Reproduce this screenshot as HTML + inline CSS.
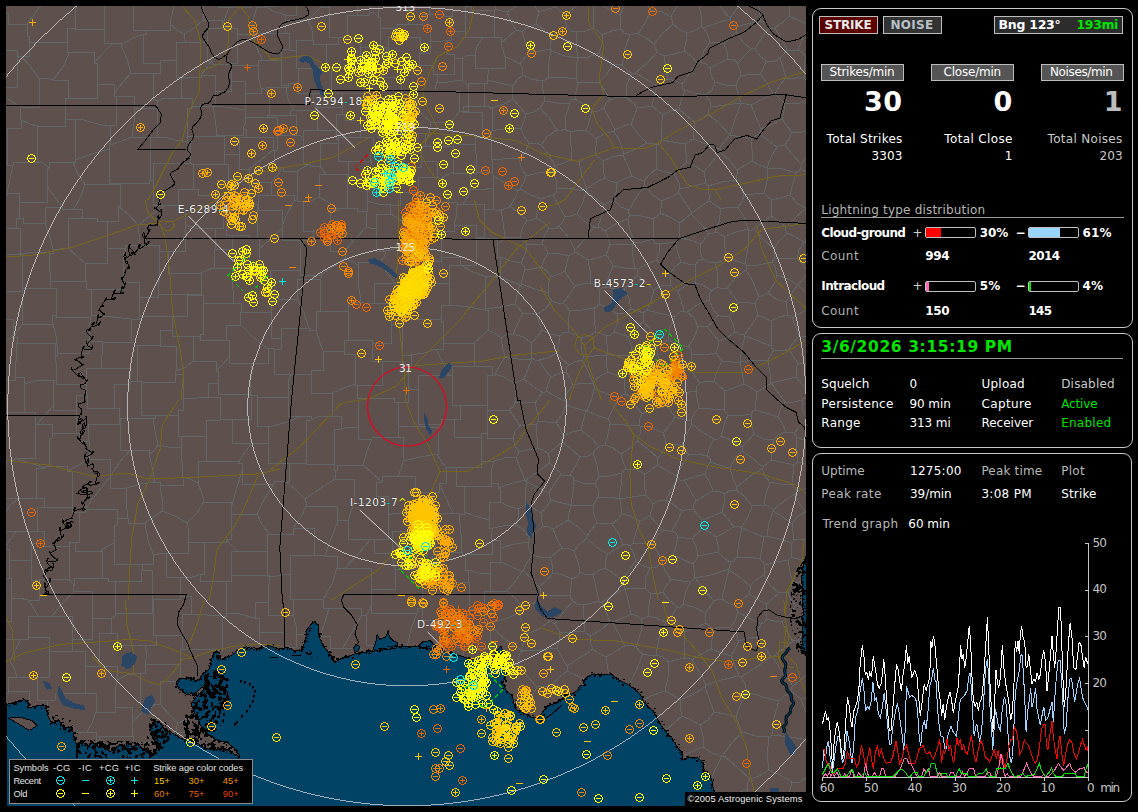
<!DOCTYPE html><html><head><meta charset="utf-8"><title>Lightning detector</title><style>
html,body{margin:0;padding:0;background:#000;}
body{width:1138px;height:812px;position:relative;overflow:hidden;}
.t{position:absolute;white-space:pre;display:block}
.box{position:absolute;border:1px solid #c8c8c8;border-radius:9px;box-sizing:content-box}
.btn{position:absolute;border:1px solid #bdbdbd;box-sizing:content-box}
.hl{position:absolute;height:1px;background:#9a9a9a}
.bar{position:absolute;width:49px;height:9px;border:1px solid #c0c0c0;border-radius:2px;background:#000;box-sizing:content-box}
.bar i{display:block;height:9px}
svg{position:absolute;display:block}
</style></head><body>
<svg width="800" height="800" viewBox="6 6 800 800" style="left:6px;top:6px">
<rect x="6" y="6" width="800" height="800" fill="#5e504c"/>
<path d="M819 2L815 -4L811 -10M819 2L814 13L812 27M821 30L817 29L812 27M182 639V614H191M182 639V649H189M191 614L207 615L222 616M222 616V650H217M189 649L204 649L217 650M259 632V618H255M259 632V656H241M255 618L240 614L226 613M241 656L233 657L223 657M226 613V616H222M217 650V657H223M182 639V635H156M180 596H191V614M180 596V599H153M156 635H153V599M62 -1L66 2L69 3M69 3H106V-5M860 696L830 698L801 699M894 706L853 722L812 736M801 699L808 718L812 736M813 767L810 752L809 740M812 736L810 739L809 740M583 821L586 807L590 795M621 818L612 807L603 796M590 795L597 795L603 796M333 816H352V804M373 817V804H352M243 805H236V877M243 805V804H245M245 804V815H279M206 928L204 867L202 807M202 807V803H206M206 803L225 805L243 805M210 782H206V803M210 782V771H228M228 771V780H249M249 780H245V804M282 775H290V812M282 775L270 775L260 773M290 812V815H279M249 780H260V773M492 375H487V397M492 375V366H474M474 366H452V376M452 376V405H460M487 397V405H460M285 772H321V768M285 772V736H287M287 736V730H295M295 730L306 735L315 740M315 740V768H321M297 815V810H313M297 815V812H290M313 810L321 790L326 772M282 775V772H285M326 772H321V768M313 810H333V816M789 6L798 -2L806 -10M789 6L779 -0L771 -7M817 148L808 155L801 164M801 164L801 166L800 169M800 169L811 174L819 181M724 237L725 248L727 257M724 237L736 232L748 229M745 264L748 247L748 230M745 264L737 261L727 257M748 229L749 228L748 230M823 80L816 83L810 83M810 83L807 92L806 102M844 101L828 104L810 107M810 107L809 105L806 102M820 57L812 57L806 57M806 57L804 66L804 77M804 77L806 81L810 83M775 94L780 85L786 78M775 94L779 98L784 103M804 77L796 78L786 78M784 103L794 104L806 102M812 130L812 119L810 107M674 174L681 167L687 162M674 174L665 172L656 169M656 169L657 157L656 145M687 162L686 153L685 144M685 144L673 142L662 140M656 145L660 144L662 140M645 185L652 194L661 201M645 185L644 182L644 181M680 189L679 183L674 174M680 189L678 191L679 193M679 193L671 197L661 201M644 181L649 175L656 169M644 181L638 179L632 176M647 143L636 149L624 154M647 143L652 143L656 145M624 154L623 154L623 155M632 176L628 166L623 155M-4 578H9V560M-32 534L-13 542L5 549M9 560V549H5M31 564V543H44M31 564V560H9M16 531L25 531L37 531M16 531L9 541L5 549M44 543V531H37M67 471H72V507M67 471V466H49M49 466H45V468M45 468H36V498M72 507L59 507L44 507M44 507V498H36M75 542H79V512M75 542H69V546M69 546H44V543M79 512H72V507M37 531V507H44M85 509L98 492L110 477M85 509H117V525M117 525V518H128M128 518L126 502L126 488M110 477V488H126M79 512H85V509M110 477V459H89M110 477L111 478L110 477M89 459L79 465L67 471M75 542V551H100M100 551L106 547L114 543M114 543V525H117M114 543V564H142M145 523H128V518M145 523L148 540L153 554M153 554V564H142M287 736H259V732M260 773H251V737M259 732H251V737M225 750L237 743L250 737M225 750V771H228M251 737L250 735L250 737M225 750H211V743M211 743H212V724M212 724V715H230M250 737V715H230M141 570V581H108M141 570H152V598M152 598V613H115M108 581H115V613M100 551H102V578M102 578H108V581M142 564V570H141M9 128H-27V124M9 128H7V159M-39 161H7V159M17 57V87H-3M17 57V50H-8M9 128H21V120M-3 87L8 99L20 107M21 120L20 114L20 107M17 57V56H21M20 107H39V78M21 56L30 66L39 78M44 2L35 13L27 24M44 2H17V-37M27 24H8V13M8 13H1V-12M62 -1L54 1L44 2M-19 25V13H8M21 56H29V36M29 36H27V24M97 84V63H94M97 84V98H68M68 98V80H53M53 80L63 67L70 52M94 63V52H70M69 3H75V28M29 36V42H67M75 28H67V42M53 80L47 78L39 78M70 52H67V42M75 28V29H104M111 -2H104V29M94 63L103 53L113 43M104 29V43H113M21 120L30 124L37 126M68 98H65V117M37 126H65V117M494 10H471V6M494 10V37H484M484 37L485 37L483 37M483 37H465V27M465 27V6H471M439 -13V0H452M452 0L458 -1L465 -0M801 699L796 695L792 692M772 735L774 718L779 701M772 735L790 737L809 740M779 701L784 696L792 692M816 664L805 676L793 686M793 686L791 688L792 692M813 767L810 774L805 778M826 810L814 793L805 778M560 827L554 814L548 799M590 795L589 794L590 795M548 799L549 795L551 789M590 795L570 791L551 789M642 819L644 807L644 795M603 796L611 787L622 780M622 780L633 789L644 795M683 788L685 789L684 789M683 788L670 787L657 784M684 789L682 802L682 818M657 784L651 789L644 795M548 799L536 805L523 810M517 834L521 823L523 810M779 701L763 697L747 692M793 686L782 672L773 657M771 657L773 656L773 657M771 657L758 666L741 677M741 677L745 684L747 692M769 737L756 736L742 732M769 737L771 737L772 735M742 732L739 725L736 717M747 692L741 703L736 717M683 788L685 772L685 755M653 762L654 772L657 784M653 762L662 755L673 750M673 750L678 752L685 755M373 817V805H392M414 814V807H411M411 807L403 808L392 805M259 632H284V647M255 618V602H268M293 615H268V602M293 615L296 625L296 634M296 634V647H285M284 647L285 648L285 647M430 687L414 692L400 695M430 687L433 697L440 705M440 705V723H428M400 695L401 697L400 699M400 699L405 712L413 725M428 723H413V725M372 717V699H400M372 717L366 711L358 704M357 686L357 695L358 704M357 686V679H362M393 683V679H362M393 683V695H400M372 717V738H375M375 738V736H405M405 736V725H413M371 743L363 744L352 745M371 743H378V768M352 745H332V772M378 768V773H376M376 773H351V785M351 785H332V772M375 738L374 740L371 743M336 717V704H358M336 717L335 722L335 729M335 729H352V745M315 740V729H335M326 772L329 772L332 772M352 804L351 794L351 785M392 805V773H376M707 456L698 454L689 454M707 456L710 458L710 462M689 454L682 465L676 476M676 476L677 476L678 478M678 478L680 480L684 480M684 480L695 477L705 474M710 462L708 466L705 474M798 50L793 50L787 50M798 50L803 37L811 27M787 50L782 40L775 28M811 27L800 21L789 16M789 16L784 21L775 28M806 57L802 52L798 50M786 78L783 68L780 58M780 58L783 55L787 50M812 27L812 27L811 27M789 6L789 11L789 16M761 21L747 24L736 27M761 21L766 23L769 28M769 28L762 37L755 49M736 27L736 28L736 32M736 32L743 42L751 49M755 49L753 48L751 49M758 -5L759 8L761 21M775 28L771 28L769 28M766 61L775 61L780 58M766 61L760 56L755 49M695 122L687 116L679 109M695 122L694 129L693 139M693 139L690 141L685 144M662 140L661 128L663 115M679 109L671 111L663 115M647 143L638 134L631 124M637 108L635 115L631 124M637 108L645 107L652 106M652 106L658 111L663 115M737 63L734 59L728 59M737 63L744 56L751 49M736 32L730 38L724 44M728 59L727 52L724 44M657 86L654 96L652 106M657 86L663 82L668 79M668 79L676 81L682 84M679 109L681 101L685 90M682 84L683 89L685 90M684 51L674 54L664 56M684 51L691 56L697 63M664 56L666 67L668 79M682 84L689 74L697 63M728 59L720 63L710 68M710 42L716 42L724 44M710 42L704 51L700 62M710 68L706 64L700 62M766 61L763 69L760 74M737 63L740 70L741 76M741 76L752 74L760 74M775 94L775 95L773 94M773 94L767 83L760 74M710 68L711 75L715 82M741 76L738 80L736 86M736 86L726 85L715 82M685 90L695 93L706 95M697 63L697 61L700 62M706 95L712 90L715 82M660 213L670 217L680 223M660 213L656 217L653 219M679 238L679 231L680 223M679 238L677 242L675 242M653 239L653 230L653 219M653 239L655 243L659 244M675 242L668 243L659 244M715 263L709 262L703 259M715 263L722 261L727 257M703 259L700 252L701 244M724 237L719 233L715 232M701 244L704 240L709 233M715 232L711 234L709 233M701 244L690 240L679 238M680 223L686 218L691 214M709 233L701 224L691 214M679 193L686 204L692 213M660 213L661 208L661 201M692 213L692 213L691 214M773 94L761 100L751 105M736 86L738 94L741 103M751 105L746 104L741 103M719 149L721 150L720 152M719 149L706 144L693 139M687 162L695 166L704 172M720 152L712 162L704 172M680 189L694 186L706 183M706 183L705 178L704 172M782 119L786 125L792 132M782 119L771 125L761 129M792 132L789 139L785 145M761 129L760 132L759 134M759 134L769 141L777 147M785 145L781 145L777 147M812 130L802 132L792 132M784 103L784 111L782 119M751 105L756 117L761 129M801 164L792 154L785 145M751 139L754 137L759 134M751 139L752 149L752 161M752 161L759 165L767 168M767 168L771 157L777 147M645 185L637 196L629 210M653 219L641 216L630 215M629 210L628 212L630 215M653 239L643 242L634 242M634 242L630 230L628 219M628 219L629 217L630 215M586 191L586 190L586 191M586 191L586 190L587 189M586 191L594 197L604 205M587 189L595 183L605 178M616 183L610 181L605 178M616 183L616 192L615 201M615 201L609 202L604 205M577 214L583 202L586 191M577 214L584 221L594 227M594 227L596 228L598 227M598 227L602 215L604 205M603 161L603 170L605 178M603 161L600 158L595 155M579 162L586 158L595 155M579 162L582 176L587 189M603 161L612 157L623 155M632 176L624 179L616 183M629 210L621 207L615 201M605 231L601 228L598 227M605 231L617 223L628 219M102 355L101 361L101 368M102 355V341H89M101 368H86V384M89 341V353H58M86 384H56V369M56 369L56 363L55 358M58 353L57 356L55 358M-7 512L-2 511L5 513M5 513L11 504L20 498M20 498H2V466M-20 477L-10 470L2 466M16 531H5V513M36 498L29 498L20 498M45 468L30 463L14 458M6 460H14V458M6 460V466H2M-13 424L-3 443L6 460M52 438H49V466M52 438V433H79M89 459V441H88M79 433V441H88M432 681V654H420M432 681H457V671M420 654V643H454M457 671H463V649M463 649L457 647L454 643M472 693L465 682L457 671M472 693H459V707M459 707H440V705M430 687H432V681M472 693L480 692L487 693M471 648H499V671M471 648H463V649M499 671L493 683L487 693M392 553H374V539M392 553V531H422M374 539H388V515M413 514L399 513L388 515M413 514L417 519L422 526M422 531L423 529L422 526M17 343V337H13M17 343L16 361L15 377M-18 356L-2 345L13 337M-10 380H15V377M289 463H268V438M289 463V481H285M242 471V463H238M242 471V484H274M238 463L245 452L252 443M268 438V443H252M285 481H274V484M305 499L306 502L306 506M305 499L295 489L285 481M293 528L300 519L306 506M293 528V534H270M274 484L265 498L257 514M257 514L262 525L270 534M242 471L236 490L231 509M257 514H231V509M226 613V581H223M268 602V584H269M269 584V575H231M223 581H231V575M277 576H269V584M277 576H267V541M267 541V551H237M231 575V551H237M231 509L231 508L231 509M231 509V539H226M267 541V534H270M237 551L230 544L226 539M248 694H263V703M248 694V670H255M263 703H288V695M288 695V668H271M255 670H271V668M259 732L261 718L263 703M230 715H233V697M233 697L241 696L248 694M241 656H255V670M217 684L221 670L223 657M217 684H233V697M284 647L277 659L271 668M202 807V799H173M160 816H173V799M13 731H29V718M13 731V755H15M47 719L37 719L29 718M47 719V729H53M53 729L52 741L49 755M49 755V764H30M15 755V764H30M-9 724H13V731M15 755H-13V763M217 684H200V690M212 724H198V711M200 690L199 702L198 711M134 817H125V810M173 799H166V783M125 788L124 801L125 810M125 788V781H135M166 783H135V781M55 700V693H72M55 700H47V719M53 729V732H87M87 732L92 723L96 712M72 693H96V712M156 635V645H145M153 599L152 600L152 598M145 645H117V633M115 613L115 616L111 619M111 619V633H117M72 693H85V666M117 680V666H99M117 680L115 693L115 707M96 712H115V707M85 666L91 666L99 666M736 606L736 609L738 612M736 606L742 600L749 594M766 619L764 623L761 624M766 619L766 613L767 604M767 604L759 600L749 594M738 612L749 618L761 624M174 -1L173 10L170 24M133 -3V30H146M146 30H170V24M198 -8H203V20M203 20L194 28L184 34M170 24L177 30L184 34M-11 229L1 229L16 228M-9 259V254H20M20 254V228H16M501 43L503 50L505 57M501 43V37H484M475 55L477 46L483 37M475 55V68H488M505 57V68H488M435 91H459V112M435 91L435 88L437 82M468 86V111H460M468 86L464 82L462 80M437 82L448 82L462 80M459 112L459 112L460 111M437 82V74H433M462 80L462 69L462 58M462 58H454V54M454 54V74H433M826 810L818 817L810 823M805 778L800 782L792 782M792 782L788 797L782 814M769 737L767 755L769 770M792 782L782 776L769 770M720 800L734 795L747 789M720 800L714 795L708 788M708 788L714 772L722 756M750 779L747 784L747 789M750 779L737 767L723 755M723 755L723 756L722 756M684 789L696 789L708 788M703 747L695 750L685 755M703 747L712 753L722 756M769 770L759 776L750 779M758 812L751 800L747 789M742 732L732 743L723 755M720 800L720 811L718 821M115 817V810H125M622 780L622 771L621 763M653 762L646 758L640 755M621 763L630 761L640 755M486 818V799H482M447 827H462V797M462 797L471 799L482 799M741 677L741 677L739 676M736 717L725 714L714 712M739 676L721 680L706 685M706 685L705 686L705 687M705 687L709 698L714 712M703 747L703 736L700 725M714 712L708 720L700 725M705 687L692 695L680 700M700 725L691 720L682 716M680 700L680 708L682 716M673 750L670 740L666 730M682 716L674 723L666 730M640 755L639 738L641 722M666 730L652 725L641 722M608 554L596 547L587 538M608 554L605 561L605 568M587 538L580 544L574 551M605 568L598 571L593 574M593 574L586 575L580 572M580 572L578 562L574 551M590 795L590 777L588 758M551 789L551 785L550 785M550 785L554 775L559 765M559 765L573 762L588 758M606 754L615 757L621 763M606 754L597 756L588 757M588 757L589 758L588 758M606 754L610 741L614 728M641 722L639 719L638 718M614 728L627 721L638 718M665 691L651 696L639 703M665 691L671 694L680 700M639 703L637 711L638 718M523 711L530 699L537 687M523 711L537 723L550 734M550 734L560 728L572 722M552 686L544 686L537 687M552 686L563 702L573 719M573 719L573 721L572 722M499 671L509 666L518 664M487 693V718H506M506 718L513 714L523 711M518 664L527 676L537 687M547 742L550 739L550 734M547 742L554 755L559 765M588 757L579 741L572 722M567 671L558 678L552 686M567 671L584 679L600 688M600 688L595 701L589 713M589 713L581 715L573 719M589 713L601 721L614 728M631 614L628 600L625 589M631 614L623 618L612 622M612 622L611 623L610 622M625 589L613 595L602 602M610 622L606 612L602 602M610 622L601 630L590 636M583 605L592 603L599 601M583 605L584 618L584 631M602 602L599 602L599 601M584 631L586 633L590 636M625 646L616 651L606 657M625 646L632 645L636 647M636 647L640 652L643 654M643 654L636 671L627 689M606 657L608 670L608 684M608 684L617 685L627 689M612 622L619 634L625 646M593 649L590 642L590 636M593 649L598 653L606 657M631 614L637 616L642 619M642 619L641 632L636 647M669 662L668 677L665 691M669 662L662 657L656 655M639 703L634 695L627 689M656 655L648 655L643 654M567 671L568 668L567 666M600 688L606 687L608 684M593 649L581 657L567 666M416 761L432 760L447 760M416 761H411V766M411 766H413V804M413 804H449V784M449 784H447V760M405 736V761H416M378 768V766H411M411 807L411 806L413 804M462 797V784H449M299 701H295V697M299 701L307 702L316 701M295 697V667H305M316 701L323 690L332 682M332 682V662H324M324 662V667H305M295 730H299V701M288 695L292 697L295 697M336 717H316V701M285 647V667H305M357 686L344 685L332 682M740 362L732 362L722 361M740 362L742 372L744 384M722 361L717 371L714 381M714 381L719 386L725 391M744 384L736 387L725 391M817 389L812 389L808 390M815 361L807 363L798 363M798 363L796 369L796 377M796 377L802 384L808 390M805 208L815 202L822 197M805 208L806 209L805 209M805 209L808 217L813 224M797 258L787 258L774 259M797 258L799 250L804 242M787 233L796 237L804 242M787 233L779 241L774 249M774 249L774 254L774 259M805 209L795 218L786 227M813 224L810 232L805 241M786 227L785 229L787 233M805 241L805 242L804 242M771 216L762 223L754 229M771 216L777 220L786 227M754 229L764 240L774 249M808 271L813 270L819 269M808 271L803 265L797 258M805 241L812 244L820 249M718 552L718 545L716 537M718 552L708 554L698 556M698 556L696 546L692 538M716 537L709 532L702 528M702 528L698 533L692 538M693 564L696 560L698 556M693 564L682 559L673 555M678 537L676 546L673 555M678 537L685 538L692 538M794 540L793 532L792 524M794 540L805 539L820 536M821 516L814 514L805 512M805 512L797 517L792 524M794 540L794 541L792 543M792 543L779 539L767 536M792 524L783 517L773 511M767 536L769 523L773 511M713 491L720 492L725 494M713 491L704 496L696 501M725 494L724 503L722 512M722 512L713 516L702 520M702 520L699 516L693 509M696 501L694 504L693 509M684 480L690 490L696 501M705 474L710 483L713 491M734 527L737 526L741 528M734 527L727 518L722 512M736 490L729 491L725 494M736 490L744 496L752 506M741 528L748 517L752 506M734 527L724 533L716 537M702 528L701 523L702 520M678 537L676 533L672 531M682 511L678 520L672 531M682 511L689 509L693 509M678 478L672 489L666 500M666 500L674 505L682 511M737 487L733 479L730 468M737 487L749 477L762 469M730 468L735 458L742 451M742 451L752 458L763 467M762 469L763 468L763 467M710 462L719 465L730 468M736 490L737 487L737 487M747 -6L739 6L730 18M736 27L733 24L730 19M730 18L731 20L730 19M710 42L707 33L703 28M730 19L717 23L703 28M551 51L548 66L548 78M551 51L565 56L578 58M548 78L562 77L576 79M578 58L576 68L576 79M624 154L620 142L614 131M595 155L596 146L596 139M596 139L604 134L614 131M631 124L623 126L615 130M614 131L614 131L615 130M708 114L709 109L711 107M708 114L719 123L730 135M711 107L725 105L741 103M741 103L735 119L730 135M730 135L731 134L730 135M695 122L702 119L708 114M706 95L710 101L711 107M719 149L725 141L730 135M741 103L741 103L741 103M751 139L741 137L730 135M720 152L730 161L737 170M752 161L745 165L737 170M715 263L718 274L717 287M703 259L698 261L696 264M717 287L716 288L712 291M712 291L703 285L695 283M695 283L695 274L696 264M675 242L678 253L681 262M696 264L688 264L681 262M659 244L659 253L656 260M656 260L664 266L670 273M681 262L675 267L670 273M569 332L576 335L581 338M569 332L568 322L570 311M581 338L589 336L596 332M596 332L594 319L594 308M594 308L582 310L570 311M552 301L549 297L548 293M552 301L557 303L563 303M548 293L548 284L551 277M565 271L559 274L551 277M565 271L570 280L575 286M575 286L570 294L563 303M552 301L545 309L537 315M560 336L563 333L569 332M560 336L551 334L542 330M537 315L539 323L542 330M570 311L567 307L563 303M634 242L634 243L632 245M605 231L608 237L610 245M610 245L622 244L632 245M656 260L647 264L637 270M637 270L637 269L635 268M632 245L633 257L635 268M736 180L740 186L744 195M736 180L722 182L708 186M721 209L715 205L709 201M721 209L729 207L738 207M738 207L742 202L744 195M709 201L709 194L708 186M706 183L706 184L708 186M737 170L737 175L736 180M715 232L719 222L721 209M692 213L700 207L709 201M748 229L744 217L738 207M768 168L767 181L764 193M768 168L783 169L796 173M796 173L793 183L790 195M790 195L781 198L772 200M772 200L767 196L764 193M767 168L768 168L768 168M744 195L754 194L764 193M800 169L798 172L796 173M805 208L797 203L790 195M771 216L771 209L772 200M754 229L752 230L748 230M541 267L545 258L548 253M541 267L532 269L525 270M525 270L524 266L521 263M521 263L525 254L527 244M527 244L534 245L542 244M542 244L545 247L548 253M565 271L567 262L569 256M569 256L560 254L548 253M551 277L547 271L541 267M548 293L535 289L521 284M521 284L523 276L525 270M497 244L502 241L505 237M497 244V257H500M500 257L511 261L521 263M520 237L514 238L505 237M520 237L524 241L527 244M537 315L530 313L523 313M532 343L538 336L542 330M532 343L523 337L513 334M523 313L518 323L513 334M520 237L522 229L527 220M527 220L532 220L536 218M542 244L544 237L549 228M536 218L543 222L549 228M575 252L574 251L575 250M575 252L573 254L569 256M575 250L569 238L559 226M549 228L556 228L559 226M575 250L584 240L594 227M577 214L571 216L565 217M559 226L562 223L565 217M22 324H52V320M22 324V291H20M56 315V288H50M56 315H52V320M50 288L49 288L50 288M50 288H22V289M22 289V291H20M58 353L56 336L52 320M55 358V343H17M13 337L12 337L13 335M13 335L18 331L22 324M92 289H86V281M92 289L91 302L92 315M92 315H91V317M91 317H56V315M86 281H50V288M91 317L89 330L89 341M86 281L85 271L85 263M85 263L78 257L68 248M68 248L60 249L53 249M49 253H53V249M49 253L50 272L50 288M20 254L36 252L49 253M20 254H22V289M13 335V319H-11M20 291H-12V289M20 254L19 253L20 254M392 553L393 561L395 569M374 539L371 540L371 539M371 539L359 553L345 568M395 569V589H371M371 589V568H345M446 620H422V608M446 620H469V603M422 608V586H424M469 603V582H462M462 582H424V586M422 531H435V551M395 569H422V583M435 551L429 566L422 583M422 526V513H453M453 513L456 513L459 514M435 551L448 553L462 552M459 514L461 534L462 552M468 570V582H462M468 570H465V554M422 583V586H424M465 554H462V552M19 412H24V384M19 412H35V424M37 424L36 424L35 424M37 424L45 415L53 406M53 406V380H46M46 380L35 381L24 384M-7 417V412H19M15 377H24V384M14 458H35V424M52 438V424H37M76 410V433H79M76 410H53V406M86 384V395H87M56 369V380H46M76 410V395H87M187 523L197 513L204 502M187 523L175 516L162 511M204 502L202 494L198 483M160 485L162 498L162 511M160 485H183V477M183 477L190 479L198 483M222 461H238V463M222 461H198V483M231 509V502H204M155 482H160V485M155 482L141 484L126 488M145 523L155 516L162 511M206 437L201 436L192 436M206 437V461H222M181 448V436H192M181 448L182 462L183 477M87 395V408H114M88 441V424H119M114 408H119V424M101 368H130V384M114 408V384H130M149 454L155 450L158 445M149 454V450H130M158 445L155 431L153 418M130 450H120V425M120 425V418H153M155 482L152 467L149 454M181 448L168 447L158 445M110 477L119 463L130 450M119 424L120 425L120 425M206 437V420H220M252 443H232V419M232 419H220V420M192 577L196 576L200 574M192 577H166V553M200 574H204V542M166 553H188V527M188 527V542H204M180 596V577H192M223 581H200V574M153 554L159 554L166 553M226 539V542H204M187 523L187 524L188 527M69 546V579H67M31 564V580H39M39 580L53 579L67 579M102 578H74V586M74 586L71 581L67 579M69 788H65V768M69 788V793H82M82 793V780H109M65 768L80 760L96 751M109 780V752H99M99 752V751H96M90 813V793H82M125 788V780H109M49 755H65V768M87 732H96V751M133 736V742H138M133 736H99V752M138 742V781H135M132 722V736H133M132 722V707H115M27 781V790H13M27 781H50V805M13 790H11V813M50 805L38 817L27 826M50 805L50 804L50 805M30 764L28 773L27 781M-10 781H13V790M69 788V805H50M74 835L62 820L50 805M157 704L158 704L160 704M157 704H140V673M160 704V681H183M145 664V673H140M145 664H180V672M180 672V681H183M132 722L144 711L157 704M117 680L127 675L140 673M200 690H183V681M198 711L188 719L178 723M178 723L169 714L160 704M145 645L147 654L145 664M117 633H99V666M189 649H180V672M177 732H161V745M177 732H199V749M161 745L167 759L172 771M172 771V764H194M194 764V749H199M178 723L176 727L177 732M138 742H161V745M211 743V749H199M166 783L167 778L172 771M210 782H194V764M92 619V639H72M92 619V591H74M72 639V616H52M74 591L63 603L52 616M111 619L103 618L92 619M71 651H72V639M71 651H85V666M74 586L73 589L74 591M608 419L613 409L619 398M608 419L596 415L587 411M619 398L608 394L594 389M594 389L592 398L587 411M560 336L559 343L557 353M581 338L581 349L584 357M584 357L583 359L582 360M582 360L575 362L569 365M557 353L563 360L569 365M582 360L587 369L593 382M573 385L584 383L593 384M573 385L570 378L566 372M593 382L593 384L593 384M569 365L566 368L566 372M738 612L735 621L730 627M757 637L759 629L761 624M757 637L749 638L739 641M730 627L736 634L739 641M771 657L765 648L757 637M739 676L735 666L731 656M739 641L735 649L731 656M766 619L775 621L782 622M773 657L784 648L793 641M793 641L787 632L782 622M816 652L807 647L798 641M793 641L797 640L798 641M798 641L806 628L813 613M121 45L131 39L143 34M121 45L127 59L131 73M143 34V63H160M131 73L143 74L153 73M153 73H160V63M113 43H121V45M146 30V34H143M97 84H114V93M114 93L123 82L131 73M184 34L184 38L186 42M160 63V60H176M186 42H176V60M222 26L223 28L223 28M222 26V20H203M223 28H207V51M186 42H207V51M246 -16V4H251M251 4V7H229M229 7H218V-9M222 26L225 18L229 7M114 93L114 96L116 96M161 100H153V73M161 100H157V104M157 104V108H134M116 96H134V108M161 100V98H181M176 60V77H190M181 98V77H190M212 61H207V51M212 61L206 69L201 75M201 75V77H190M165 137H157V104M165 137L175 140L187 142M181 98H192V108M187 142V108H192M474 343H443V335M474 343L482 336L488 330M449 305H441V322M449 305L468 307L485 310M485 310H488V330M443 335V322H441M82 218H68V248M82 218H97V221M85 263H107V248M97 221H107V248M92 289H123V282M123 282V253H125M107 248H125V253M159 254V280H158M159 254V245H139M158 280V297H139M123 282H139V297M125 253V245H139M53 249L50 237L45 223M16 228V218H23M45 223H23V218M82 218V209H74M74 209H62V207M45 223V207H62M551 51L552 49L550 49M548 78L545 80L542 81M520 64L522 68L523 75M520 64L526 56L530 51M530 51L540 51L550 49M523 75L531 79L542 81M521 128L524 136L529 143M521 128L524 121L526 114M557 130L548 136L541 145M557 130L549 118L540 108M526 114L534 112L540 108M529 143L536 143L541 145M296 -11V15H285M276 -24V6H264M285 15L275 12L264 6M223 28H237V37M237 37V34H250M251 4L253 4L257 7M250 34L253 20L257 7M257 7H264V6M435 91H417V106M417 106L423 115L431 122M459 112L455 117L452 120M431 122H452V120M521 128L507 129L496 130M529 143L525 152L519 159M519 159L511 158L502 159M502 159H491V136M496 130H491V136M465 27V31H451M452 0V16H444M465 -0V6H471M451 31V16H444M475 55L468 55L462 58M454 54H447V40M451 31V40H447M431 -11H423V0M423 0H429V14M444 16V14H429M428 723V748H448M447 760L449 758L448 758M448 748L449 752L448 758M459 707H465V727M448 748H465V727M506 718L503 725L500 732M465 727H500V732M503 789L500 790L494 789M503 789L513 781L525 772M494 789L490 775L486 760M525 772L524 764L522 754M522 754L511 747L501 740M501 740H486V760M523 810L513 801L503 789M482 799L487 794L494 789M550 785L537 777L525 772M448 758H486V760M547 742L534 747L522 754M500 732L501 736L501 740M619 499L621 486L622 473M619 499L610 497L598 497M598 497L598 490L595 484M595 484L597 480L599 477M599 477L609 476L622 473M549 493L550 497L551 500M549 493L555 483L561 474M551 500L562 503L571 505M561 474L565 476L570 475M571 505L571 505L571 505M571 505L573 492L574 480M570 475L573 477L574 480M527 482L539 488L549 493M527 482L525 493L525 505M541 513L533 508L525 505M541 513L547 506L551 500M597 523L591 530L587 536M597 523L594 514L593 506M587 536L578 527L568 520M593 506L583 505L571 505M568 520L569 513L571 505M598 497L596 500L593 506M595 484L583 483L574 480M580 457L576 465L570 475M580 457L588 456L593 453M599 477L597 465L593 453M550 558L557 552L562 548M550 558L540 557L532 555M562 548L557 539L553 529M532 555L529 549L528 542M553 529L547 526L543 526M543 526L537 532L529 537M528 542L529 539L529 537M580 572L577 577L572 579M574 551L568 548L562 548M553 573L563 575L572 579M553 573L552 564L550 558M553 573L546 581L539 587M539 587L532 579L523 571M523 571L526 564L532 555M587 538L586 537L587 536M568 520L560 525L553 529M541 513L541 519L543 526M593 574L596 588L599 601M572 579L571 587L570 595M583 605L577 604L573 601M573 601L570 597L570 595M539 587L541 590L540 595M570 595L556 595L540 595M625 589L624 588L625 589M605 568L613 573L622 580M622 580L623 583L625 589M567 666L562 657L557 648M584 631L573 632L560 632M557 648L559 641L560 632M518 664L518 658L521 651M557 648L540 650L521 651M573 601L564 611L555 624M560 632L557 627L555 624M537 601L537 599L540 595M537 601L543 612L550 621M555 624L552 622L550 621M696 391L697 398L699 408M696 391L697 386L700 383M714 381L706 381L700 383M725 391L724 400L724 409M699 408L711 409L724 409M675 317L680 312L684 311M675 317L659 313L647 310M684 311L681 300L678 291M654 290L651 301L647 310M654 290L661 286L670 285M670 285L673 288L678 291M709 300L709 294L712 291M709 300L697 305L687 312M687 312L686 312L684 311M695 283L685 286L678 291M637 270L638 272L637 275M670 273L670 280L670 285M637 275L646 283L654 290M668 340L678 344L688 347M668 340L665 342L660 343M658 346L660 344L660 343M658 346L657 352L659 360M659 360L667 366L676 370M676 370L682 369L688 365M688 365L691 360L692 354M692 354L691 349L688 347M698 327L694 318L687 312M698 327L694 338L688 347M675 317L670 327L668 340M650 371L652 379L653 385M650 371L655 367L659 360M653 385L661 388L668 393M668 393L670 394L669 393M669 393L673 382L676 370M696 391L682 393L669 393M700 383L693 374L688 365M716 353L719 357L722 361M716 353L705 355L692 354M487 397V410H498M460 405V419H454M454 419V437H481M498 410H487V433M481 437V433H487M498 410L503 410L509 410M509 410L515 418L520 426M520 426L515 431L513 438M487 433V438H513M802 400L794 402L785 402M802 400L803 411L807 419M785 402L781 408L778 417M807 419L800 426L794 433M778 417L782 423L786 432M794 433L788 432L786 432M796 377L784 380L771 383M771 383L777 391L785 402M808 390L806 397L802 400M825 420L815 419L807 419M771 383L772 382L771 383M771 383L764 388L757 392M757 392L756 401L755 410M755 410L766 413L778 417M823 446L809 442L796 437M796 437L796 436L794 433M745 264L746 265L747 266M774 259L774 259L772 262M747 266L759 265L772 262M727 288L723 289L717 287M727 288L735 278L746 270M747 266L746 269L746 270M808 271L804 278L798 285M798 285L788 279L777 275M772 262L775 267L777 275M817 303L808 295L798 285M798 285L799 285L798 285M796 437L797 450L797 462M771 460L781 462L794 465M771 460L771 449L774 440M774 440L778 435L786 432M797 462L795 465L794 465M797 462L808 464L817 465M792 543L791 549L791 557M791 557L805 561L819 565M764 575L764 571L765 565M764 575L756 580L750 586M750 586L741 578L729 570M760 559L762 561L765 565M760 559L749 557L737 557M737 557L734 561L730 562M730 562L730 565L729 569M729 570L728 568L729 569M767 604L772 599L779 593M749 594L750 590L750 586M779 593L770 585L764 575M736 606L728 603L722 599M722 599L725 585L729 570M764 537L766 536L767 536M764 537L762 548L760 559M791 557L790 558L788 560M788 560L776 562L765 565M764 537L754 533L742 528M742 528L739 541L737 557M718 552L724 558L730 562M742 528L741 529L741 528M693 564L694 570L695 578M695 578L694 579L695 578M695 578L711 575L729 569M722 599L719 599L714 601M695 578L705 591L714 601M771 383L770 373L768 360M740 362L739 363L740 362M744 384L750 387L757 392M740 362L755 360L768 360M798 285L792 293L786 302M777 275L774 284L768 293M786 302L776 299L768 293M746 270L753 282L759 297M759 297L764 295L768 293M789 349L782 351L774 350M789 349L793 343L799 336M799 336L795 325L792 318M774 350L771 348L771 346M771 346L772 334L771 321M771 321L779 317L788 315M792 318L790 317L788 315M798 363L793 356L789 349M768 360L770 356L774 350M813 337L805 336L799 336M817 305L804 311L792 318M740 362L742 347L745 336M745 336L756 340L771 346M786 302L787 309L788 315M745 336L744 334L744 335M771 321L765 318L758 315M744 335L751 326L758 315M727 288L734 296L738 303M759 297L756 301L755 304M738 303L747 302L755 304M755 304L757 311L758 315M684 51L686 41L687 33M703 28L703 27L702 27M687 33L693 31L702 27M684 -3L676 8L671 17M651 10L662 12L671 17M651 10L648 7L648 5M648 5L652 -4L654 -11M579 162L576 161L571 160M571 160L571 146L570 132M596 139L591 134L586 131M586 131L579 130L570 132M571 160L564 163L555 166M557 130L560 131L565 129M541 145L549 155L555 166M565 129L568 131L570 132M540 108L542 105L545 101M545 101L557 103L570 103M565 129L566 115L570 103M527 -1L518 5L507 12M527 -1L534 5L539 12M539 12L537 19L536 24M536 24L529 27L522 31M507 12L511 22L516 30M516 30L519 31L522 31M530 51L525 42L522 31M550 49L550 44L552 37M552 37L545 30L536 24M494 10L497 9L496 9M501 43L507 38L516 30M496 9L502 11L507 12M505 57L511 59L520 64M496 9L495 -3L496 -12M648 5L637 3L628 2M624 -10L626 -4L628 2M606 255L610 260L613 266M606 255L597 258L588 260M613 266L609 276L605 287M588 260L590 271L591 283M591 283L597 286L600 290M605 287L602 288L600 290M610 245L608 250L606 255M635 268L625 268L613 266M575 252L582 256L588 260M637 275L632 281L624 289M624 289L616 289L605 287M575 286L583 284L591 283M594 308L597 307L599 304M599 304L599 297L600 290M510 206L507 208L501 210M510 206L515 198L518 191M518 191L505 183L493 176M501 210L497 211L493 209M493 209V188H486M493 176V188H486M505 237L503 222L501 210M527 220L518 213L510 206M520 285L505 279L488 276M520 285L517 295L515 304M515 304L501 307L485 309M485 309V277H487M487 277L486 278L488 276M521 284L521 286L520 285M500 257V276H488M523 313L518 307L515 304M485 310L484 309L485 309M488 330L496 334L501 338M501 338L506 335L513 334M449 305L450 306L449 305M449 305V265H460M460 265L473 272L487 277M376 496V482H382M376 496V503H354M382 482L372 473L363 465M354 503V479H335M363 465H337V470M335 479V470H337M348 520V539H371M348 520L351 512L354 503M388 515V496H376M305 499L321 488L335 479M337 524V506H306M337 524V520H348M334 464V429H341M334 464V470H337M358 428L349 427L341 429M358 428V439H372M372 439L367 451L363 465M306 452V463H289M306 452V464H334M358 428V398H367M394 402V398H367M394 402H398V427M372 439V437H391M398 427V437H391M417 613H371V606M417 613L411 629L407 648M384 645V650H402M384 645H366V615M366 615L369 612L371 606M407 648V650H402M422 608H417V613M371 589L371 597L371 606M446 620V643H454M420 654H407V648M393 683V650H402M362 679L362 672L361 663M361 663H384V645M361 616V608H329M361 616L352 632L343 648M329 608L325 622L320 636M320 636H330V650M343 648H330V650M361 663V648H343M366 615H361V616M296 634H320V636M324 662V650H330M312 599H290V575M312 599L318 599L323 600M323 600L332 584L337 568M290 575V555H314M337 568V556H325M314 555H325V556M293 615V599H312M277 576L284 574L290 575M329 608H323V600M345 568L340 569L337 568M293 528H314V555M337 524L330 541L325 556M522 572L512 567L501 562M522 572L514 583L507 591M507 591L504 592L499 591M499 591H490V574M490 574V562H501M500 548L515 544L528 542M500 548L500 556L501 562M523 571L523 570L522 572M537 601L529 605L522 607M522 607L516 599L507 591M469 603V609H484M468 570L479 573L490 574M484 609V591H499M500 548V540H492M492 540V554H465M155 415H141V382M155 415H178V410M178 410H183V399M183 399V374H175M175 374V382H141M138 381H130V384M138 381H141V382M153 418H155V415M192 436H178V410M208 397H220V420M208 397L197 398L183 399M39 580V600H28M52 616L44 616L38 616M38 616L34 609L28 600M-4 578H11V599M11 599L19 598L28 600M11 599V621H-6M-11 718V693H1M-48 668H1V693M29 718V691H8M8 691V693H1M49 656V637H28M49 656V677H37M37 677L26 678L17 677M28 637V639H21M21 639L16 649L10 661M17 677L14 668L10 661M71 651H49V656M38 616H28V637M55 700H37V677M8 691V677H17M-5 623V639H21M-20 654L-6 658L10 661M633 397L636 406L642 414M633 397L642 392L653 385M668 393L669 399L667 406M667 406L655 409L642 414M633 397L629 396L626 394M608 419L610 422L610 424M610 424L626 425L640 426M619 398L623 395L626 394M642 414L639 420L640 426M637 441L648 449L658 458M637 441L630 448L621 454M626 469L623 461L621 454M626 469L637 470L645 474M645 474L650 471L657 465M657 465L657 463L658 458M610 424L608 434L605 445M605 445L613 448L621 454M640 426L639 424L640 426M640 426L640 434L637 441M605 445L603 445L599 447M622 473L624 470L626 469M593 453L595 450L599 447M608 372L615 375L624 379M608 372L606 364L606 355M607 354L607 354L606 355M607 354L618 356L629 355M624 379L628 372L632 367M629 355L630 360L632 367M626 394L624 386L624 379M594 389L595 387L593 384M593 382L600 376L608 372M584 357L594 356L606 355M606 336L602 334L596 332M606 336L607 345L607 354M650 371L642 368L632 367M632 350L646 347L658 346M632 350L630 353L629 355M587 411L588 410L586 411M599 447L591 438L581 430M581 430L583 421L586 411M580 457L570 448L562 442M562 442L561 438L563 436M581 430L572 432L563 436M532 343L531 351L532 358M557 353L548 358L539 360M532 358L535 360L539 360M566 372L560 373L551 377M539 360L545 370L551 377M730 627L721 627L712 629M731 656L722 653L711 649M711 649L712 639L712 629M706 685L699 671L692 660M711 649L703 653L692 660M669 662L676 660L684 658M684 658L690 658L692 660M378 17L374 13L369 12M378 17V0H399M369 12L370 3L368 -9M399 0L399 0L398 -2M423 0L413 -0L402 2M402 2H399V0M65 117V119H67M116 96V125H101M101 125L84 120L67 119M134 108L134 122L132 137M101 125H110V145M132 137L122 141L110 145M165 137H150V146M132 137H150V146M67 119H75V160M75 160L92 154L109 149M109 149V145H110M201 75H215V91M192 108V106H213M215 91V106H213M216 136H187V142M216 136L218 134L217 135M217 135L215 119L213 106M187 142L188 142L187 142M213 106L213 107L213 106M497 244V238H476M460 265L460 264L460 265M460 265H476V238M449 305V283H415M441 322V319H408M415 283H409V286M408 319L410 302L409 286M441 424V419H454M441 424H418V389M452 376V375H449M418 389V375H449M441 424L440 426L438 428M394 402H408V386M398 427L418 426L438 428M418 389L411 389L408 386M474 343L475 354L474 366M443 335V349H436M449 375L442 361L436 349M160 346V330H172M160 346V345H137M172 330V316H167M167 316H139V307M137 345H134V342M134 342H131V319M131 319H139V307M176 371H175V374M176 371V346H160M138 381L137 363L137 345M102 355V342H134M92 315L113 317L131 319M139 297L139 303L139 307M47 186V202H19M47 186V168H49M41 162L46 165L49 168M41 162H13V165M13 165L10 179L7 193M7 193H19V202M62 207L54 196L47 186M23 218H19V202M74 209L81 196L85 184M85 184L78 174L73 162M73 162H49V168M37 126V162H41M73 162H75V160M7 159V165H13M-6 195H7V193M513 99L512 92L513 86M513 99L504 104L492 108M513 86L500 83L487 80M492 108L491 109L489 106M489 106H484V83M484 83L487 83L487 80M523 75L517 80L513 86M542 81L543 91L545 101M526 114L519 106L513 99M496 130H492V108M488 68L488 74L487 80M463 112H482V137M463 112V106H489M491 136L488 137L482 137M468 86V83H484M460 111L462 111L463 112M541 199L546 197L553 195M541 199L531 195L520 189M520 189L524 182L526 176M526 176L538 173L553 171M553 171L556 180L557 188M557 188L556 193L553 195M536 218L538 208L541 199M565 217L559 206L553 195M518 191L518 189L520 189M519 159L521 167L526 176M492 172V159H502M492 172L493 175L493 176M555 166L554 169L553 171M586 191L572 189L557 188M338 142V137H360M338 142V139H336M365 120H360V137M365 120H345V114M345 114H336V139M402 98V91H401M402 98V112H378M401 91V77H381M381 77L375 79L366 83M378 112H364V88M366 83H364V88M492 172H476V164M482 137H475V144M475 144L476 154L476 164M452 120V143H453M475 144L464 145L453 143M402 2H408V24M429 14H422V25M408 24H422V25M447 40L439 42L430 41M422 25H430V41M608 554L614 550L623 545M597 523L604 523L612 524M623 545L619 534L612 524M650 516L646 518L640 521M650 516L652 509L653 504M646 495L632 497L620 499M646 495L650 499L653 504M640 521L630 516L622 514M620 499L621 507L622 514M666 500L659 501L653 504M672 531L669 531L663 530M663 530L656 523L650 516M619 499L621 499L620 499M645 474L644 484L646 495M676 476L666 470L657 465M612 524L618 519L622 514M518 509L518 518L516 525M518 509L508 506L500 502M516 525L503 526L493 528M500 502H489V520M493 528H489V520M525 505L520 508L518 509M529 537L523 529L516 525M492 540L491 534L493 528M459 514H464V512M464 512L475 516L489 520M653 544L644 543L633 543M653 544L658 553L663 561M650 568L641 565L636 561M650 568L656 567L662 563M636 561L634 554L630 546M663 561L662 562L662 563M630 546L633 543L633 543M663 530L657 536L653 544M640 521L636 532L633 543M673 555L667 559L663 561M645 588L646 577L650 568M645 588L636 588L625 589M622 580L630 569L636 561M623 545L627 544L630 546M695 578L693 580L691 581M671 579L682 581L691 581M671 579L665 571L662 563M728 415L724 425L721 436M728 415L739 416L751 414M751 414L751 423L754 434M721 436L731 440L742 447M742 447L747 442L754 434M724 409L725 412L728 415M755 410L753 411L751 414M774 440L764 439L754 434M707 456L710 446L714 439M742 451L742 449L742 447M714 439L718 439L721 436M771 460L767 464L763 467M792 485L795 488L796 491M792 485L780 484L770 482M770 482L766 494L764 505M795 494L784 501L773 510M795 494L796 493L796 491M764 505L770 507L773 510M794 465L793 474L792 485M814 486L804 489L796 491M762 469L765 476L770 482M752 506L759 505L764 505M805 512L799 503L795 494M773 511L774 510L773 510M822 596L817 603L812 610M815 580L805 581L793 583M812 610L804 609L796 606M796 606L790 598L788 593M788 593L791 588L793 583M813 613L813 611L812 610M788 560L790 572L793 583M782 622L789 615L796 606M779 593L784 592L788 593M735 332L733 324L729 316M735 332L727 338L719 341M707 327L713 322L718 315M707 327L714 335L719 341M718 315L724 317L729 316M744 335L739 334L735 332M738 303L735 310L729 316M716 353L718 346L719 341M709 300L713 309L718 315M698 327L703 326L707 327M686 -3L692 2L699 5M699 5L706 1L715 -0M687 33L679 29L673 24M702 27L701 15L699 5M671 17L672 20L673 24M730 18L721 8L715 -0M657 52L655 47L654 44M657 52L646 64L635 73M654 44L646 38L638 34M622 65L625 49L630 35M622 65L628 71L632 73M630 35L636 33L638 34M635 73L633 73L632 73M664 56L662 55L657 52M673 24L663 33L654 44M657 86L646 79L635 73M651 10L645 23L638 34M637 108L633 103L626 97M626 97L627 84L632 73M578 82L589 82L599 82M578 82L576 92L575 99M575 99L583 104L592 111M599 82L605 91L610 100M592 111L598 111L604 108M610 100L606 103L604 108M576 79L577 80L578 82M570 103L571 100L575 99M586 131L589 122L592 111M626 97L618 97L610 100M612 66L606 75L599 82M612 66L617 64L622 65M615 130L609 118L604 108M556 7L548 9L539 12M556 7L554 -5L555 -15M552 37L561 30L567 27M556 7L560 11L566 14M567 27L565 21L566 14M577 -13L581 -8L584 1M566 14L575 7L584 1M631 309L625 313L617 314M631 309L638 311L643 313M643 321L637 329L628 337M643 321L643 318L643 313M617 314L617 324L614 332M614 332L621 334L628 337M624 289L629 298L631 309M599 304L609 309L617 314M647 310L646 311L643 313M632 350L631 345L628 337M660 343L653 332L643 321M606 336L611 335L614 332M446 467V483H439M446 467L441 461L437 454M437 454L420 457L403 461M439 483V492H415M415 492V476H398M398 476L401 469L403 461M391 437H403V461M438 428V454H437M413 514V492H415M453 513L445 496L439 483M382 482V476H398M519 613L505 619L490 623M519 613L522 622L527 634M521 650L524 641L527 634M521 650L506 640L490 626M490 626L490 624L490 623M522 607L521 610L519 613M484 609V623H490M550 621L539 629L527 634M521 651L522 651L521 650M471 648H490V626M273 426H257V397M273 426H268V438M232 419H251V395M257 397V395H251M208 397V383H218M218 383V394H250M251 395V394H250M675 417L670 425L663 433M675 417L682 419L691 421M692 424L691 422L691 421M692 424L687 434L682 446M682 446L676 444L666 445M666 445L665 438L663 433M667 406L670 410L675 417M640 426L653 428L663 433M699 408L694 413L691 421M714 439L702 432L692 424M689 454L685 451L682 446M658 458L663 451L666 445M573 385L567 393L564 401M586 411L575 408L566 405M564 401L566 402L566 405M551 377L548 384L546 391M564 401L555 396L546 391M563 436L560 428L556 423M566 405L562 415L556 423M501 338L503 349L505 357M532 358L531 357L532 359M532 359L518 359L505 357M492 375H495V374M505 357L500 365L495 374M714 601L709 608L705 613M691 581L686 591L683 604M683 604L696 608L705 613M684 658L684 646L684 632M712 629L710 626L706 623M684 632L695 628L706 623M705 613L705 618L706 623M138 225L129 215L118 206M138 225L153 214L166 205M166 205H153V180M118 206H120V186M153 180H149V178M149 178V183H122M120 186V183H122M97 221H118V206M139 245L139 234L138 225M85 184H120V186M187 142H190V163M190 163H153V180M150 146V178H149M109 149V183H122M216 136H224V155M190 163L190 163L193 165M224 155V164H219M193 165V164H219M239 155V169H249M239 155L233 154L224 155M249 169L250 173L248 177M248 178L247 176L248 177M248 178L237 179L228 180M219 164H228V180M319 197V174H326M319 197L328 202L338 210M326 174H347V178M347 178V208H342M338 210V208H342M408 319H402V324M436 349L424 353L411 355M402 324V355H411M367 398H357V385M357 385H382V361M408 386V366H402M382 361H402V366M402 366H411V355M267 117H277V144M267 117H245V124M246 137H273V150M246 137V129H243M277 144V150H274M243 129L244 126L245 124M274 150L272 151L273 150M239 155V137H246M249 169L261 160L273 150M217 135H243V129M238 109L225 107L213 106M238 109H245V124M283 167H274V150M283 167L278 175L271 182M271 182H248V177M269 115L280 116L290 115M269 115V91H266M266 91V87H286M286 87L288 99L294 110M294 110H290V115M269 115L267 116L267 117M277 144V135H296M290 115H296V135M338 142L339 143L338 143M310 164V166H320M310 164H303V137M338 143H320V166M336 139V130H317M317 130H303V137M297 171L304 167L310 164M297 171H283V167M303 137L301 136L296 135M386 60L384 68L381 77M386 60V47H360M366 83V61H356M356 61H360V47M345 114H342V107M317 130V109H318M342 107H318V109M378 112L377 112L377 114M377 114V120H365M364 88V93H347M342 107V93H347M294 110H315V106M315 106L318 108L318 109M245 93V81H231M245 93H261V88M261 88L258 76L258 65M258 65H231V63M231 81V64H230M230 64V63H231M215 91H231V81M238 109H245V93M266 91L264 89L261 88M212 61V64H230M237 37V63H231M250 34H254V37M258 65V60H262M254 37L257 48L262 60M453 143V146H450M450 146H453V172M476 164V173H459M459 173H453V172M486 188V189H470M459 173H470V189M415 283H425V261M386 251L384 257L380 262M386 251L398 248L409 244M380 262L387 273L395 283M409 286H395V283M409 244V261H425M460 265V257H441M425 261H441V257M338 143V161H352M320 166L323 170L326 174M347 178L347 179L348 178M352 161H348V178M360 137H373V150M352 161H370V155M373 150H370V155M421 161V167H403M421 161V146H426M425 143V146H426M425 143V133H402M403 167V144H389M402 133H392V137M392 137V144H389M437 177V161H421M437 177L439 178L442 178M450 146L438 147L426 146M442 178L447 175L453 172M431 122L429 133L425 143M415 106L417 105L417 106M415 106H402V133M402 98H415V106M377 114V137H392M373 150L382 147L389 144M420 53V37H397M420 53L419 58L419 65M414 68L400 63L388 59M414 68V65H419M388 59V37H396M396 37L396 37L397 37M408 24H397V37M430 41V53H420M433 74V65H419M401 91V68H414M386 60V59H388M380 28V47H360M380 28H396V37M360 47L359 46L360 47M380 28V17H378M476 486H491V483M476 486H456V467M491 483L491 472L494 461M456 467H481V447M481 447V461H494M464 512V486H476M500 502V488H498M498 488V483H491M446 467L452 468L456 467M481 437L482 442L481 447M519 452L518 455L516 457M519 452L527 450L537 448M516 457L520 468L525 480M537 448L543 450L548 454M526 480L539 471L549 463M526 480L526 482L525 480M549 463L550 459L548 454M513 438L515 446L519 452M494 461L504 458L516 457M520 426L528 425L536 424M536 424L537 437L537 448M498 488L513 483L525 480M562 442L555 448L548 454M536 424L538 422L539 421M539 421L547 422L556 423M527 482L526 480L526 480M561 474L556 468L549 463M578 58L578 59L578 58M567 27L571 31L576 32M576 32L576 46L578 58M612 66L607 60L599 53M578 58L588 57L599 53M621 29L620 22L620 15M621 29L612 31L602 35M620 15L607 8L596 3M602 35L598 31L593 28M593 28L594 16L593 4M596 3L594 4L593 4M628 2L622 10L620 15M630 35L624 33L621 29M599 53L602 44L602 35M608 -15L603 -6L596 3M576 32L586 31L593 28M584 1L590 2L593 4M226 210V235H232M226 210H249V204M249 204H257V210M257 210V238H249M249 238V235H232M176 371L186 367L193 361M218 383V371H216M216 371V361H193M172 330V336H197M193 361V336H197M250 394L251 378L251 363M216 371L223 364L229 357M251 363H229V357M197 336L200 336L200 334M200 334V340H226M229 357V340H226M514 383L520 381L524 379M514 383L516 394L515 402M524 379L534 387L542 392M515 402L524 402L535 403M535 403L538 399L542 392M532 359L528 369L524 379M495 374L504 377L514 383M509 410L513 407L515 402M546 391L545 392L542 392M539 421L537 411L535 403M677 607L673 614L671 620M677 607L668 599L663 592M648 616L656 618L666 622M648 616L649 605L651 593M666 622L668 620L671 620M651 593L656 594L663 592M683 604L681 607L677 607M684 632L677 626L671 620M671 579L666 586L663 592M642 619L646 617L648 616M656 655L659 638L666 622M645 588L649 592L651 593M271 182V195H276M248 178L250 190L249 204M257 210L257 210L258 210M276 195H258V210M223 208V228H195M223 208H217V195M217 195H198V189M198 189H178V209M178 209H185V225M185 225L192 227L195 228M226 210V208H223M232 235V249H215M215 249V228H195M228 180H217V195M193 165V189H198M166 205H178V209M168 251H159V254M168 251H185V225M386 251H376V229M409 244H411V230M411 230L402 221L391 214M391 214H376V229M391 324V343H372M391 324V303H374M374 303L367 304L361 302M360 340H348V311M360 340H372V343M361 302H348V311M402 324L395 324L391 324M382 361H372V343M395 283H374V303M380 262H358V265M358 265L358 282L361 302M437 177H418V197M442 178L445 191L449 202M418 197V211H426M449 202H426V211M441 257V231H442M411 230H425V220M442 231H425V220M273 426L287 422L301 416M257 397H288V382M288 382V416H301M306 452V420H311M341 429V416H323M323 416L317 417L311 420M311 420V416H301M338 210H330V230M342 208H357V211M357 211H366V227M366 227L355 239L345 251M330 230V251H345M358 265L353 262L345 258M376 229L370 228L366 227M345 251L346 255L345 258M340 311H320V279M340 311H316V330M309 328V330H316M309 328L304 313L297 299M297 299V279H320M348 311L345 312L340 311M321 275L334 266L345 258M321 275L321 278L320 279M278 296H270V270M278 296V299H297M270 270H300V258M300 258V275H321M377 177H396V181M377 177V183H365M365 183L367 191L367 201M367 201L378 204L391 205M391 205H400V192M396 181V192H400M370 155L372 165L377 177M403 167H396V181M348 178H365V183M357 211H367V201M391 214L390 210L391 205M418 197V192H400M426 211L427 214L425 220M347 37L343 37L338 37M347 37V15H357M338 37H329V7M357 15V0H338M338 0H329V7M369 12V15H357M360 47V37H347M339 -2L338 -1L338 0M305 -13L312 -3L321 7M321 7L326 7L329 7M347 93H331V77M315 106L313 100L314 93M331 77V93H314M356 61L342 67L331 71M331 77L332 73L331 71M326 44L326 54L328 67M326 44H338V37M331 71V67H328M286 87H288V85M262 60H281V57M281 57V85H288M328 67L316 68L306 68M314 93H298V83M306 68H298V83M288 85V83H298M313 40H296V50M313 40L312 30L308 20M308 20H285V15M289 49L291 51L296 50M289 49V33H281M285 15V33H281M326 44H313V40M306 68H296V50M321 7L315 13L308 20M285 15L284 15L285 15M281 57V49H289M254 37V33H281M463 204H457V207M463 204H484V214M457 207L456 217L454 225M454 225H476V237M484 214V237H476M470 189L468 196L463 204M449 202H457V207M493 209H484V214M442 231H454V225M476 238L477 238L476 237M234 303L233 290L232 279M234 303H203V313M232 279V268H214M203 313V295H187M201 273V294H187M201 273L207 270L214 268M187 294L187 293L187 295M249 238H259V249M215 249H214V268M259 249V265H261M261 265L247 273L232 279M167 316H187V295M200 334H203V313M168 251V273H201M158 280V294H187M271 306V312H241M271 306V338H281M281 338V349H274M241 325L253 337L268 349M241 325L240 319L241 312M274 349L272 348L268 349M278 296L275 300L271 306M270 270H261V265M234 303H241V312M309 328H281V338M251 363H268V349M226 340V325H241M288 382L290 377L292 374M292 374H274V349M323 351V370H311M323 351H344V354M311 370V393H332M344 354H355V384M355 384L344 388L332 393M292 374H311V370M316 330L319 340L323 351M360 340H344V354M323 416H332V393M357 385L356 386L355 384M313 231V240H301M313 231H303V201M301 240H282V228M303 201H297V199M282 226L287 214L294 201M282 226L282 229L282 228M297 199L296 200L294 201M300 258L300 249L301 240M330 230L321 229L313 231M319 197L311 201L303 201M259 249L272 238L282 228M297 171L297 184L297 199M276 195H294V201M258 210H282V226" fill="none" stroke="#636666" stroke-width="1" shape-rendering="crispEdges"/>
<path d="M588.0 6.2 589.2 24.6 604.0 44.3 599.1 78.8 604.0 93.6 591.7 108.3 596.6 123.1 608.9 137.9 613.9 147.7 M540.0 152.7 576.9 161.3 613.9 147.7 643.4 149.0 658.2 142.8 677.9 130.5 712.4 113.3 744.4 94.8 773.9 81.3 805.9 71.4 M658.2 142.8 670.5 157.6 677.9 169.9 687.7 184.7 702.5 189.6 717.3 189.1 744.4 183.5 776.4 176.1 805.9 174.8 M564.6 200.0 594.2 160.1 M714.8 189.1 721.0 200.0 M6.2 257.1 36.9 254.7 73.9 246.8 110.8 234.5 137.9 224.6 157.6 223.4 162.5 220.9 172.4 221.7 174.8 225.9 169.9 230.8 162.5 229.5 160.1 224.6 M172.4 221.7 197.0 209.8 216.7 200.0 M145.3 200.0 147.7 212.3 160.1 224.6 165.0 236.9 169.9 273.9 172.4 310.8 179.8 347.7 183.5 372.4 181.0 400.0 M398.0 200.0 398.0 239.4 396.8 273.9 398.0 315.7 401.7 347.7 404.2 372.4 405.4 400.0 M550.0 222.2 516.2 249.2 491.6 281.3 467.0 310.8 459.6 320.7 M474.4 200.0 479.3 219.7 491.6 232.0 506.4 239.4 526.1 249.2 550.0 281.3 M6.2 460.3 49.2 465.3 93.6 476.3 128.0 473.1 147.7 478.8 187.1 477.6 258.6 473.9 280.0 468.9 M178.5 400.0 162.5 424.6 160.1 449.2 150.2 478.8 137.9 503.4 131.7 537.9 128.0 600.0 M258.6 473.9 246.2 503.4 236.4 523.1 216.7 550.2 214.2 572.4 209.3 600.0 M270.0 470.0 300.0 446.8 341.1 403.4 368.5 398.8 396.0 386.3 414.2 365.7 437.1 342.8 459.9 320.0 M414.2 365.7 446.2 363.4 482.8 361.1 512.5 355.4 560.0 350.8 M405.4 400.0 412.8 419.7 427.6 444.3 439.9 471.4 432.5 488.6 422.7 508.3 398.0 547.7 378.3 569.9 351.3 587.1 331.6 600.0 M439.9 471.4 467.0 471.4 491.6 459.1 516.2 444.3 526.1 429.5 550.0 400.0 M608.9 400.0 626.2 422.2 633.6 434.5 629.9 473.9 631.1 503.4 638.5 528.0 648.3 547.7 653.3 577.3 658.2 600.0 M633.6 434.5 650.8 446.8 677.9 459.1 712.4 466.5 761.6 473.9 796.1 485.0 805.9 493.6 M6.2 661.6 24.6 652.9 61.6 644.3 98.5 641.9 128.0 639.4 147.7 640.6 172.4 649.2 192.1 657.9 209.3 651.7 236.4 645.6 261.0 644.3 280.0 645.6 M92.3 656.6 105.9 670.2 133.0 673.9 147.7 681.3 160.1 685.0 172.4 673.9 182.2 659.1 192.1 657.9 M125.6 600.0 126.8 624.6 130.5 639.4 134.2 656.6 133.0 673.9 M204.4 600.0 197.0 624.6 187.1 649.2 M6.2 617.2 12.3 629.5 13.5 649.2 14.8 661.6 M540.0 627.1 572.0 639.4 613.9 640.6 663.1 649.2 700.1 657.9 724.7 661.6 761.6 657.9 786.2 655.4 M663.1 600.0 665.6 614.8 677.9 629.5 697.6 651.7 712.4 671.4 722.2 698.5 737.0 723.1 746.8 747.7 749.3 772.4 754.2 792.1 M783.8 600.0 786.2 624.6 783.8 649.2 778.9 659.1 M474.4 6.2 469.5 29.5 457.1 46.8 437.4 56.6 430.1 71.4 422.7 91.1 427.6 108.3 437.4 128.0 417.7 147.7 427.6 167.4 442.4 187.1 452.2 200.0 M270.0 59.1 306.9 55.4 343.9 73.9 368.5 86.2 M270.0 169.9 299.5 165.0 331.6 157.6 351.3 147.7 368.5 137.9 M422.7 133.0 467.0 135.4 516.2 140.4 550.0 157.6 M576.9 337.9 584.3 334.2 592.9 337.9 594.2 347.7 588.0 355.1 579.4 353.9 574.5 346.5 576.9 337.9 M540.0 286.2 554.8 310.8 572.0 328.0 584.3 345.3 589.2 367.4 601.6 400.0 M584.3 345.3 604.0 328.0 626.2 315.7 650.8 303.4 677.9 286.2 717.3 266.5 744.4 249.2 761.6 229.5 805.9 223.4 M588.0 355.1 576.9 377.3 569.5 400.0 M592.9 347.7 621.3 357.6 663.1 367.4 697.6 372.4 744.4 372.4 776.4 357.6 805.9 340.4 M540.0 207.4 554.8 204.9 564.6 200.0 M756.7 224.6 761.6 249.2 776.4 281.3 805.9 308.3 M804.1 540.0 801.6 562.4 786.9 591.7 785.2 619.3 788.6 636.6 786.9 650.3 M786.9 643.0 780.0 642.0 778.3 657.2 781.7 665.9 793.8 667.6 M786.2 655.4 796.1 664.0 801.0 681.3 805.9 693.6 M182.2 6.2 194.5 19.7 200.7 41.9 199.5 91.1 189.6 110.8 182.2 140.4 172.4 152.7 152.7 192.1 147.7 200.0 M240.1 6.2 229.0 19.7 227.8 49.2 219.2 64.0 200.7 71.4 M240.1 6.2 248.7 17.2 249.9 36.9 263.5 49.2 270.9 59.1 280.0 60.3 M216.7 200.0 231.5 182.2 256.1 172.4 280.0 169.9" fill="none" stroke="#76661c" stroke-width="1" shape-rendering="crispEdges"/>
<path d="M6.0 704.7 14.8 702.2 24.6 699.7 29.5 703.4 27.1 708.3 36.9 705.9 45.6 705.9 48.0 715.7 51.7 723.1 59.4 721.0 64.0 728.0 71.4 726.8 73.9 735.4 76.3 744.1 83.7 742.8 88.0 747.0 91.1 740.4 98.5 747.7 105.9 745.3 110.0 752.0 115.7 747.7 120.7 744.1 124.0 750.0 128.0 741.6 133.0 747.7 137.9 742.8 143.0 750.0 147.7 747.7 150.2 757.6 155.0 752.0 157.6 745.3 152.7 737.9 150.2 728.0 153.9 720.7 160.1 723.1 165.0 730.5 172.4 733.0 179.8 737.9 187.1 740.4 194.5 737.9 197.0 742.8 204.4 747.7 214.2 750.2 221.6 747.7 229.0 750.2 233.9 753.9 240.0 757.0 236.0 750.0 228.0 743.0 214.0 739.0 203.0 730.0 196.0 716.0 191.0 704.0 196.0 697.0 204.0 689.0 209.0 682.0 203.0 686.0 197.0 692.3 187.1 694.8 178.5 688.6 176.1 682.5 179.8 678.8 189.6 677.6 197.0 681.3 203.2 673.9 209.3 669.0 212.3 656.6 215.5 651.2 219.9 652.9 216.7 657.9 221.6 659.1 231.5 655.4 236.4 650.5 246.2 646.8 253.6 649.2 261.0 648.0 268.4 645.5 277.0 648.5 284.8 648.0 288.5 647.5 294.6 651.0 302.0 650.0 305.7 639.4 306.9 629.5 313.1 622.2 318.0 624.6 319.2 636.9 322.9 645.6 329.1 652.9 332.8 657.9 335.3 661.6 343.9 657.9 358.6 652.9 378.3 650.5 398.0 646.8 417.7 646.8 439.9 649.2 452.2 652.9 467.0 657.9 481.8 661.6 491.6 659.1 499.0 655.4 503.9 664.0 506.4 673.9 502.7 683.7 506.4 691.1 512.6 696.0 513.8 703.4 516.2 709.6 523.6 713.3 531.0 717.0 538.4 718.2 543.3 711.0 547.4 706.0 554.8 703.4 562.2 698.5 564.6 694.8 572.0 693.6 576.9 691.1 579.4 686.2 585.6 685.0 583.1 681.3 588.0 676.3 594.2 673.9 601.6 675.1 611.4 673.9 618.8 680.0 626.2 683.7 633.6 688.6 639.7 693.6 643.4 701.0 648.3 707.1 653.3 710.8 658.2 720.7 663.1 728.0 668.0 734.2 673.0 740.4 677.9 747.7 682.8 753.9 681.6 760.1 687.7 757.6 697.6 757.6 702.5 762.5 703.8 769.9 709.9 774.8 712.4 782.2 713.6 792.0 714.0 806.0 6.0 806.0Z" fill="#004364" stroke="#000" stroke-width="1" stroke-linejoin="round" shape-rendering="crispEdges"/>
<path d="M353.7 648.0 356.2 644.3 359.9 646.8 358.6 650.5 355.0 652.5Z M373.4 649.0 375.9 641.9 377.1 634.5 379.6 639.4 385.7 636.9 388.2 630.8 389.4 636.9 393.1 640.6 398.0 643.1 396.0 648.0 383.3 650.0 378.3 652.0Z M417.7 646.8 422.7 641.9 430.1 640.6 435.0 645.6 439.9 649.2 427.6 648.0Z M493.0 660.0 497.0 650.0 501.0 646.0 503.0 652.0 500.0 657.0Z" fill="#004364" stroke="#000" stroke-width="1" shape-rendering="crispEdges"/>
<path d="M806.0 556.0 804.0 562.0 802.5 570.0 801.5 580.0 803.0 590.0 802.0 600.0 803.5 612.0 802.0 625.0 803.0 640.0 801.0 650.0 806.0 656.0Z" fill="#004364" stroke="#000" stroke-width="1" shape-rendering="crispEdges"/>
<path d="M8.6 718.2 19.7 717.0 32.0 720.7 36.9 725.6 29.5 730.5 17.2 723.1Z" fill="#5e504c" stroke="#000" stroke-width="1" shape-rendering="crispEdges"/>
<path d="M790.0 648.0 789.0 648.6 788.3 649.1 787.6 650.0 787.1 650.9 786.8 651.8 786.4 652.4 785.8 653.1 785.0 653.9 784.0 654.8 783.1 655.6 782.5 656.3 782.3 657.1 782.3 658.0 782.4 659.0 783.2 660.2 784.1 661.2 784.8 662.1 785.3 662.7 785.6 663.4 785.7 664.3 785.7 665.6 785.5 667.0 785.3 668.2 784.9 668.9 784.8 669.5 784.8 670.2 784.8 671.2 784.9 672.7 785.2 674.1 785.6 675.1 785.6 675.7 785.2 676.4 784.3 677.5 783.2 678.6 782.2 679.6 781.7 680.3 781.6 681.0 782.2 682.1 783.3 683.2 784.7 683.9 785.7 684.3 785.8 685.0 786.2 685.8 786.5 686.9 786.8 688.3 787.0 689.4 787.1 690.2 787.5 690.8 788.2 691.6 789.2 692.6 790.1 693.5 790.7 694.1 791.1 694.8 791.2 695.7 791.3 697.1 791.3 698.3 791.3 699.2 791.6 700.0 792.3 700.9 793.1 701.9 793.6 702.8 793.7 703.6 793.3 704.5 792.5 705.6 791.7 706.3 791.2 706.9 790.9 707.8 790.7 709.1 790.5 710.3 790.6 711.4 790.5 712.1 790.0 712.8 789.1 713.7 788.2 714.7 787.3 715.6 786.6 716.2 786.3 716.8 786.1 717.7 786.0 719.0 786.1 720.4 786.2 721.6 786.3 722.4 786.2 723.1 786.0 723.9 784.8 725.2 783.6 726.3 783.1 726.7 783.3 727.4 784.0 729.0 784.6 730.3 784.6 731.1 784.2 731.7 783.8 733.0" fill="none" stroke="#000" stroke-width="3" stroke-linejoin="round"/>
<path d="M790.0 648.0 789.0 648.6 788.3 649.1 787.6 650.0 787.1 650.9 786.8 651.8 786.4 652.4 785.8 653.1 785.0 653.9 784.0 654.8 783.1 655.6 782.5 656.3 782.3 657.1 782.3 658.0 782.4 659.0 783.2 660.2 784.1 661.2 784.8 662.1 785.3 662.7 785.6 663.4 785.7 664.3 785.7 665.6 785.5 667.0 785.3 668.2 784.9 668.9 784.8 669.5 784.8 670.2 784.8 671.2 784.9 672.7 785.2 674.1 785.6 675.1 785.6 675.7 785.2 676.4 784.3 677.5 783.2 678.6 782.2 679.6 781.7 680.3 781.6 681.0 782.2 682.1 783.3 683.2 784.7 683.9 785.7 684.3 785.8 685.0 786.2 685.8 786.5 686.9 786.8 688.3 787.0 689.4 787.1 690.2 787.5 690.8 788.2 691.6 789.2 692.6 790.1 693.5 790.7 694.1 791.1 694.8 791.2 695.7 791.3 697.1 791.3 698.3 791.3 699.2 791.6 700.0 792.3 700.9 793.1 701.9 793.6 702.8 793.7 703.6 793.3 704.5 792.5 705.6 791.7 706.3 791.2 706.9 790.9 707.8 790.7 709.1 790.5 710.3 790.6 711.4 790.5 712.1 790.0 712.8 789.1 713.7 788.2 714.7 787.3 715.6 786.6 716.2 786.3 716.8 786.1 717.7 786.0 719.0 786.1 720.4 786.2 721.6 786.3 722.4 786.2 723.1 786.0 723.9 784.8 725.2 783.6 726.3 783.1 726.7 783.3 727.4 784.0 729.0 784.6 730.3 784.6 731.1 784.2 731.7 783.8 733.0" fill="none" stroke="#004364" stroke-width="1.2" stroke-linejoin="round"/>
<path d="M214 670h3v1h-3zM213 671h4v1h-4zM218 671h4v1h-4zM213 672h11v1h-11zM207 673h2v1h-2zM213 673h5v1h-5zM224 673h1v1h-1zM205 674h4v1h-4zM213 674h6v1h-6zM204 675h5v1h-5zM213 675h11v1h-11zM204 676h5v1h-5zM210 676h2v1h-2zM213 676h3v1h-3zM217 676h7v1h-7zM204 677h4v1h-4zM213 677h3v1h-3zM217 677h8v1h-8zM204 678h4v1h-4zM213 678h4v1h-4zM220 678h8v1h-8zM204 679h4v1h-4zM220 679h9v1h-9zM204 680h5v1h-5zM219 680h4v1h-4zM225 680h4v1h-4zM205 681h5v1h-5zM219 681h4v1h-4zM205 682h5v1h-5zM219 682h3v1h-3zM205 683h1v1h-1zM207 683h3v1h-3zM211 683h1v1h-1zM218 683h4v1h-4zM204 684h1v1h-1zM207 684h3v1h-3zM211 684h1v1h-1zM215 684h2v1h-2zM218 684h3v1h-3zM226 684h2v1h-2zM204 685h6v1h-6zM211 685h2v1h-2zM214 685h7v1h-7zM226 685h2v1h-2zM204 686h5v1h-5zM211 686h13v1h-13zM225 686h3v1h-3zM204 687h5v1h-5zM212 687h3v1h-3zM216 687h12v1h-12zM204 688h5v1h-5zM212 688h4v1h-4zM219 688h7v1h-7zM204 689h6v1h-6zM212 689h5v1h-5zM219 689h7v1h-7zM203 690h1v1h-1zM206 690h5v1h-5zM213 690h5v1h-5zM220 690h7v1h-7zM203 691h1v1h-1zM206 691h5v1h-5zM213 691h6v1h-6zM223 691h4v1h-4zM206 692h14v1h-14zM223 692h3v1h-3zM227 692h1v1h-1zM204 693h18v1h-18zM223 693h3v1h-3zM227 693h1v1h-1zM200 694h6v1h-6zM208 694h8v1h-8zM219 694h3v1h-3zM223 694h3v1h-3zM227 694h1v1h-1zM200 695h7v1h-7zM209 695h6v1h-6zM226 695h3v1h-3zM199 696h3v1h-3zM203 696h4v1h-4zM209 696h7v1h-7zM218 696h1v1h-1zM220 696h1v1h-1zM226 696h3v1h-3zM204 697h3v1h-3zM210 697h6v1h-6zM218 697h4v1h-4zM226 697h3v1h-3zM205 698h1v1h-1zM212 698h2v1h-2zM218 698h12v1h-12zM198 699h1v1h-1zM204 699h4v1h-4zM218 699h4v1h-4zM223 699h7v1h-7zM198 700h2v1h-2zM204 700h4v1h-4zM218 700h3v1h-3zM223 700h4v1h-4zM197 701h3v1h-3zM203 701h5v1h-5zM222 701h5v1h-5zM193 702h5v1h-5zM202 702h5v1h-5zM211 702h2v1h-2zM220 702h4v1h-4zM226 702h1v1h-1zM194 703h4v1h-4zM203 703h4v1h-4zM211 703h2v1h-2zM219 703h5v1h-5zM226 703h2v1h-2zM195 704h3v1h-3zM203 704h3v1h-3zM211 704h2v1h-2zM220 704h5v1h-5zM195 705h3v1h-3zM202 705h4v1h-4zM211 705h2v1h-2zM215 705h1v1h-1zM221 705h4v1h-4zM192 706h6v1h-6zM203 706h5v1h-5zM211 706h2v1h-2zM214 706h11v1h-11zM193 707h8v1h-8zM203 707h5v1h-5zM213 707h13v1h-13zM193 708h9v1h-9zM203 708h5v1h-5zM212 708h2v1h-2zM217 708h8v1h-8zM193 709h2v1h-2zM198 709h5v1h-5zM204 709h1v1h-1zM212 709h2v1h-2zM217 709h4v1h-4zM223 709h1v1h-1zM191 710h3v1h-3zM199 710h3v1h-3zM208 710h2v1h-2zM212 710h1v1h-1zM219 710h2v1h-2zM191 711h3v1h-3zM207 711h4v1h-4zM215 711h1v1h-1zM219 711h2v1h-2zM191 712h2v1h-2zM196 712h2v1h-2zM206 712h4v1h-4zM215 712h1v1h-1zM219 712h2v1h-2zM197 713h1v1h-1zM205 713h3v1h-3zM215 713h1v1h-1zM219 713h2v1h-2zM223 713h2v1h-2zM186 714h1v1h-1zM191 714h3v1h-3zM196 714h2v1h-2zM205 714h4v1h-4zM214 714h2v1h-2zM223 714h2v1h-2zM185 715h3v1h-3zM190 715h8v1h-8zM205 715h4v1h-4zM212 715h4v1h-4zM218 715h2v1h-2zM223 715h2v1h-2zM185 716h14v1h-14zM202 716h6v1h-6zM212 716h4v1h-4zM217 716h3v1h-3zM185 717h9v1h-9zM195 717h4v1h-4zM201 717h7v1h-7zM212 717h3v1h-3zM217 717h3v1h-3zM187 718h1v1h-1zM190 718h3v1h-3zM195 718h3v1h-3zM201 718h2v1h-2zM211 718h3v1h-3zM187 719h1v1h-1zM195 719h2v1h-2zM210 719h2v1h-2zM213 719h1v1h-1zM223 719h1v1h-1zM184 720h1v1h-1zM187 720h2v1h-2zM207 720h1v1h-1zM209 720h3v1h-3zM215 720h2v1h-2zM222 720h2v1h-2zM183 721h2v1h-2zM187 721h3v1h-3zM192 721h1v1h-1zM210 721h2v1h-2zM214 721h4v1h-4zM222 721h2v1h-2zM183 722h3v1h-3zM187 722h3v1h-3zM192 722h2v1h-2zM209 722h9v1h-9zM223 722h1v1h-1zM183 723h7v1h-7zM193 723h3v1h-3zM198 723h2v1h-2zM205 723h9v1h-9zM216 723h2v1h-2zM183 724h6v1h-6zM194 724h3v1h-3zM198 724h2v1h-2zM205 724h5v1h-5zM184 725h4v1h-4zM193 725h6v1h-6zM204 725h5v1h-5zM220 725h1v1h-1zM186 726h2v1h-2zM194 726h5v1h-5zM184 727h1v1h-1zM186 727h2v1h-2zM195 727h4v1h-4zM203 727h1v1h-1zM211 727h1v1h-1zM184 728h5v1h-5zM195 728h4v1h-4zM202 728h3v1h-3zM211 728h2v1h-2zM215 728h1v1h-1zM184 729h4v1h-4zM191 729h7v1h-7zM200 729h8v1h-8zM209 729h8v1h-8zM185 730h4v1h-4zM192 730h7v1h-7zM200 730h16v1h-16zM185 731h5v1h-5zM193 731h6v1h-6zM200 731h4v1h-4zM206 731h5v1h-5zM213 731h2v1h-2zM185 732h5v1h-5zM192 732h9v1h-9zM202 732h1v1h-1zM185 733h16v1h-16zM205 733h2v1h-2zM186 734h14v1h-14zM204 734h5v1h-5zM186 735h3v1h-3zM190 735h1v1h-1zM194 735h6v1h-6zM204 735h4v1h-4zM186 736h3v1h-3zM195 736h1v1h-1zM198 736h2v1h-2zM204 736h4v1h-4zM186 737h3v1h-3zM198 737h2v1h-2zM188 738h1v1h-1zM198 738h1v1h-1zM195 738h2v1h-2zM200 738h2v1h-2zM195 739h2v1h-2zM200 739h2v1h-2zM194 740h5v1h-5zM193 741h6v1h-6zM205 741h1v1h-1zM212 741h1v1h-1zM193 742h3v1h-3zM211 742h2v1h-2zM192 743h5v1h-5zM203 743h2v1h-2zM208 743h6v1h-6zM193 744h4v1h-4zM201 744h5v1h-5zM207 744h9v1h-9zM201 745h2v1h-2zM204 745h2v1h-2zM207 745h2v1h-2zM211 745h4v1h-4zM201 746h1v1h-1zM204 746h2v1h-2zM211 746h4v1h-4zM222 746h2v1h-2zM204 747h1v1h-1zM210 747h6v1h-6zM221 747h3v1h-3zM226 747h1v1h-1zM204 748h1v1h-1zM210 748h6v1h-6zM219 748h2v1h-2zM222 748h3v1h-3zM228 748h1v1h-1zM211 749h5v1h-5zM219 749h1v1h-1zM223 749h3v1h-3zM219 750h2v1h-2zM222 750h3v1h-3zM229 750h1v1h-1zM222 751h3v1h-3zM229 751h3v1h-3zM226 752h1v1h-1zM230 752h3v1h-3zM230 753h2v1h-2zM235 754h2v1h-2zM150 718h2v1h-2zM150 719h6v1h-6zM151 720h4v1h-4zM153 721h2v1h-2zM153 722h2v1h-2zM163 722h3v1h-3zM149 723h1v1h-1zM153 723h1v1h-1zM164 723h2v1h-2zM149 724h5v1h-5zM165 724h2v1h-2zM149 725h5v1h-5zM155 725h3v1h-3zM165 725h2v1h-2zM149 726h4v1h-4zM155 726h3v1h-3zM165 726h1v1h-1zM149 727h3v1h-3zM155 727h2v1h-2zM161 727h1v1h-1zM160 728h2v1h-2zM165 728h2v1h-2zM156 729h5v1h-5zM165 729h3v1h-3zM155 730h6v1h-6zM162 730h1v1h-1zM165 730h3v1h-3zM152 731h12v1h-12zM165 731h3v1h-3zM150 732h9v1h-9zM161 732h3v1h-3zM166 732h2v1h-2zM150 733h8v1h-8zM161 733h3v1h-3zM165 733h3v1h-3zM150 734h7v1h-7zM162 734h1v1h-1zM164 734h4v1h-4zM151 735h9v1h-9zM161 735h6v1h-6zM147 736h1v1h-1zM155 736h14v1h-14zM147 737h2v1h-2zM156 737h10v1h-10zM167 737h2v1h-2zM147 738h2v1h-2zM156 738h2v1h-2zM161 738h2v1h-2zM167 738h3v1h-3zM157 739h1v1h-1zM164 739h1v1h-1zM167 739h2v1h-2zM163 740h6v1h-6zM151 741h2v1h-2zM155 741h3v1h-3zM163 741h5v1h-5zM151 742h8v1h-8zM160 742h1v1h-1zM162 742h4v1h-4zM152 743h9v1h-9zM163 743h2v1h-2zM152 744h9v1h-9zM149 745h1v1h-1zM156 745h5v1h-5zM157 746h5v1h-5zM157 747h7v1h-7zM157 748h6v1h-6zM153 749h2v1h-2zM158 749h2v1h-2zM149 750h2v1h-2zM153 750h2v1h-2zM158 750h2v1h-2zM149 751h2v1h-2zM153 751h2v1h-2zM149 752h2v1h-2zM153 752h3v1h-3zM149 753h1v1h-1zM152 753h4v1h-4zM152 754h4v1h-4zM152 755h2v1h-2zM80 740h6v1h-6zM88 740h1v1h-1zM94 740h1v1h-1zM80 741h5v1h-5zM99 741h4v1h-4zM107 741h2v1h-2zM117 741h6v1h-6zM126 741h4v1h-4zM79 742h4v1h-4zM91 742h2v1h-2zM97 742h6v1h-6zM108 742h3v1h-3zM117 742h1v1h-1zM121 742h1v1h-1zM126 742h3v1h-3zM132 742h4v1h-4zM141 742h2v1h-2zM146 742h2v1h-2zM77 743h4v1h-4zM91 743h2v1h-2zM96 743h8v1h-8zM109 743h9v1h-9zM128 743h1v1h-1zM137 743h2v1h-2zM145 743h3v1h-3zM77 744h3v1h-3zM82 744h1v1h-1zM85 744h3v1h-3zM90 744h1v1h-1zM94 744h4v1h-4zM99 744h7v1h-7zM108 744h8v1h-8zM124 744h1v1h-1zM128 744h2v1h-2zM136 744h3v1h-3zM144 744h5v1h-5zM77 745h3v1h-3zM81 745h2v1h-2zM85 745h5v1h-5zM93 745h3v1h-3zM99 745h11v1h-11zM124 745h1v1h-1zM138 745h1v1h-1zM144 745h3v1h-3zM148 745h1v1h-1zM76 746h4v1h-4zM87 746h3v1h-3zM92 746h4v1h-4zM100 746h10v1h-10zM123 746h3v1h-3zM144 746h1v1h-1zM76 747h4v1h-4zM87 747h2v1h-2zM91 747h5v1h-5zM102 747h3v1h-3zM106 747h4v1h-4zM112 747h3v1h-3zM123 747h4v1h-4zM139 747h2v1h-2zM144 747h1v1h-1zM76 748h3v1h-3zM87 748h1v1h-1zM92 748h4v1h-4zM105 748h5v1h-5zM111 748h4v1h-4zM122 748h16v1h-16zM142 748h5v1h-5zM76 749h2v1h-2zM87 749h1v1h-1zM94 749h1v1h-1zM104 749h2v1h-2zM111 749h5v1h-5zM117 749h2v1h-2zM122 749h16v1h-16zM142 749h6v1h-6zM76 750h4v1h-4zM94 750h2v1h-2zM112 750h4v1h-4zM117 750h3v1h-3zM122 750h1v1h-1zM127 750h4v1h-4zM134 750h3v1h-3zM144 750h5v1h-5zM76 751h5v1h-5zM95 751h2v1h-2zM101 751h2v1h-2zM113 751h2v1h-2zM117 751h4v1h-4zM127 751h4v1h-4zM145 751h5v1h-5zM76 752h5v1h-5zM85 752h2v1h-2zM95 752h3v1h-3zM101 752h3v1h-3zM113 752h2v1h-2zM117 752h2v1h-2zM128 752h4v1h-4zM143 752h2v1h-2zM146 752h5v1h-5zM76 753h2v1h-2zM79 753h3v1h-3zM85 753h2v1h-2zM90 753h1v1h-1zM95 753h2v1h-2zM101 753h3v1h-3zM113 753h2v1h-2zM128 753h4v1h-4zM142 753h3v1h-3zM148 753h3v1h-3zM76 754h2v1h-2zM89 754h2v1h-2zM94 754h2v1h-2zM103 754h4v1h-4zM130 754h1v1h-1zM139 754h6v1h-6zM76 755h2v1h-2zM88 755h3v1h-3zM94 755h7v1h-7zM105 755h2v1h-2zM122 755h2v1h-2zM127 755h1v1h-1zM135 755h3v1h-3zM141 755h2v1h-2zM150 755h1v1h-1zM76 756h2v1h-2zM87 756h3v1h-3zM94 756h8v1h-8zM105 756h2v1h-2zM122 756h3v1h-3zM135 756h3v1h-3zM141 756h2v1h-2zM149 756h2v1h-2zM76 757h2v1h-2zM87 757h3v1h-3zM95 757h1v1h-1zM99 757h4v1h-4zM106 757h1v1h-1zM122 757h2v1h-2zM126 757h2v1h-2zM129 757h2v1h-2zM135 757h2v1h-2zM142 757h2v1h-2zM149 757h1v1h-1zM55 715h3v1h-3zM52 716h1v1h-1zM52 717h3v1h-3zM52 718h2v1h-2zM62 718h2v1h-2zM53 719h1v1h-1zM62 719h1v1h-1zM54 720h6v1h-6zM69 720h2v1h-2zM69 721h1v1h-1zM56 724h1v1h-1zM72 725h1v1h-1zM60 728h1v1h-1zM63 728h4v1h-4zM70 728h2v1h-2zM60 729h1v1h-1zM63 729h3v1h-3zM69 729h2v1h-2zM65 730h1v1h-1zM68 730h3v1h-3zM68 731h3v1h-3zM64 732h1v1h-1zM68 732h1v1h-1zM77 733h1v1h-1zM78 742h2v1h-2zM78 743h2v1h-2zM79 744h1v1h-1zM805 559h1v1h-1zM804 560h2v1h-2zM803 561h3v1h-3zM802 562h4v1h-4zM801 563h2v1h-2zM804 563h2v1h-2zM801 564h1v1h-1zM800 565h2v1h-2zM802 566h1v1h-1zM798 567h6v1h-6zM797 568h6v1h-6zM797 569h3v1h-3zM801 569h1v1h-1zM796 570h3v1h-3zM796 571h5v1h-5zM803 571h3v1h-3zM798 572h8v1h-8zM798 573h2v1h-2zM803 573h2v1h-2zM798 574h1v1h-1zM796 575h2v1h-2zM796 576h2v1h-2zM793 582h2v1h-2zM793 583h4v1h-4zM792 584h6v1h-6zM799 584h1v1h-1zM792 585h9v1h-9zM796 586h6v1h-6zM796 587h6v1h-6zM795 588h9v1h-9zM792 589h8v1h-8zM802 589h2v1h-2zM793 590h6v1h-6zM801 590h3v1h-3zM793 591h11v1h-11zM791 592h1v1h-1zM794 592h2v1h-2zM798 592h2v1h-2zM803 592h2v1h-2zM791 593h1v1h-1zM793 593h1v1h-1zM802 593h4v1h-4zM791 594h4v1h-4zM802 594h4v1h-4zM791 595h1v1h-1zM796 595h1v1h-1zM800 595h2v1h-2zM800 596h1v1h-1zM793 598h2v1h-2zM800 598h1v1h-1zM793 599h2v1h-2zM803 599h2v1h-2zM796 600h1v1h-1zM791 601h1v1h-1zM795 601h2v1h-2zM791 602h1v1h-1zM799 602h1v1h-1zM805 602h1v1h-1zM799 603h2v1h-2zM803 603h1v1h-1zM799 604h2v1h-2zM790 605h1v1h-1zM790 606h1v1h-1zM790 607h1v1h-1zM797 607h1v1h-1zM802 608h1v1h-1zM804 608h2v1h-2zM792 609h1v1h-1zM802 609h1v1h-1zM792 610h4v1h-4zM792 611h4v1h-4zM801 613h1v1h-1zM791 614h4v1h-4zM792 615h3v1h-3zM792 616h3v1h-3zM791 617h1v1h-1zM796 617h2v1h-2zM801 617h2v1h-2zM790 618h2v1h-2zM796 618h2v1h-2zM801 618h2v1h-2zM790 619h1v1h-1zM801 619h2v1h-2zM790 620h1v1h-1zM796 620h3v1h-3zM790 621h2v1h-2zM795 621h5v1h-5zM791 622h1v1h-1zM796 622h5v1h-5zM798 623h3v1h-3zM802 623h4v1h-4zM791 624h1v1h-1zM798 624h4v1h-4zM803 624h3v1h-3zM791 625h1v1h-1zM799 625h3v1h-3zM803 625h3v1h-3zM802 626h1v1h-1zM805 626h1v1h-1zM805 627h1v1h-1zM797 628h1v1h-1zM792 630h1v1h-1zM799 631h5v1h-5zM798 632h4v1h-4zM803 632h1v1h-1zM794 633h3v1h-3zM803 633h1v1h-1zM794 634h2v1h-2zM804 634h2v1h-2zM803 635h3v1h-3zM803 636h2v1h-2zM798 637h1v1h-1zM801 638h2v1h-2zM804 641h2v1h-2zM797 643h2v1h-2zM796 644h3v1h-3zM796 645h4v1h-4zM796 646h5v1h-5zM796 647h8v1h-8zM796 648h2v1h-2zM800 648h5v1h-5zM804 649h1v1h-1zM798 650h1v1h-1zM801 650h4v1h-4zM798 651h1v1h-1zM801 651h5v1h-5zM801 652h5v1h-5zM801 653h5v1h-5zM805 654h1v1h-1zM805 655h1v1h-1zM309 650h1v1h-1zM310 651h1v1h-1zM305 652h3v1h-3zM311 652h1v1h-1zM306 653h2v1h-2zM309 653h3v1h-3zM300 654h1v1h-1zM307 654h4v1h-4zM328 656h1v1h-1zM311 657h1v1h-1zM317 657h1v1h-1zM240 680h2v2h-1v1h-1zM244 681h2v2h-1v1h-1zM249 683h2v2h-1v1h-1zM252 686h2v2h-1v1h-1zM254 690h2v2h-1v1h-1zM253 695h2v2h-1v1h-1zM252 700h2v2h-1v1h-1zM249 705h2v2h-1v1h-1zM246 710h2v2h-1v1h-1zM241 715h2v2h-1v1h-1zM236 721h2v2h-1v1h-1zM234 723h2v2h-1v1h-1zM6 704h1v1h-1zM6 703h1v1h-1zM9 705h1v2h-1zM12 702h2v2h-2zM14 703h3v1h-3zM15 703h2v2h-2zM13 703h2v2h-2zM15 702h2v1h-2zM18 700h2v2h-2zM19 701h2v1h-2zM18 702h1v1h-1zM20 701h2v1h-2zM22 698h1v1h-1zM23 698h1v1h-1zM25 700h1v2h-1zM28 700h1v1h-1zM26 700h2v1h-2zM28 703h1v1h-1zM30 704h1v1h-1zM27 703h2v1h-2zM28 705h2v1h-2zM28 707h2v1h-2zM30 709h1v1h-1zM34 707h2v2h-2zM42 704h2v1h-2zM41 707h1v2h-1zM45 705h2v1h-2zM46 706h3v2h-3zM44 708h2v1h-2zM47 711h1v1h-1zM47 712h2v1h-2zM47 710h2v1h-2zM47 713h2v2h-2zM50 721h1v1h-1zM50 723h1v2h-1zM51 721h2v2h-2zM52 723h1v1h-1zM53 722h2v1h-2zM54 721h2v1h-2zM54 723h2v1h-2zM60 722h1v1h-1zM58 719h1v2h-1zM61 722h3v1h-3zM60 724h1v1h-1zM60 725h2v1h-2zM63 724h1v1h-1zM63 725h2v2h-2zM64 727h1v1h-1zM70 727h2v1h-2zM68 726h1v1h-1zM71 727h2v2h-2zM71 729h2v2h-2zM74 732h2v2h-2zM73 736h1v2h-1zM73 736h1v2h-1zM75 737h2v2h-2zM75 739h2v1h-2zM73 739h2v1h-2zM74 740h1v1h-1zM76 744h1v1h-1zM76 745h2v2h-2zM81 742h3v1h-3zM85 744h2v1h-2zM85 743h2v1h-2zM84 745h2v1h-2zM89 743h2v1h-2zM89 745h1v2h-1zM90 743h2v1h-2zM90 742h1v1h-1zM92 742h1v1h-1zM91 743h2v1h-2zM93 743h2v1h-2zM95 743h1v1h-1zM96 744h2v2h-2zM98 746h3v1h-3zM97 746h2v1h-2zM102 747h1v1h-1zM103 744h2v2h-2zM102 744h2v1h-2zM104 747h2v2h-2zM106 748h2v2h-2zM107 748h2v1h-2zM109 751h2v1h-2zM112 749h2v1h-2zM112 752h3v1h-3zM114 747h1v1h-1zM115 748h2v1h-2zM119 745h2v1h-2zM118 747h1v1h-1zM122 745h2v2h-2zM120 745h1v1h-1zM121 744h2v2h-2zM121 749h1v1h-1zM124 747h2v1h-2zM123 746h1v2h-1zM126 745h2v1h-2zM124 746h2v2h-2zM128 746h1v1h-1zM126 743h1v2h-1zM128 743h2v1h-2zM129 743h3v2h-3zM131 744h1v1h-1zM133 748h2v1h-2zM134 747h3v1h-3zM134 743h1v1h-1zM134 742h2v2h-2zM136 745h1v1h-1zM137 743h1v1h-1zM138 744h1v1h-1zM141 744h2v1h-2zM143 750h2v1h-2zM143 748h1v2h-1zM142 750h2v1h-2zM146 749h1v2h-1zM148 748h1v1h-1zM147 748h2v2h-2zM148 752h2v2h-2zM149 750h3v1h-3zM147 750h2v1h-2zM151 753h2v1h-2zM151 754h2v1h-2zM149 754h2v1h-2zM150 755h1v1h-1zM151 752h1v2h-1zM153 753h1v1h-1zM153 753h2v1h-2zM155 752h2v2h-2zM155 749h2v2h-2zM156 747h2v1h-2zM156 746h3v2h-3zM156 742h1v1h-1zM157 740h2v1h-2zM154 738h2v2h-2zM153 736h2v2h-2zM151 732h2v1h-2zM149 730h2v1h-2zM151 728h2v1h-2zM149 729h1v1h-1zM150 728h1v2h-1zM153 723h3v2h-3zM151 719h1v1h-1zM154 720h2v1h-2zM154 720h1v1h-1zM157 721h3v1h-3zM157 723h1v1h-1zM161 723h1v2h-1zM162 725h2v1h-2zM163 728h2v1h-2zM168 731h3v1h-3zM169 730h1v1h-1zM169 733h2v2h-2zM175 732h2v1h-2zM177 735h1v1h-1zM177 737h2v1h-2zM183 737h2v1h-2zM184 737h2v1h-2zM184 741h2v1h-2zM184 740h1v2h-1zM188 742h2v1h-2zM186 738h1v2h-1zM191 740h2v2h-2zM193 739h2v1h-2zM191 739h2v1h-2zM195 739h3v2h-3zM196 740h2v1h-2zM195 740h1v1h-1zM199 745h2v1h-2zM201 746h1v1h-1zM201 746h2v1h-2zM205 748h1v1h-1zM204 748h2v2h-2zM216 749h1v2h-1zM220 748h2v2h-2zM217 747h2v2h-2zM220 748h1v2h-1zM220 746h3v1h-3zM221 747h1v2h-1zM226 749h1v2h-1zM226 750h2v1h-2zM225 749h2v2h-2zM228 748h1v1h-1zM227 749h3v2h-3zM232 751h1v1h-1zM229 750h2v1h-2zM230 752h2v2h-2zM234 754h1v2h-1zM238 756h2v2h-2zM236 755h2v1h-2zM238 758h1v2h-1zM238 756h2v1h-2zM236 751h2v2h-2zM236 749h1v1h-1zM236 750h2v1h-2zM234 749h2v2h-2zM229 747h3v2h-3zM228 742h1v1h-1zM226 741h2v1h-2zM226 744h1v2h-1zM223 743h2v1h-2zM224 742h3v1h-3zM219 740h1v1h-1zM218 740h3v2h-3zM218 741h2v2h-2zM214 740h2v1h-2zM213 740h2v2h-2zM213 737h2v1h-2zM211 736h2v1h-2zM211 735h1v1h-1zM211 737h1v1h-1zM208 735h2v1h-2zM205 734h1v1h-1zM203 732h1v2h-1zM206 731h1v1h-1zM203 732h1v1h-1zM200 728h2v1h-2zM201 727h2v1h-2zM198 722h1v1h-1zM199 721h1v1h-1zM199 719h2v1h-2zM197 718h2v2h-2zM194 715h2v1h-2zM193 713h1v2h-1zM190 703h2v1h-2zM190 701h1v1h-1zM193 697h1v2h-1zM196 696h2v1h-2zM197 695h2v1h-2zM194 695h1v2h-1zM195 694h2v2h-2zM196 694h1v1h-1zM198 693h3v1h-3zM201 692h1v1h-1zM201 692h2v2h-2zM204 688h2v1h-2zM203 689h1v1h-1zM203 687h1v2h-1zM206 684h3v1h-3zM209 682h1v2h-1zM207 684h3v1h-3zM207 684h2v1h-2zM204 682h1v1h-1zM202 687h1v1h-1zM201 687h2v1h-2zM194 693h1v1h-1zM195 693h2v2h-2zM193 694h2v2h-2zM192 695h1v1h-1zM192 694h1v2h-1zM190 692h2v1h-2zM190 695h1v1h-1zM186 692h2v1h-2zM185 695h1v1h-1zM183 691h1v1h-1zM182 692h2v1h-2zM182 689h2v2h-2zM179 692h1v1h-1zM181 688h1v1h-1zM178 687h2v1h-2zM175 686h2v2h-2zM176 683h2v2h-2zM178 681h2v1h-2zM185 678h2v2h-2zM186 676h1v2h-1zM188 677h2v1h-2zM187 678h3v1h-3zM191 677h1v1h-1zM190 679h2v2h-2zM193 677h2v2h-2zM193 681h1v1h-1zM195 680h2v2h-2zM198 679h1v1h-1zM197 679h1v1h-1zM199 679h1v2h-1zM200 678h2v2h-2zM202 673h2v2h-2zM203 672h1v1h-1zM205 671h1v2h-1zM205 670h2v1h-2zM208 665h1v1h-1zM210 663h2v2h-2zM209 663h2v1h-2zM210 660h1v1h-1zM209 659h2v1h-2zM213 657h1v1h-1zM212 656h1v2h-1zM213 653h2v1h-2zM212 655h2v2h-2zM213 652h1v1h-1zM214 652h3v1h-3zM216 650h1v1h-1zM220 650h1v1h-1zM219 655h2v2h-2zM216 655h2v2h-2zM217 658h2v2h-2zM217 656h2v2h-2zM219 657h2v2h-2zM219 660h1v1h-1zM222 659h2v1h-2zM222 658h2v1h-2zM224 659h2v1h-2zM222 658h1v2h-1zM222 659h1v1h-1zM225 656h1v2h-1zM226 657h1v1h-1zM228 655h1v1h-1zM228 657h1v1h-1zM230 655h1v1h-1zM234 652h1v1h-1zM232 652h1v1h-1zM236 650h2v1h-2zM234 652h1v1h-1zM237 649h2v1h-2zM239 650h1v1h-1zM241 650h1v1h-1zM246 648h1v1h-1zM246 648h2v2h-2zM245 645h1v1h-1zM249 649h1v2h-1zM251 647h1v2h-1zM253 647h2v1h-2zM253 647h2v1h-2zM256 649h1v2h-1zM256 648h1v1h-1zM257 649h1v1h-1zM259 649h1v2h-1zM259 647h3v2h-3zM260 647h1v2h-1zM263 647h1v1h-1zM261 645h2v2h-2zM262 647h1v2h-1zM267 647h2v1h-2zM268 645h1v1h-1zM268 647h1v2h-1zM269 645h1v1h-1zM273 644h1v2h-1zM275 647h2v1h-2zM275 648h2v1h-2zM275 649h2v1h-2zM278 649h2v2h-2zM282 648h2v2h-2zM287 647h2v1h-2zM287 648h1v2h-1zM289 648h1v2h-1zM291 648h1v1h-1zM293 650h1v1h-1zM293 651h1v1h-1zM294 651h2v2h-2zM294 651h1v2h-1zM301 651h2v1h-2zM299 649h1v1h-1zM303 649h1v1h-1zM301 648h1v2h-1zM301 646h2v2h-2zM302 647h2v1h-2zM304 647h1v1h-1zM302 642h1v1h-1zM305 641h2v1h-2zM306 641h2v1h-2zM304 640h2v2h-2zM307 638h1v1h-1zM306 637h1v1h-1zM304 634h2v1h-2zM307 634h2v1h-2zM305 631h2v1h-2zM308 630h3v1h-3zM309 630h1v2h-1zM309 628h3v1h-3zM310 624h1v2h-1zM312 621h1v1h-1zM314 621h2v2h-2zM316 624h3v1h-3zM317 624h2v1h-2zM318 625h1v1h-1zM318 627h1v2h-1zM319 633h3v2h-3zM318 636h3v1h-3zM318 635h2v2h-2zM321 640h1v1h-1zM323 644h1v2h-1zM321 642h1v2h-1zM323 646h2v2h-2zM325 646h2v1h-2zM329 651h2v1h-2zM330 651h1v1h-1zM328 654h2v2h-2zM329 652h3v1h-3zM332 656h1v1h-1zM333 656h2v2h-2zM331 657h2v2h-2zM331 659h2v1h-2zM332 658h1v1h-1zM336 658h3v2h-3zM333 660h2v2h-2zM334 661h2v2h-2zM338 659h1v2h-1zM340 658h1v1h-1zM342 657h2v1h-2zM344 656h2v1h-2zM346 656h3v2h-3zM345 655h2v1h-2zM348 657h1v1h-1zM352 657h2v2h-2zM355 652h1v2h-1zM353 654h2v1h-2zM354 652h1v1h-1zM358 652h2v1h-2zM358 653h2v2h-2zM360 652h2v2h-2zM361 651h2v1h-2zM366 650h2v1h-2zM366 652h1v2h-1zM367 650h3v1h-3zM369 650h2v1h-2zM368 653h3v1h-3zM368 649h1v1h-1zM372 650h1v1h-1zM374 650h3v1h-3zM377 650h1v1h-1zM375 650h2v1h-2zM378 648h3v1h-3zM379 649h3v2h-3zM381 648h2v1h-2zM379 650h2v1h-2zM382 648h3v1h-3zM385 648h2v1h-2zM389 649h2v1h-2zM388 646h2v1h-2zM392 647h1v1h-1zM391 646h2v2h-2zM394 645h2v2h-2zM396 645h1v2h-1zM399 646h2v2h-2zM401 644h2v2h-2zM401 647h1v2h-1zM404 648h1v1h-1zM406 648h1v1h-1zM408 647h2v1h-2zM409 647h2v1h-2zM415 645h1v2h-1zM418 646h3v1h-3zM419 646h1v2h-1zM419 647h2v1h-2zM419 648h2v1h-2zM422 647h2v2h-2zM424 648h3v1h-3zM426 649h2v1h-2zM426 645h1v2h-1zM427 648h2v1h-2zM428 646h2v1h-2zM429 648h1v2h-1zM430 648h1v2h-1zM433 648h2v1h-2zM435 646h1v1h-1zM433 647h1v1h-1zM438 649h1v1h-1zM442 648h3v1h-3zM446 651h2v2h-2zM450 652h1v1h-1zM449 651h3v2h-3zM450 653h1v1h-1zM453 655h3v1h-3zM456 654h1v1h-1zM458 656h1v2h-1zM464 657h2v1h-2zM465 657h2v1h-2zM465 659h1v1h-1zM468 658h2v1h-2zM468 657h2v1h-2zM471 659h1v1h-1zM476 659h2v1h-2zM477 660h1v1h-1zM477 662h2v1h-2zM481 660h1v1h-1zM480 659h1v2h-1zM482 659h1v1h-1zM484 659h2v1h-2zM485 659h1v1h-1zM485 660h2v2h-2zM487 659h1v1h-1zM487 658h2v1h-2zM488 658h2v2h-2zM493 658h2v1h-2zM499 655h2v1h-2zM498 656h1v1h-1zM498 656h2v1h-2zM499 659h2v1h-2zM500 658h2v1h-2zM499 658h1v1h-1zM504 663h2v2h-2zM504 663h1v2h-1zM503 666h2v2h-2zM504 665h1v2h-1zM504 669h2v2h-2zM503 668h1v2h-1zM507 674h2v1h-2zM503 678h1v1h-1zM505 679h1v2h-1zM505 680h2v2h-2zM501 681h2v1h-2zM501 682h2v2h-2zM503 684h2v2h-2zM505 685h1v2h-1zM502 688h2v1h-2zM506 693h1v1h-1zM510 696h1v1h-1zM511 694h2v2h-2zM512 697h1v1h-1zM515 700h2v1h-2zM511 698h2v1h-2zM512 702h2v1h-2zM515 703h1v2h-1zM515 705h1v2h-1zM514 707h1v1h-1zM516 707h1v1h-1zM519 710h2v1h-2zM519 712h1v1h-1zM522 710h2v1h-2zM520 714h2v1h-2zM523 714h1v2h-1zM527 716h1v2h-1zM527 714h2v2h-2zM528 715h2v1h-2zM532 715h2v1h-2zM536 719h1v2h-1zM539 715h2v1h-2zM537 716h1v1h-1zM543 714h2v2h-2zM542 711h1v1h-1zM543 711h1v1h-1zM545 709h1v1h-1zM544 706h2v2h-2zM545 707h2v2h-2zM548 706h1v1h-1zM550 705h1v1h-1zM547 705h2v1h-2zM549 703h2v2h-2zM553 705h1v1h-1zM553 702h2v2h-2zM555 703h2v1h-2zM557 701h2v2h-2zM557 701h1v2h-1zM558 699h2v2h-2zM560 700h1v2h-1zM562 698h2v2h-2zM561 695h1v1h-1zM565 694h2v2h-2zM564 693h1v2h-1zM571 695h1v2h-1zM573 692h2v2h-2zM574 694h2v2h-2zM579 689h2v1h-2zM580 687h1v1h-1zM578 687h1v2h-1zM584 684h2v1h-2zM583 683h2v1h-2zM584 683h1v2h-1zM582 679h1v2h-1zM584 681h1v1h-1zM583 680h2v2h-2zM586 679h1v1h-1zM584 679h2v1h-2zM587 676h3v1h-3zM589 675h1v2h-1zM591 672h2v1h-2zM594 675h2v2h-2zM599 675h2v2h-2zM598 673h1v2h-1zM600 674h2v1h-2zM601 673h1v1h-1zM605 674h1v1h-1zM609 672h1v1h-1zM611 674h2v1h-2zM612 675h2v1h-2zM612 677h2v2h-2zM616 678h2v2h-2zM617 678h1v2h-1zM618 678h1v1h-1zM618 681h1v1h-1zM618 681h2v1h-2zM623 679h2v1h-2zM622 684h2v2h-2zM624 682h1v1h-1zM627 684h1v1h-1zM629 684h1v2h-1zM629 683h2v1h-2zM630 685h1v1h-1zM633 687h1v1h-1zM633 688h2v1h-2zM634 688h2v2h-2zM634 688h1v2h-1zM637 689h2v1h-2zM640 692h3v1h-3zM641 691h1v2h-1zM642 697h2v1h-2zM642 696h2v1h-2zM639 698h1v1h-1zM641 699h1v1h-1zM645 701h1v2h-1zM647 703h2v1h-2zM648 706h1v1h-1zM647 707h2v1h-2zM654 708h2v1h-2zM653 710h1v1h-1zM654 712h2v1h-2zM654 714h2v1h-2zM653 712h2v1h-2zM654 715h3v1h-3zM657 719h1v1h-1zM656 718h1v1h-1zM658 721h1v1h-1zM657 721h3v2h-3zM661 721h2v1h-2zM663 724h2v1h-2zM661 728h1v1h-1zM662 728h2v1h-2zM666 731h1v2h-1zM666 730h3v1h-3zM667 733h2v2h-2zM666 735h2v2h-2zM672 738h1v1h-1zM669 736h3v1h-3zM674 739h1v1h-1zM675 742h1v2h-1zM674 742h1v1h-1zM678 744h2v1h-2zM675 747h3v1h-3zM678 749h1v1h-1zM679 747h1v1h-1zM680 752h2v1h-2zM682 751h1v2h-1zM679 752h1v1h-1zM680 754h2v1h-2zM681 754h2v1h-2zM680 758h1v1h-1zM682 759h1v1h-1zM682 758h1v1h-1zM684 758h3v2h-3zM685 758h2v1h-2zM686 756h3v1h-3zM687 756h1v2h-1zM692 758h2v1h-2zM693 758h2v1h-2zM699 756h1v1h-1zM696 760h2v2h-2zM702 762h2v2h-2zM702 760h3v1h-3zM701 762h3v1h-3zM702 764h1v1h-1zM701 766h2v1h-2zM703 764h2v1h-2zM704 769h1v1h-1zM702 770h1v2h-1zM702 769h1v1h-1zM703 770h2v2h-2zM706 772h1v1h-1zM706 771h2v2h-2zM709 774h1v2h-1zM713 779h1v2h-1zM713 779h1v1h-1zM711 784h2v2h-2zM711 787h1v2h-1zM714 790h1v2h-1zM713 790h1v1h-1zM806 559h1v1h-1zM805 564h1v1h-1zM803 562h3v1h-3zM801 568h1v2h-1zM802 570h2v1h-2zM802 570h2v1h-2zM802 573h1v1h-1zM802 575h2v1h-2zM801 575h3v1h-3zM803 578h1v1h-1zM802 581h2v2h-2zM802 584h2v1h-2zM801 588h2v1h-2zM804 590h3v2h-3zM802 592h1v1h-1zM802 592h1v1h-1zM802 594h3v1h-3zM803 594h2v1h-2zM802 593h2v2h-2zM804 594h3v1h-3zM800 601h1v2h-1zM801 605h2v1h-2zM803 604h1v2h-1zM804 606h2v1h-2zM803 608h1v1h-1zM804 611h2v1h-2zM802 612h1v1h-1zM801 616h2v2h-2zM801 618h1v1h-1zM802 618h2v2h-2zM802 621h3v2h-3zM803 621h1v2h-1zM803 625h1v1h-1zM803 624h1v1h-1zM801 624h2v1h-2zM804 627h2v1h-2zM803 636h1v2h-1zM801 638h1v1h-1zM800 642h1v1h-1zM800 641h3v1h-3zM803 644h1v2h-1zM800 644h2v1h-2zM801 646h1v1h-1zM802 647h1v2h-1zM800 650h1v1h-1zM803 653h2v1h-2zM803 652h2v2h-2zM806 655h1v2h-1z" fill="#000" shape-rendering="crispEdges"/>
<path d="M270 657l8 1M292 655l9 1M540 722l12-8 10-9" fill="none" stroke="#000" shape-rendering="crispEdges"/>
<path d="M299.5 60.1 304.5 56.2 310.4 57.2 313.3 63.1 318.3 69.0 322.2 72.9 319.3 75.9 320.2 82.8 323.2 90.7 324.2 95.6 321.2 94.6 317.3 86.7 314.3 78.8 313.3 71.0 310.4 64.1 306.4 61.1 302.5 62.7Z M368.5 260.3 374.7 258.4 385.7 265.3 393.1 271.4 398.0 276.3 395.6 277.6 388.2 271.4 378.3 265.3 369.7 262.8Z M439.4 377.1 442.8 369.1 448.5 363.4 451.9 365.7 447.4 372.5 443.9 377.1Z M613.9 289.9 621.3 288.6 627.4 293.6 621.3 297.3 616.3 303.4 611.4 310.8 605.3 312.0 604.5 307.1 611.4 304.7 613.9 297.3Z M526.1 502.2 529.8 508.3 531.0 515.7 535.9 525.6 532.2 533.0 531.0 537.9 527.3 531.8 528.5 523.1 526.1 513.3Z M424.5 413.7 426.8 418.2 427.9 425.1 432.1 431.9 430.2 434.2 426.8 429.7 425.2 422.8 424.1 417.1Z M123.1 655.4 130.5 652.2 136.7 656.6 134.2 664.0 128.0 668.9 121.9 665.3Z M142.8 708.3 145.3 698.5 151.4 695.5 154.6 701.0 150.2 708.3 147.7 714.5 141.6 710.8Z M43.1 681.3 49.2 683.7 51.7 688.6 46.8 689.1Z M59.1 686.2 65.3 698.5 73.9 703.4 83.7 705.9 85.0 709.6 73.9 708.3 62.8 704.7 57.9 693.6Z M540.0 604.9 547.4 612.3 554.8 607.4 562.2 611.1 557.2 614.8 549.8 617.2 542.5 616.0 535.1 607.4 537.5 600.0Z M786.2 733.0 796.1 747.7 791.2 755.1 785.0 742.8Z M770.0 789.0 778.0 788.0 779.0 792.0 771.0 793.0Z" fill="#2b4664" stroke="#2b4664" stroke-width="1" stroke-linejoin="round" shape-rendering="crispEdges"/>
<path d="M6.0 105.4 155.1 105.4 157.6 108.3 161.3 114.5 160.1 123.1 152.7 130.5 145.3 140.4 137.9 149.5 186.4 149.5 M208.9 104.0 309.8 104.6 309.8 94.8 310.4 89.9 422.7 91.1 540.0 94.3 638.5 96.8 786.2 94.8 806.0 97.8 M636.0 95.5 650.8 87.4 673.0 82.5 677.9 76.3 692.7 71.4 697.6 61.6 707.4 54.2 709.9 48.0 727.1 39.4 744.4 32.0 756.7 22.2 762.9 14.8 759.2 11.1 749.3 6.0 M762.9 14.8 766.6 24.6 773.9 34.5 786.2 41.9 798.5 39.4 806.0 34.5 M786.2 94.8 782.5 108.3 780.1 118.2 771.5 120.7 762.9 130.5 756.7 139.1 746.8 135.4 734.5 139.1 724.7 150.2 717.3 152.7 714.8 145.3 709.9 144.1 702.5 152.7 695.1 155.1 690.2 167.4 677.9 169.9 668.0 177.3 655.7 183.5 648.3 187.1 638.5 188.4 623.7 189.6 613.9 198.2 613.9 200.0 610.2 209.8 599.1 214.8 590.5 218.5 588.0 238.7 M144.0 238.7 299.5 238.3 492.9 239.2 588.0 238.7 679.1 238.7 M679.1 238.7 702.5 230.8 729.6 222.2 744.4 220.2 806.0 223.4 M679.1 238.7 668.0 251.7 660.7 264.0 668.0 271.4 685.3 283.7 695.1 285.0 700.1 298.5 707.4 310.8 717.3 328.0 729.6 340.4 744.4 352.7 754.2 365.0 766.5 377.3 766.5 389.6 777.6 400.0 786.2 407.4 796.1 412.3 798.5 422.2 804.7 427.1 806.0 439.4 M299.5 238.2 306.9 248.0 291.5 400.0 279.8 547.7 282.3 600.0 284.8 612.0 284.8 648.0 M492.9 239.4 517.5 400.0 519.9 400.0 526.1 429.5 538.4 459.1 537.2 473.9 544.6 481.3 534.7 493.6 531.0 503.4 534.7 537.9 531.0 572.4 538.4 594.5 537.2 600.0 540.0 608.0 547.4 618.5 M547.4 618.5 638.5 624.6 737.0 631.5 744.4 632.0 745.6 641.9 749.3 649.2 756.7 650.5 759.2 641.9 756.7 629.5 757.9 617.2 762.9 611.1 769.0 609.8 776.4 614.8 786.2 617.2 796.1 618.5 804.7 614.8 M538.4 594.5 343.9 594.5 341.4 600.0 343.9 607.4 351.3 614.8 357.4 624.6 355.0 634.5 358.6 641.9 356.2 645.6 M6.0 415.3 78.8 415.3 M43.1 594.5 186.4 594.5 183.5 604.9 178.5 612.3 177.3 624.6 182.2 634.5 187.1 641.9 190.8 651.7 197.0 665.3 198.0 676.0 M160.0 200.0 159.3 200.6 158.9 202.4 159.0 204.5 160.4 204.1 161.2 203.0 158.5 205.3 155.8 208.7 154.7 208.7 154.0 206.8 154.7 207.6 158.3 210.8 161.3 212.0 161.2 209.9 160.8 209.1 161.0 209.8 161.4 212.4 161.1 215.8 159.5 218.1 158.1 218.2 157.7 216.8 158.1 215.6 158.3 216.0 158.2 218.3 157.8 221.7 157.4 224.5 157.3 225.7 158.0 225.6 157.8 224.6 157.0 224.8 154.9 225.1 152.4 225.3 150.7 225.1 150.4 224.7 150.7 224.4 150.2 224.6 148.9 225.8 147.7 228.0 147.7 229.8 148.4 230.3 148.9 229.9 148.8 229.8 150.1 229.5 147.7 234.0 145.1 237.8 143.2 237.9 142.7 234.9 143.3 232.5 144.2 233.6 144.6 238.3 144.9 243.3 146.1 245.3 148.0 243.8 149.3 241.3 148.6 241.1 145.8 244.2 142.5 247.1 139.7 248.5 138.4 247.7 138.9 245.8 140.1 244.3 140.7 244.4 139.8 246.4 137.7 249.6 135.3 252.3 133.6 253.3 133.6 253.6 134.7 254.3 135.5 254.7 135.0 253.8 132.0 250.2 128.3 246.7 128.5 245.8 130.2 244.3 129.4 245.0 128.7 250.9 129.9 255.8 132.2 254.9 133.6 251.5 132.4 252.1 128.4 256.7 124.5 259.0 123.8 256.2 125.5 252.9 126.1 256.4 125.4 258.4 125.0 261.0 125.6 263.0 126.9 263.3 127.4 262.2 127.0 261.4 126.9 261.5 127.4 262.8 128.6 264.9 129.6 267.3 129.3 269.0 128.0 268.7 127.8 267.1 128.8 266.7 128.5 267.4 127.2 268.9 125.6 270.8 125.0 272.4 125.4 273.0 126.0 272.6 125.9 272.3 125.3 273.1 124.3 275.1 123.2 277.2 122.4 278.4 122.0 278.6 121.8 278.4 121.2 277.8 122.6 280.9 124.4 284.1 125.7 284.3 126.0 282.4 125.6 282.6 124.8 286.0 123.1 289.1 121.7 288.5 122.4 286.1 123.3 286.4 121.8 289.5 120.0 292.3 120.6 293.1 123.7 293.2 123.1 292.5 118.2 293.2 113.5 293.6 113.0 291.9 115.2 289.6 115.7 290.1 113.2 294.2 111.1 298.7 112.4 300.0 115.3 298.6 115.3 297.7 110.9 299.0 105.9 300.1 105.6 299.5 105.7 298.7 106.3 297.9 106.5 298.0 105.7 299.4 104.0 301.8 102.4 304.3 101.6 306.1 102.0 306.8 103.1 306.5 103.6 305.8 102.7 305.4 100.9 306.2 99.7 308.5 99.5 310.2 99.3 310.6 98.7 310.1 99.1 310.2 101.0 311.4 103.0 313.3 103.8 314.6 104.1 314.4 104.5 314.0 103.6 314.8 101.4 316.5 99.0 317.8 97.9 317.8 98.1 317.0 98.1 314.6 97.2 318.5 96.8 323.9 98.7 325.1 100.7 322.3 100.5 321.7 97.0 325.1 92.4 326.9 91.8 324.5 94.7 322.1 95.0 323.1 91.2 326.8 88.6 330.1 90.6 331.0 91.0 329.2 90.6 328.9 88.9 329.0 87.1 330.0 86.3 331.5 86.2 332.2 86.0 332.1 85.9 332.0 86.6 332.6 88.2 334.1 90.0 335.9 91.3 337.0 91.8 337.2 92.0 336.9 93.2 336.2 92.3 338.2 90.0 341.1 87.6 343.1 86.4 343.0 86.3 341.7 86.3 341.0 86.2 342.6 87.7 345.8 90.5 347.5 92.2 347.4 92.2 346.1 92.8 345.8 92.9 347.8 91.1 349.2 86.9 349.5 83.7 349.0 82.7 348.1 83.4 347.0 84.4 346.0 84.2 346.0 83.0 347.9 81.9 351.6 81.2 355.5 81.2 357.8 81.8 358.1 83.2 357.5 84.1 357.0 82.5 356.8 79.3 357.3 76.2 358.9 75.6 360.8 75.7 360.9 74.8 360.0 74.5 359.6 76.3 360.1 79.4 361.9 81.8 364.2 82.3 365.5 82.7 365.0 83.5 364.1 83.2 364.2 82.4 365.3 78.5 367.5 74.8 369.5 72.5 370.3 71.9 369.7 71.9 368.1 71.4 367.1 71.4 368.0 73.0 370.7 76.1 374.1 79.4 376.7 81.8 377.3 82.3 375.4 80.6 372.5 78.2 374.1 78.8 375.4 81.8 376.6 84.2 377.3 84.2 378.2 82.3 378.4 81.6 376.9 83.5 377.0 85.3 379.4 86.3 381.1 86.9 380.7 87.3 379.7 87.0 380.4 85.4 383.0 83.5 384.5 82.0 385.0 81.2 384.8 81.2 384.3 81.0 384.1 80.3 384.9 80.1 386.9 81.4 388.8 83.1 389.7 84.2 389.8 84.4 389.4 84.3 389.1 84.7 389.5 85.4 390.9 86.0 393.6 85.4 395.8 84.5 396.0 84.2 395.1 84.4 395.0 84.7 396.9 84.7 399.6 84.5 401.5 84.8 401.9 85.3 401.7 84.9 401.8 82.8 402.7 80.3 403.7 78.6 404.2 78.3 403.9 78.3 403.4 78.1 404.4 79.0 406.8 80.7 409.0 81.8 409.5 82.0 408.8 81.8 408.5 81.9 410.1 81.9 412.9 81.4 415.0 80.5 414.9 80.5 413.7 81.0 413.7 80.2 414.5 78.4 419.4 78.5 422.0 80.9 421.3 82.7 419.2 81.2 418.5 78.2 420.8 80.5 423.0 80.4 423.6 77.8 424.3 76.8 424.1 79.7 422.3 84.4 419.7 86.7 418.0 86.4 417.5 85.8 416.7 86.3 416.2 86.9 417.4 86.9 420.9 86.2 425.1 84.9 428.2 83.2 428.8 82.2 426.7 83.0 423.9 84.5 423.0 84.7 424.5 83.1 427.7 81.0 431.3 80.6 433.8 82.1 434.3 84.0 432.4 84.1 430.5 82.6 431.3 81.2 434.9 80.1 438.5 78.9 439.7 77.8 438.5 77.4 436.8 77.7 437.0 79.4 439.8 82.1 443.0 84.9 444.3 84.4 442.8 83.9 441.8 83.7 441.9 84.7 444.0 86.1 446.8 86.6 448.7 85.8 449.0 85.0 448.3 85.6 448.4 87.8 449.8 90.3 451.5 91.7 452.2 92.0 451.7 92.3 451.3 93.8 451.5 90.9 454.7 86.7 456.7 84.5 456.5 84.9 454.4 86.1 452.7 85.9 453.5 84.9 457.5 85.3 462.2 87.3 463.8 88.7 461.7 88.5 459.0 87.3 459.1 86.9 462.5 87.5 465.6 88.0 466.2 87.3 466.4 87.8 466.0 90.3 464.8 92.5 464.0 92.7 463.7 92.5 463.1 93.0 464.3 93.3 467.3 92.8 469.2 92.1 468.9 92.0 468.5 93.0 470.0 94.3 472.4 96.2 473.8 97.5 473.1 96.6 471.4 95.0 471.0 94.9 471.3 96.7 471.6 99.2 472.9 99.6 475.5 98.0 476.4 97.0 475.5 97.0 474.3 97.4 474.0 97.6 475.3 96.8 477.8 95.8 481.7 95.6 484.1 96.9 484.2 98.6 482.9 99.2 482.1 97.7 482.9 94.1 484.6 89.9 485.3 87.6 484.0 88.3 482.3 90.6 481.4 92.0 481.6 90.6 482.4 87.1 484.0 84.2 485.2 82.5 486.8 82.8 488.1 84.3 488.1 85.3 487.4 85.2 487.0 83.8 487.7 81.4 489.3 79.1 491.2 78.2 492.8 78.5 493.5 78.2 493.3 77.7 493.1 76.9 493.4 81.1 494.2 86.2 494.4 88.0 492.4 85.1 490.6 81.6 491.5 82.4 492.7 87.0 492.0 91.6 491.3 92.7 493.3 86.6 494.7 86.7 487.8 87.9 489.2 87.3 494.1 87.0 497.4 87.5 499.0 88.8 498.5 90.0 497.2 90.0 496.6 88.2 497.6 85.5 500.0 83.4 502.8 82.5 504.5 82.0 504.3 81.2 502.9 81.3 501.8 82.7 502.1 84.3 504.5 83.8 507.5 82.4 509.4 82.4 510.0 83.8 510.0 85.2 509.6 84.7 509.0 82.1 508.9 78.4 509.5 75.3 510.4 73.9 510.5 74.0 509.3 74.8 507.9 75.3 507.7 74.9 509.5 73.8 513.0 72.7 515.6 71.9 517.5 71.9 518.3 72.6 518.3 73.2 518.1 72.9 518.0 71.2 518.3 68.6 519.0 66.1 520.2 64.6 521.3 64.0 521.6 63.9 521.0 63.8 520.6 62.2 519.3 62.9 522.4 65.8 526.4 69.9 527.6 71.8 526.0 70.6 523.7 67.9 522.3 66.3 522.9 66.8 525.6 69.8 526.3 70.8 523.0 71.0 521.2 72.0 521.5 73.5 522.4 72.6 521.9 69.1 522.1 66.1 525.6 65.7 528.6 67.6 528.6 69.4 527.2 68.7 527.0 65.2 528.5 61.2 530.3 59.3 530.4 59.6 528.6 60.0 527.3 60.0 529.0 60.5 533.5 61.7 536.7 62.9 537.2 63.7 535.5 63.7 534.7 62.7 536.6 60.3 539.9 57.4 541.1 56.8 539.3 58.8 537.5 59.8 537.7 57.8 539.3 54.3 541.4 52.7 543.6 54.7 544.2 55.6 541.5 54.6 541.3 54.3 543.9 54.5 545.9 53.8 545.9 53.7 545.2 54.8 546.1 55.9 548.5 56.1 549.9 56.6 549.6 56.5 549.5 54.6 550.6 52.1 552.1 51.2 552.4 49.8 552.1 49.5 551.7 49.6 552.5 51.2 554.7 53.7 557.3 55.8 559.1 56.9 559.6 57.2 558.9 57.7 558.4 57.9 559.6 56.0 561.0 52.6 561.6 49.4 561.4 47.9 560.9 47.6 559.4 48.6 558.1 47.4 558.3 46.6 561.5 49.0 565.3 52.3 567.3 53.9 566.8 53.6 564.8 52.9 563.2 53.1 563.9 53.5 567.4 51.1 571.1 47.7 569.8 48.1 567.5 50.5 567.4 51.3 567.6 49.5 568.3 46.0 569.6 43.9 571.6 45.1 572.8 47.5 571.1 47.3 569.1 46.2 570.4 45.7 573.9 45.1 576.8 44.1 577.3 43.3 576.1 43.3 575.3 43.9 576.7 47.3 581.3 49.9 582.9 50.5 580.2 50.1 577.9 49.4 580.3 47.9 585.8 45.4 588.4 44.0 585.8 44.6 582.8 45.5 584.4 45.9 590.0 46.8 593.8 48.7 592.9 48.8 591.6 47.9 591.7 46.0 592.8 44.2 593.8 43.1 594.5 M226.6 55.2 226.9 54.7 227.5 53.7 228.4 52.2 229.7 50.3 231.0 48.3 232.5 46.5 234.1 44.7 235.8 43.0 237.6 41.6 239.4 40.6 241.4 40.0 243.3 39.8 245.2 39.8 247.1 40.0 248.9 40.5 250.6 41.3 252.4 42.1 254.2 43.1 256.2 44.2 258.1 45.5 260.1 46.7 262.1 47.9 264.1 49.1 266.0 50.4 267.9 51.4 269.8 52.3 271.6 53.0 273.3 53.5 274.9 53.7 276.4 53.7 277.7 53.5 279.0 53.0 280.0 52.2 280.9 51.2 281.6 50.0 282.1 48.5 282.2 47.0 282.1 45.6 281.7 44.1 280.9 42.6 280.2 41.2 279.4 39.8 278.7 38.6 278.0 37.3 277.5 36.1 277.3 34.7 277.3 33.3 277.5 31.8 277.9 30.4 278.4 29.0 279.0 27.7 279.7 26.5 280.6 25.4 281.7 24.4 283.0 23.5 284.5 22.8 286.2 22.1 288.2 21.5 290.4 20.9 292.9 20.4 295.2 19.9 297.5 19.4 299.6 18.9 301.5 18.4 303.3 17.8 304.9 17.1 306.3 16.2 307.6 15.3 308.4 14.2 308.7 13.1 308.6 12.0 308.1 10.7 307.7 9.6 307.2 8.7 306.7 7.8 306.2 7.1 305.9 6.5 305.6 6.2 305.5 6.0 M201.0 6.0 201.2 6.5 201.5 7.6 202.1 9.3 202.8 11.5 203.6 13.5 204.5 15.4 205.4 17.0 206.4 18.5 207.2 20.0 207.8 21.6 208.3 23.3 208.5 25.0 208.4 26.6 207.9 28.1 207.0 29.4 205.8 30.7 204.7 31.8 203.9 32.9 203.2 34.0 202.7 35.0 202.6 36.1 202.8 37.4 203.5 38.7 204.4 40.2 205.4 41.7 206.4 43.1 207.4 44.6 208.4 46.1 209.3 47.6 210.0 49.0 210.6 50.5 211.1 52.0 211.8 53.4 212.6 54.8 213.7 56.0 214.9 57.3 216.1 58.2 217.2 58.8 218.3 59.1 219.2 59.1 220.2 58.9 221.0 58.6 221.8 58.0 222.6 57.3 223.3 56.7 224.1 56.2 224.8 55.8 225.5 55.6 226.0 55.8 226.2 56.4 226.2 57.4 226.0 58.9 226.0 60.1 226.4 61.1 227.1 61.9 228.1 62.4 229.0 62.9 229.9 63.5 230.7 64.2 231.4 64.9 231.8 65.8 231.8 66.8 231.4 67.9 230.7 69.1 230.0 70.4 229.4 71.8 228.8 73.2 228.3 74.7 228.2 76.0 228.3 77.3 228.7 78.4 229.5 79.3 229.9 80.4 230.0 81.7 229.8 83.0 229.3 84.5 228.8 85.9 228.2 87.3 227.5 88.6 226.7 89.8 225.9 90.9 224.9 91.7 223.8 92.4 222.5 92.9 221.4 93.4 220.4 94.0 219.6 94.7 218.8 95.5 218.0 95.9 217.2 96.0 216.2 95.8 215.3 95.3 214.4 95.2 213.7 95.5 213.1 96.1 212.6 97.1 212.0 98.2 211.4 99.3 210.7 100.4 210.0 101.7 209.1 102.6 208.1 103.2 207.0 103.5 205.8 103.5 204.7 103.7 203.7 104.0 202.8 104.6 202.1 105.3 201.5 106.0 201.1 106.6 200.9 107.1 200.8 107.6 200.8 108.4 200.9 109.6 201.1 111.1 201.5 112.9 201.4 114.8 200.9 116.6 200.1 118.5 198.8 120.3 197.5 122.0 196.1 123.6 194.7 124.9 193.1 126.2 192.2 127.6 191.9 129.3 192.2 131.3 193.1 133.4 193.5 135.4 193.4 137.3 192.7 139.0 191.4 140.5 190.3 142.1 189.3 143.7 188.4 145.3 187.6 147.0 187.4 148.6 187.7 150.1 188.5 151.6 190.0 153.0 190.6 154.4 190.4 155.7 189.3 157.0 187.5 158.2 186.5 159.0 186.3 159.3 187.0 159.2 188.5 158.5 189.1 158.4 188.8 158.7 187.6 159.4 185.4 160.7 183.5 162.0 181.8 163.6 180.4 165.3 179.1 167.1 177.8 168.7 176.2 169.9 174.5 170.8 172.7 171.5 171.4 172.4 170.8 173.6 170.8 175.2 171.5 177.0 172.2 178.6 172.9 180.0 173.8 181.2 174.7 182.1 174.9 183.2 174.2 184.4 172.8 185.8 170.7 187.3 168.6 188.6 166.6 189.7 164.7 190.5 162.8 191.2 161.3 191.9 160.1 192.9 159.2 193.9 158.5 195.2 158.2 196.3 158.2 197.3 158.5 198.1 159.1 198.9 159.6 199.4 159.8 199.8 160.0 200.0" fill="none" stroke="#000" stroke-width="1" stroke-linejoin="round" shape-rendering="crispEdges"/>
<g fill="none" stroke-width="0.72" shape-rendering="crispEdges">
<circle cx="407.0" cy="406.5" r="159.4" stroke="#dcdcdc"/>
<circle cx="407.0" cy="406.5" r="279.4" stroke="#dcdcdc"/>
<circle cx="407.0" cy="406.5" r="399.3" stroke="#dcdcdc"/>
<circle cx="407.0" cy="406.5" r="519.2" stroke="#dcdcdc"/>
</g>
<circle cx="407.0" cy="406.5" r="39.5" fill="none" stroke="#ee0020" stroke-width="1.2"/>
<g fill="none" stroke-width="1" stroke-dasharray="4 3" shape-rendering="crispEdges"><path d="M355.0 167.3L374.5 147.8 394.0 167.3 374.5 186.8z" stroke="#e00000"/><path d="M227.7 275.9L247.7 255.9 267.7 275.9 247.7 295.9z" stroke="#00c800"/><path d="M399.3 569.0L419.0 549.3 438.7 569.0 419.0 588.7z" stroke="#00c800"/><path d="M644.5 348.0L664.0 328.5 683.5 348.0 664.0 367.5z" stroke="#00c800"/><path d="M464.5 689.0L484.0 669.5 503.5 689.0 484.0 708.5z" stroke="#00c800"/></g>
<g stroke="#d8d8d8" stroke-width="1" fill="none"><path d="M315.6 108.300L355 147.700M188.400 216L233.900 261.600M604.500 290.600L648.300 334.200M359.900 510.100L403 550.200M427.600 632L453.500 657.900"/></g>
<defs>
<path id="n" d="M-1.5-4.5h3v1h-3zM-3.5-3.5h2v1h-1v1h-1zM1.5-3.5h2v2h-1v-1h-1zM-4.5-1.5h1v3h-1zM3.5-1.5h1v3h-1zM-3.5 1.5h1v1h1v1h-2zM2.5 1.5h1v2h-2v-1h1zM-1.5 3.5h3v1h-3zM-2.5-.5h5v1h-5z"/>
<path id="p" d="M-1.5-4.5h3v1h-3zM-3.5-3.5h2v1h-1v1h-1zM1.5-3.5h2v2h-1v-1h-1zM-4.5-1.5h1v3h-1zM3.5-1.5h1v3h-1zM-3.5 1.5h1v1h1v1h-2zM2.5 1.5h1v2h-2v-1h1zM-1.5 3.5h3v1h-3zM-2.5-.5h5v1h-5zM-.5-2.5h1v2h-1zM-.5 .5h1v2h-1z"/>
<path id="m" d="M-3.5-.5h7v1h-7z"/>
<path id="x" d="M-3.5-.5h7v1h-7zM-.5-3.5h1v3h-1zM-.5 .5h1v3h-1z"/>
</defs>
<g fill="#e86400" shape-rendering="crispEdges">
<use href="#n" x="417.5" y="214.5"/><use href="#n" x="404.5" y="229.5"/><use href="#n" x="409.5" y="228.5"/><use href="#m" x="422.5" y="215.5"/><use href="#p" x="419.5" y="242.5"/><use href="#n" x="420.5" y="228.5"/><use href="#n" x="427.5" y="222.5"/><use href="#x" x="410.5" y="237.5"/><use href="#p" x="410.5" y="231.5"/><use href="#n" x="419.5" y="213.5"/><use href="#n" x="411.5" y="261.5"/><use href="#n" x="414.5" y="223.5"/><use href="#p" x="411.5" y="208.5"/><use href="#p" x="418.5" y="236.5"/><use href="#n" x="414.5" y="219.5"/><use href="#n" x="425.5" y="210.5"/><use href="#n" x="412.5" y="226.5"/><use href="#p" x="416.5" y="215.5"/><use href="#m" x="407.5" y="243.5"/><use href="#m" x="408.5" y="242.5"/><use href="#n" x="422.5" y="234.5"/><use href="#p" x="415.5" y="223.5"/><use href="#n" x="413.5" y="230.5"/><use href="#p" x="415.5" y="228.5"/><use href="#n" x="423.5" y="222.5"/><use href="#p" x="415.5" y="215.5"/><use href="#n" x="415.5" y="211.5"/><use href="#n" x="421.5" y="256.5"/><use href="#n" x="427.5" y="224.5"/><use href="#n" x="412.5" y="210.5"/><use href="#n" x="418.5" y="205.5"/><use href="#n" x="415.5" y="203.5"/><use href="#n" x="427.5" y="215.5"/><use href="#m" x="427.5" y="227.5"/><use href="#p" x="409.5" y="217.5"/><use href="#n" x="405.5" y="212.5"/><use href="#m" x="415.5" y="227.5"/><use href="#p" x="419.5" y="208.5"/><use href="#p" x="418.5" y="222.5"/><use href="#n" x="420.5" y="212.5"/><use href="#n" x="408.5" y="218.5"/><use href="#n" x="417.5" y="210.5"/><use href="#n" x="425.5" y="218.5"/><use href="#p" x="416.5" y="203.5"/><use href="#x" x="412.5" y="235.5"/><use href="#n" x="413.5" y="242.5"/><use href="#p" x="416.5" y="214.5"/><use href="#n" x="413.5" y="227.5"/><use href="#m" x="425.5" y="202.5"/><use href="#p" x="424.5" y="225.5"/><use href="#p" x="429.5" y="227.5"/><use href="#n" x="426.5" y="233.5"/><use href="#n" x="422.5" y="207.5"/><use href="#p" x="420.5" y="212.5"/><use href="#p" x="416.5" y="230.5"/><use href="#n" x="422.5" y="219.5"/><use href="#n" x="425.5" y="232.5"/><use href="#n" x="417.5" y="236.5"/><use href="#m" x="427.5" y="229.5"/><use href="#n" x="419.5" y="216.5"/><use href="#n" x="428.5" y="231.5"/><use href="#n" x="413.5" y="190.5"/><use href="#p" x="414.5" y="230.5"/><use href="#m" x="421.5" y="213.5"/><use href="#n" x="339.5" y="231.5"/><use href="#n" x="327.5" y="239.5"/><use href="#n" x="331.5" y="234.5"/><use href="#p" x="332.5" y="224.5"/><use href="#p" x="324.5" y="233.5"/><use href="#n" x="332.5" y="224.5"/><use href="#n" x="336.5" y="234.5"/><use href="#p" x="320.5" y="232.5"/><use href="#n" x="341.5" y="226.5"/><use href="#p" x="341.5" y="227.5"/><use href="#p" x="337.5" y="240.5"/><use href="#n" x="324.5" y="227.5"/><use href="#n" x="336.5" y="225.5"/><use href="#p" x="324.5" y="227.5"/><use href="#n" x="334.5" y="227.5"/><use href="#p" x="341.5" y="224.5"/><use href="#x" x="335.5" y="233.5"/><use href="#n" x="330.5" y="235.5"/><use href="#n" x="324.5" y="237.5"/><use href="#n" x="675.5" y="374.5"/><use href="#n" x="678.5" y="355.5"/><use href="#n" x="677.5" y="367.5"/><use href="#m" x="675.5" y="361.5"/><use href="#p" x="675.5" y="362.5"/><use href="#n" x="678.5" y="367.5"/><use href="#n" x="682.5" y="376.5"/><use href="#n" x="456.5" y="621.5"/><use href="#p" x="458.5" y="616.5"/><use href="#p" x="456.5" y="635.5"/><use href="#n" x="438.5" y="625.5"/><use href="#p" x="442.5" y="625.5"/><use href="#p" x="436.5" y="626.5"/><use href="#p" x="467.5" y="629.5"/><use href="#p" x="445.5" y="642.5"/><use href="#n" x="465.5" y="646.5"/><use href="#n" x="472.5" y="610.5"/><use href="#n" x="442.5" y="620.5"/><use href="#n" x="461.5" y="635.5"/><use href="#n" x="451.5" y="638.5"/><use href="#p" x="435.5" y="625.5"/><use href="#x" x="458.5" y="609.5"/><use href="#p" x="451.5" y="618.5"/><use href="#n" x="441.5" y="629.5"/><use href="#n" x="451.5" y="646.5"/><use href="#p" x="448.5" y="643.5"/><use href="#n" x="449.5" y="623.5"/><use href="#m" x="450.5" y="624.5"/><use href="#p" x="467.5" y="636.5"/><use href="#p" x="448.5" y="611.5"/><use href="#n" x="470.5" y="626.5"/><use href="#n" x="462.5" y="613.5"/><use href="#n" x="443.5" y="643.5"/><use href="#n" x="466.5" y="624.5"/><use href="#n" x="458.5" y="632.5"/><use href="#p" x="464.5" y="646.5"/><use href="#n" x="469.5" y="618.5"/><use href="#p" x="460.5" y="638.5"/><use href="#n" x="466.5" y="627.5"/><use href="#n" x="440.5" y="611.5"/><use href="#p" x="466.5" y="621.5"/><use href="#p" x="460.5" y="633.5"/><use href="#p" x="447.5" y="610.5"/><use href="#n" x="449.5" y="623.5"/><use href="#x" x="463.5" y="625.5"/><use href="#n" x="460.5" y="623.5"/><use href="#m" x="466.5" y="611.5"/><use href="#n" x="443.5" y="640.5"/><use href="#p" x="454.5" y="623.5"/><use href="#p" x="475.5" y="638.5"/><use href="#n" x="446.5" y="638.5"/><use href="#n" x="481.5" y="646.5"/><use href="#n" x="461.5" y="637.5"/><use href="#n" x="458.5" y="636.5"/><use href="#p" x="444.5" y="631.5"/><use href="#n" x="458.5" y="641.5"/><use href="#n" x="445.5" y="615.5"/><use href="#p" x="451.5" y="612.5"/><use href="#n" x="453.5" y="616.5"/><use href="#n" x="469.5" y="624.5"/><use href="#n" x="439.5" y="624.5"/><use href="#p" x="457.5" y="625.5"/><use href="#p" x="462.5" y="631.5"/><use href="#n" x="460.5" y="618.5"/><use href="#n" x="459.5" y="633.5"/><use href="#n" x="463.5" y="636.5"/><use href="#n" x="477.5" y="636.5"/><use href="#n" x="446.5" y="615.5"/><use href="#p" x="469.5" y="641.5"/><use href="#n" x="449.5" y="620.5"/><use href="#n" x="477.5" y="605.5"/><use href="#n" x="483.5" y="622.5"/><use href="#n" x="460.5" y="626.5"/><use href="#n" x="450.5" y="609.5"/><use href="#n" x="448.5" y="647.5"/><use href="#n" x="452.5" y="624.5"/><use href="#n" x="466.5" y="627.5"/><use href="#p" x="461.5" y="625.5"/><use href="#n" x="455.5" y="625.5"/><use href="#n" x="447.5" y="621.5"/><use href="#n" x="443.5" y="630.5"/><use href="#n" x="468.5" y="638.5"/><use href="#p" x="498.5" y="604.5"/><use href="#p" x="484.5" y="608.5"/><use href="#n" x="477.5" y="615.5"/><use href="#n" x="498.5" y="605.5"/><use href="#m" x="498.5" y="605.5"/><use href="#n" x="478.5" y="608.5"/><use href="#m" x="491.5" y="604.5"/><use href="#n" x="481.5" y="607.5"/><use href="#n" x="493.5" y="617.5"/><use href="#p" x="494.5" y="603.5"/><use href="#n" x="496.5" y="606.5"/><use href="#p" x="261.5" y="39.5"/><use href="#x" x="247.5" y="67.5"/><use href="#n" x="277.5" y="131.5"/><use href="#n" x="439.5" y="14.5"/><use href="#p" x="427.5" y="28.5"/><use href="#p" x="450.5" y="31.5"/><use href="#n" x="448.5" y="46.5"/><use href="#n" x="485.5" y="170.5"/><use href="#n" x="502.5" y="171.5"/><use href="#p" x="508.5" y="185.5"/><use href="#n" x="514.5" y="181.5"/><use href="#n" x="652.5" y="11.5"/><use href="#n" x="733.5" y="25.5"/><use href="#n" x="356.5" y="304.5"/><use href="#n" x="366.5" y="307.5"/><use href="#n" x="379.5" y="345.5"/><use href="#x" x="406.5" y="390.5"/><use href="#n" x="748.5" y="369.5"/><use href="#n" x="31.5" y="512.5"/><use href="#p" x="40.5" y="543.5"/><use href="#n" x="648.5" y="426.5"/><use href="#n" x="437.5" y="728.5"/><use href="#p" x="421.5" y="733.5"/><use href="#n" x="460.5" y="748.5"/><use href="#p" x="462.5" y="780.5"/><use href="#x" x="446.5" y="669.5"/><use href="#p" x="728.5" y="664.5"/><use href="#n" x="792.5" y="677.5"/><use href="#n" x="746.5" y="763.5"/><use href="#n" x="614.5" y="396.5"/><use href="#n" x="621.5" y="401.5"/>
</g>
<g fill="#ee8400" shape-rendering="crispEdges">
<use href="#n" x="232.5" y="206.5"/><use href="#p" x="225.5" y="212.5"/><use href="#n" x="233.5" y="200.5"/><use href="#n" x="244.5" y="198.5"/><use href="#n" x="246.5" y="205.5"/><use href="#p" x="420.5" y="195.5"/><use href="#p" x="415.5" y="220.5"/><use href="#n" x="413.5" y="228.5"/><use href="#n" x="408.5" y="233.5"/><use href="#p" x="427.5" y="226.5"/><use href="#p" x="410.5" y="246.5"/><use href="#n" x="415.5" y="222.5"/><use href="#n" x="422.5" y="210.5"/><use href="#p" x="423.5" y="247.5"/><use href="#p" x="416.5" y="216.5"/><use href="#n" x="419.5" y="216.5"/><use href="#x" x="414.5" y="233.5"/><use href="#n" x="414.5" y="226.5"/><use href="#p" x="417.5" y="228.5"/><use href="#p" x="418.5" y="236.5"/><use href="#n" x="410.5" y="233.5"/><use href="#p" x="413.5" y="205.5"/><use href="#m" x="418.5" y="236.5"/><use href="#p" x="416.5" y="222.5"/><use href="#p" x="431.5" y="239.5"/><use href="#p" x="408.5" y="223.5"/><use href="#n" x="428.5" y="214.5"/><use href="#n" x="411.5" y="239.5"/><use href="#n" x="416.5" y="235.5"/><use href="#n" x="409.5" y="241.5"/><use href="#m" x="419.5" y="212.5"/><use href="#n" x="422.5" y="219.5"/><use href="#n" x="431.5" y="228.5"/><use href="#n" x="405.5" y="234.5"/><use href="#n" x="436.5" y="211.5"/><use href="#n" x="419.5" y="239.5"/><use href="#n" x="423.5" y="243.5"/><use href="#n" x="405.5" y="234.5"/><use href="#n" x="414.5" y="251.5"/><use href="#p" x="413.5" y="235.5"/><use href="#n" x="428.5" y="215.5"/><use href="#n" x="413.5" y="212.5"/><use href="#n" x="417.5" y="244.5"/><use href="#n" x="415.5" y="249.5"/><use href="#m" x="419.5" y="218.5"/><use href="#p" x="425.5" y="238.5"/><use href="#n" x="417.5" y="207.5"/><use href="#p" x="406.5" y="222.5"/><use href="#n" x="414.5" y="214.5"/><use href="#n" x="408.5" y="219.5"/><use href="#n" x="409.5" y="207.5"/><use href="#n" x="412.5" y="242.5"/><use href="#p" x="421.5" y="220.5"/><use href="#n" x="413.5" y="249.5"/><use href="#n" x="424.5" y="207.5"/><use href="#n" x="408.5" y="220.5"/><use href="#p" x="425.5" y="211.5"/><use href="#n" x="413.5" y="226.5"/><use href="#n" x="415.5" y="261.5"/><use href="#n" x="415.5" y="243.5"/><use href="#n" x="410.5" y="238.5"/><use href="#n" x="415.5" y="256.5"/><use href="#n" x="407.5" y="242.5"/><use href="#n" x="407.5" y="252.5"/><use href="#p" x="413.5" y="260.5"/><use href="#n" x="406.5" y="241.5"/><use href="#n" x="415.5" y="245.5"/><use href="#p" x="415.5" y="251.5"/><use href="#m" x="423.5" y="253.5"/><use href="#n" x="424.5" y="256.5"/><use href="#n" x="403.5" y="248.5"/><use href="#p" x="410.5" y="245.5"/><use href="#p" x="418.5" y="238.5"/><use href="#n" x="422.5" y="239.5"/><use href="#p" x="404.5" y="246.5"/><use href="#n" x="414.5" y="247.5"/><use href="#x" x="416.5" y="263.5"/><use href="#n" x="421.5" y="246.5"/><use href="#n" x="422.5" y="239.5"/><use href="#n" x="405.5" y="242.5"/><use href="#n" x="419.5" y="257.5"/><use href="#n" x="423.5" y="238.5"/><use href="#n" x="420.5" y="251.5"/><use href="#n" x="417.5" y="249.5"/><use href="#p" x="419.5" y="249.5"/><use href="#n" x="417.5" y="240.5"/><use href="#p" x="402.5" y="260.5"/><use href="#p" x="408.5" y="261.5"/><use href="#p" x="407.5" y="248.5"/><use href="#n" x="408.5" y="251.5"/><use href="#n" x="336.5" y="225.5"/><use href="#p" x="336.5" y="229.5"/><use href="#n" x="327.5" y="241.5"/><use href="#p" x="342.5" y="233.5"/><use href="#p" x="341.5" y="227.5"/><use href="#p" x="330.5" y="228.5"/><use href="#p" x="659.5" y="400.5"/><use href="#n" x="674.5" y="375.5"/><use href="#p" x="667.5" y="375.5"/><use href="#m" x="653.5" y="378.5"/><use href="#p" x="670.5" y="382.5"/><use href="#n" x="668.5" y="390.5"/><use href="#p" x="655.5" y="395.5"/><use href="#n" x="641.5" y="393.5"/><use href="#n" x="677.5" y="390.5"/><use href="#n" x="633.5" y="373.5"/><use href="#n" x="646.5" y="381.5"/><use href="#n" x="669.5" y="382.5"/><use href="#n" x="644.5" y="384.5"/><use href="#p" x="642.5" y="395.5"/><use href="#n" x="640.5" y="389.5"/><use href="#x" x="651.5" y="391.5"/><use href="#n" x="675.5" y="369.5"/><use href="#p" x="672.5" y="374.5"/><use href="#p" x="675.5" y="359.5"/><use href="#p" x="676.5" y="367.5"/><use href="#p" x="681.5" y="376.5"/><use href="#n" x="679.5" y="369.5"/><use href="#p" x="676.5" y="370.5"/><use href="#n" x="670.5" y="376.5"/><use href="#n" x="673.5" y="367.5"/><use href="#n" x="673.5" y="375.5"/><use href="#x" x="680.5" y="378.5"/><use href="#n" x="676.5" y="369.5"/><use href="#m" x="683.5" y="378.5"/><use href="#n" x="674.5" y="370.5"/><use href="#n" x="673.5" y="374.5"/><use href="#n" x="675.5" y="365.5"/><use href="#x" x="681.5" y="370.5"/><use href="#n" x="673.5" y="374.5"/><use href="#n" x="449.5" y="585.5"/><use href="#n" x="419.5" y="582.5"/><use href="#n" x="452.5" y="583.5"/><use href="#n" x="442.5" y="572.5"/><use href="#p" x="436.5" y="584.5"/><use href="#p" x="442.5" y="583.5"/><use href="#m" x="439.5" y="569.5"/><use href="#n" x="435.5" y="579.5"/><use href="#n" x="428.5" y="582.5"/><use href="#p" x="447.5" y="575.5"/><use href="#m" x="440.5" y="580.5"/><use href="#n" x="433.5" y="575.5"/><use href="#n" x="446.5" y="584.5"/><use href="#p" x="428.5" y="579.5"/><use href="#p" x="459.5" y="615.5"/><use href="#p" x="443.5" y="637.5"/><use href="#x" x="469.5" y="636.5"/><use href="#n" x="458.5" y="626.5"/><use href="#n" x="460.5" y="630.5"/><use href="#m" x="458.5" y="631.5"/><use href="#n" x="467.5" y="630.5"/><use href="#n" x="456.5" y="638.5"/><use href="#p" x="473.5" y="630.5"/><use href="#n" x="461.5" y="622.5"/><use href="#n" x="449.5" y="617.5"/><use href="#x" x="446.5" y="641.5"/><use href="#n" x="463.5" y="624.5"/><use href="#x" x="459.5" y="630.5"/><use href="#p" x="477.5" y="631.5"/><use href="#n" x="457.5" y="619.5"/><use href="#p" x="444.5" y="628.5"/><use href="#p" x="442.5" y="625.5"/><use href="#n" x="454.5" y="627.5"/><use href="#p" x="478.5" y="629.5"/><use href="#n" x="451.5" y="613.5"/><use href="#n" x="453.5" y="627.5"/><use href="#p" x="469.5" y="624.5"/><use href="#m" x="441.5" y="618.5"/><use href="#p" x="467.5" y="639.5"/><use href="#n" x="446.5" y="624.5"/><use href="#p" x="441.5" y="613.5"/><use href="#n" x="490.5" y="626.5"/><use href="#n" x="436.5" y="623.5"/><use href="#p" x="464.5" y="629.5"/><use href="#n" x="483.5" y="611.5"/><use href="#n" x="491.5" y="613.5"/><use href="#n" x="491.5" y="605.5"/><use href="#n" x="437.5" y="651.5"/><use href="#n" x="433.5" y="654.5"/><use href="#n" x="439.5" y="649.5"/><use href="#n" x="436.5" y="648.5"/><use href="#n" x="436.5" y="654.5"/><use href="#n" x="446.5" y="656.5"/><use href="#n" x="252.5" y="25.5"/><use href="#p" x="253.5" y="31.5"/><use href="#p" x="297.5" y="87.5"/><use href="#p" x="271.5" y="93.5"/><use href="#n" x="278.5" y="130.5"/><use href="#p" x="283.5" y="128.5"/><use href="#n" x="293.5" y="130.5"/><use href="#n" x="290.5" y="142.5"/><use href="#n" x="278.5" y="182.5"/><use href="#n" x="281.5" y="192.5"/><use href="#m" x="318.5" y="185.5"/><use href="#x" x="308.5" y="197.5"/><use href="#n" x="423.5" y="16.5"/><use href="#n" x="442.5" y="66.5"/><use href="#n" x="421.5" y="81.5"/><use href="#n" x="531.5" y="53.5"/><use href="#p" x="503.5" y="110.5"/><use href="#n" x="486.5" y="133.5"/><use href="#x" x="521.5" y="157.5"/><use href="#n" x="411.5" y="166.5"/><use href="#n" x="615.5" y="8.5"/><use href="#n" x="331.5" y="208.5"/><use href="#m" x="288.5" y="205.5"/><use href="#m" x="306.5" y="201.5"/><use href="#p" x="311.5" y="241.5"/><use href="#n" x="342.5" y="251.5"/><use href="#n" x="343.5" y="266.5"/><use href="#n" x="348.5" y="271.5"/><use href="#n" x="348.5" y="273.5"/><use href="#m" x="292.5" y="267.5"/><use href="#p" x="351.5" y="300.5"/><use href="#n" x="416.5" y="198.5"/><use href="#n" x="436.5" y="200.5"/><use href="#n" x="445.5" y="206.5"/><use href="#n" x="544.5" y="571.5"/><use href="#n" x="461.5" y="587.5"/><use href="#p" x="681.5" y="404.5"/><use href="#n" x="681.5" y="412.5"/><use href="#n" x="662.5" y="560.5"/><use href="#n" x="433.5" y="709.5"/><use href="#p" x="440.5" y="708.5"/><use href="#p" x="435.5" y="768.5"/><use href="#p" x="439.5" y="768.5"/><use href="#n" x="435.5" y="776.5"/><use href="#p" x="443.5" y="603.5"/><use href="#m" x="494.5" y="641.5"/><use href="#n" x="543.5" y="673.5"/><use href="#n" x="539.5" y="719.5"/><use href="#n" x="738.5" y="603.5"/><use href="#n" x="709.5" y="632.5"/><use href="#m" x="773.5" y="676.5"/><use href="#n" x="581.5" y="792.5"/><use href="#n" x="607.5" y="755.5"/><use href="#n" x="629.5" y="729.5"/><use href="#n" x="639.5" y="723.5"/><use href="#n" x="664.5" y="347.5"/><use href="#n" x="411.5" y="600.5"/><use href="#n" x="422.5" y="602.5"/><use href="#n" x="443.5" y="602.5"/>
</g>
<g fill="#f8a800" shape-rendering="crispEdges">
<use href="#n" x="411.5" y="108.5"/><use href="#n" x="410.5" y="106.5"/><use href="#p" x="410.5" y="124.5"/><use href="#n" x="408.5" y="125.5"/><use href="#n" x="405.5" y="98.5"/><use href="#p" x="405.5" y="111.5"/><use href="#n" x="409.5" y="117.5"/><use href="#n" x="404.5" y="126.5"/><use href="#p" x="405.5" y="115.5"/><use href="#n" x="409.5" y="132.5"/><use href="#n" x="407.5" y="138.5"/><use href="#m" x="409.5" y="116.5"/><use href="#n" x="406.5" y="117.5"/><use href="#n" x="409.5" y="119.5"/><use href="#m" x="240.5" y="213.5"/><use href="#x" x="244.5" y="210.5"/><use href="#x" x="242.5" y="202.5"/><use href="#n" x="244.5" y="192.5"/><use href="#n" x="232.5" y="220.5"/><use href="#n" x="248.5" y="206.5"/><use href="#n" x="235.5" y="196.5"/><use href="#p" x="243.5" y="210.5"/><use href="#p" x="230.5" y="186.5"/><use href="#x" x="238.5" y="213.5"/><use href="#p" x="227.5" y="196.5"/><use href="#n" x="253.5" y="215.5"/><use href="#p" x="258.5" y="188.5"/><use href="#n" x="245.5" y="202.5"/><use href="#p" x="220.5" y="205.5"/><use href="#p" x="239.5" y="204.5"/><use href="#n" x="232.5" y="209.5"/><use href="#n" x="236.5" y="196.5"/><use href="#p" x="232.5" y="220.5"/><use href="#n" x="234.5" y="195.5"/><use href="#n" x="237.5" y="201.5"/><use href="#p" x="234.5" y="204.5"/><use href="#p" x="248.5" y="200.5"/><use href="#n" x="244.5" y="206.5"/><use href="#n" x="225.5" y="201.5"/><use href="#n" x="230.5" y="217.5"/><use href="#n" x="416.5" y="211.5"/><use href="#n" x="427.5" y="229.5"/><use href="#n" x="422.5" y="224.5"/><use href="#n" x="420.5" y="225.5"/><use href="#p" x="422.5" y="218.5"/><use href="#p" x="403.5" y="237.5"/><use href="#n" x="414.5" y="226.5"/><use href="#n" x="418.5" y="223.5"/><use href="#p" x="412.5" y="225.5"/><use href="#n" x="411.5" y="237.5"/><use href="#n" x="411.5" y="226.5"/><use href="#n" x="412.5" y="218.5"/><use href="#p" x="419.5" y="208.5"/><use href="#n" x="411.5" y="223.5"/><use href="#n" x="418.5" y="233.5"/><use href="#n" x="426.5" y="228.5"/><use href="#n" x="411.5" y="226.5"/><use href="#n" x="414.5" y="231.5"/><use href="#n" x="427.5" y="237.5"/><use href="#p" x="406.5" y="217.5"/><use href="#n" x="406.5" y="221.5"/><use href="#p" x="416.5" y="221.5"/><use href="#n" x="403.5" y="232.5"/><use href="#p" x="404.5" y="234.5"/><use href="#p" x="425.5" y="239.5"/><use href="#n" x="419.5" y="231.5"/><use href="#x" x="418.5" y="201.5"/><use href="#x" x="412.5" y="240.5"/><use href="#n" x="420.5" y="233.5"/><use href="#n" x="427.5" y="219.5"/><use href="#n" x="408.5" y="222.5"/><use href="#p" x="425.5" y="228.5"/><use href="#n" x="425.5" y="214.5"/><use href="#n" x="423.5" y="250.5"/><use href="#n" x="407.5" y="249.5"/><use href="#p" x="425.5" y="253.5"/><use href="#n" x="419.5" y="261.5"/><use href="#n" x="419.5" y="245.5"/><use href="#p" x="408.5" y="251.5"/><use href="#n" x="405.5" y="249.5"/><use href="#n" x="416.5" y="248.5"/><use href="#n" x="410.5" y="251.5"/><use href="#m" x="416.5" y="240.5"/><use href="#p" x="429.5" y="258.5"/><use href="#p" x="420.5" y="247.5"/><use href="#n" x="422.5" y="247.5"/><use href="#n" x="423.5" y="242.5"/><use href="#n" x="418.5" y="252.5"/><use href="#n" x="414.5" y="249.5"/><use href="#p" x="406.5" y="247.5"/><use href="#n" x="406.5" y="255.5"/><use href="#n" x="413.5" y="245.5"/><use href="#p" x="419.5" y="251.5"/><use href="#p" x="417.5" y="244.5"/><use href="#p" x="423.5" y="253.5"/><use href="#p" x="425.5" y="243.5"/><use href="#n" x="407.5" y="242.5"/><use href="#n" x="411.5" y="245.5"/><use href="#n" x="413.5" y="243.5"/><use href="#n" x="409.5" y="261.5"/><use href="#p" x="415.5" y="249.5"/><use href="#p" x="411.5" y="255.5"/><use href="#p" x="420.5" y="241.5"/><use href="#n" x="405.5" y="240.5"/><use href="#n" x="432.5" y="205.5"/><use href="#n" x="440.5" y="226.5"/><use href="#n" x="427.5" y="224.5"/><use href="#n" x="430.5" y="197.5"/><use href="#p" x="432.5" y="212.5"/><use href="#n" x="422.5" y="205.5"/><use href="#n" x="404.5" y="308.5"/><use href="#n" x="413.5" y="269.5"/><use href="#n" x="419.5" y="281.5"/><use href="#n" x="408.5" y="290.5"/><use href="#p" x="411.5" y="301.5"/><use href="#p" x="407.5" y="289.5"/><use href="#n" x="424.5" y="281.5"/><use href="#p" x="398.5" y="302.5"/><use href="#p" x="422.5" y="284.5"/><use href="#p" x="398.5" y="294.5"/><use href="#n" x="424.5" y="285.5"/><use href="#p" x="405.5" y="317.5"/><use href="#n" x="395.5" y="301.5"/><use href="#p" x="423.5" y="275.5"/><use href="#n" x="411.5" y="292.5"/><use href="#n" x="389.5" y="299.5"/><use href="#x" x="408.5" y="285.5"/><use href="#x" x="410.5" y="300.5"/><use href="#n" x="419.5" y="274.5"/><use href="#n" x="415.5" y="284.5"/><use href="#m" x="401.5" y="285.5"/><use href="#x" x="391.5" y="300.5"/><use href="#m" x="404.5" y="310.5"/><use href="#n" x="407.5" y="293.5"/><use href="#p" x="416.5" y="290.5"/><use href="#n" x="419.5" y="289.5"/><use href="#p" x="668.5" y="402.5"/><use href="#n" x="648.5" y="392.5"/><use href="#m" x="659.5" y="377.5"/><use href="#n" x="661.5" y="373.5"/><use href="#n" x="666.5" y="388.5"/><use href="#n" x="654.5" y="372.5"/><use href="#n" x="658.5" y="375.5"/><use href="#n" x="668.5" y="381.5"/><use href="#n" x="662.5" y="364.5"/><use href="#p" x="666.5" y="382.5"/><use href="#n" x="634.5" y="399.5"/><use href="#n" x="663.5" y="382.5"/><use href="#n" x="635.5" y="372.5"/><use href="#p" x="650.5" y="380.5"/><use href="#n" x="646.5" y="391.5"/><use href="#n" x="644.5" y="375.5"/><use href="#n" x="657.5" y="374.5"/><use href="#x" x="672.5" y="393.5"/><use href="#n" x="670.5" y="368.5"/><use href="#p" x="646.5" y="381.5"/><use href="#n" x="664.5" y="384.5"/><use href="#p" x="657.5" y="369.5"/><use href="#n" x="655.5" y="378.5"/><use href="#n" x="633.5" y="380.5"/><use href="#n" x="664.5" y="399.5"/><use href="#m" x="646.5" y="394.5"/><use href="#n" x="664.5" y="378.5"/><use href="#n" x="673.5" y="385.5"/><use href="#p" x="651.5" y="374.5"/><use href="#n" x="660.5" y="363.5"/><use href="#m" x="673.5" y="392.5"/><use href="#p" x="648.5" y="379.5"/><use href="#p" x="647.5" y="373.5"/><use href="#n" x="648.5" y="373.5"/><use href="#n" x="646.5" y="377.5"/><use href="#n" x="677.5" y="382.5"/><use href="#n" x="645.5" y="391.5"/><use href="#p" x="668.5" y="396.5"/><use href="#p" x="635.5" y="397.5"/><use href="#n" x="647.5" y="389.5"/><use href="#n" x="658.5" y="403.5"/><use href="#n" x="667.5" y="376.5"/><use href="#n" x="644.5" y="390.5"/><use href="#p" x="660.5" y="383.5"/><use href="#p" x="653.5" y="369.5"/><use href="#n" x="645.5" y="392.5"/><use href="#n" x="649.5" y="395.5"/><use href="#n" x="663.5" y="384.5"/><use href="#n" x="653.5" y="382.5"/><use href="#n" x="661.5" y="390.5"/><use href="#n" x="672.5" y="392.5"/><use href="#n" x="662.5" y="402.5"/><use href="#n" x="649.5" y="387.5"/><use href="#p" x="678.5" y="400.5"/><use href="#n" x="651.5" y="390.5"/><use href="#p" x="649.5" y="377.5"/><use href="#n" x="650.5" y="385.5"/><use href="#n" x="413.5" y="516.5"/><use href="#n" x="414.5" y="507.5"/><use href="#n" x="421.5" y="502.5"/><use href="#p" x="421.5" y="528.5"/><use href="#n" x="416.5" y="529.5"/><use href="#p" x="415.5" y="505.5"/><use href="#n" x="417.5" y="528.5"/><use href="#n" x="412.5" y="517.5"/><use href="#n" x="420.5" y="522.5"/><use href="#n" x="419.5" y="514.5"/><use href="#n" x="428.5" y="499.5"/><use href="#n" x="426.5" y="509.5"/><use href="#n" x="430.5" y="524.5"/><use href="#n" x="416.5" y="503.5"/><use href="#x" x="406.5" y="519.5"/><use href="#n" x="413.5" y="530.5"/><use href="#n" x="433.5" y="519.5"/><use href="#x" x="428.5" y="520.5"/><use href="#n" x="434.5" y="532.5"/><use href="#p" x="414.5" y="521.5"/><use href="#p" x="430.5" y="527.5"/><use href="#n" x="412.5" y="535.5"/><use href="#n" x="425.5" y="514.5"/><use href="#n" x="431.5" y="507.5"/><use href="#n" x="417.5" y="515.5"/><use href="#n" x="411.5" y="516.5"/><use href="#p" x="423.5" y="518.5"/><use href="#p" x="428.5" y="533.5"/><use href="#n" x="413.5" y="515.5"/><use href="#n" x="419.5" y="509.5"/><use href="#p" x="422.5" y="510.5"/><use href="#p" x="434.5" y="513.5"/><use href="#x" x="419.5" y="517.5"/><use href="#n" x="424.5" y="523.5"/><use href="#p" x="424.5" y="524.5"/><use href="#n" x="416.5" y="520.5"/><use href="#p" x="427.5" y="521.5"/><use href="#n" x="427.5" y="522.5"/><use href="#n" x="414.5" y="520.5"/><use href="#n" x="419.5" y="542.5"/><use href="#p" x="425.5" y="520.5"/><use href="#n" x="424.5" y="538.5"/><use href="#p" x="424.5" y="521.5"/><use href="#x" x="414.5" y="518.5"/><use href="#n" x="415.5" y="515.5"/><use href="#p" x="413.5" y="525.5"/><use href="#n" x="417.5" y="522.5"/><use href="#n" x="417.5" y="521.5"/><use href="#p" x="445.5" y="553.5"/><use href="#n" x="443.5" y="539.5"/><use href="#n" x="446.5" y="540.5"/><use href="#n" x="444.5" y="541.5"/><use href="#p" x="440.5" y="557.5"/><use href="#n" x="437.5" y="551.5"/><use href="#n" x="445.5" y="552.5"/><use href="#m" x="439.5" y="547.5"/><use href="#n" x="445.5" y="539.5"/><use href="#n" x="448.5" y="545.5"/><use href="#n" x="441.5" y="540.5"/><use href="#n" x="445.5" y="529.5"/><use href="#n" x="445.5" y="541.5"/><use href="#n" x="445.5" y="553.5"/><use href="#n" x="445.5" y="541.5"/><use href="#n" x="440.5" y="534.5"/><use href="#p" x="449.5" y="541.5"/><use href="#n" x="449.5" y="529.5"/><use href="#p" x="443.5" y="568.5"/><use href="#n" x="452.5" y="547.5"/><use href="#p" x="444.5" y="544.5"/><use href="#n" x="443.5" y="557.5"/><use href="#n" x="439.5" y="567.5"/><use href="#n" x="425.5" y="584.5"/><use href="#n" x="449.5" y="575.5"/><use href="#n" x="428.5" y="579.5"/><use href="#p" x="429.5" y="574.5"/><use href="#n" x="449.5" y="579.5"/><use href="#n" x="428.5" y="578.5"/><use href="#n" x="442.5" y="579.5"/><use href="#p" x="431.5" y="575.5"/><use href="#x" x="448.5" y="588.5"/><use href="#p" x="436.5" y="580.5"/><use href="#p" x="443.5" y="588.5"/><use href="#p" x="431.5" y="579.5"/><use href="#n" x="432.5" y="590.5"/><use href="#n" x="440.5" y="582.5"/><use href="#n" x="438.5" y="575.5"/><use href="#n" x="447.5" y="590.5"/><use href="#p" x="432.5" y="584.5"/><use href="#n" x="449.5" y="583.5"/><use href="#p" x="448.5" y="588.5"/><use href="#n" x="513.5" y="738.5"/><use href="#p" x="481.5" y="719.5"/><use href="#p" x="504.5" y="713.5"/><use href="#x" x="486.5" y="708.5"/><use href="#p" x="500.5" y="743.5"/><use href="#n" x="522.5" y="689.5"/><use href="#n" x="528.5" y="702.5"/><use href="#p" x="526.5" y="690.5"/><use href="#p" x="525.5" y="690.5"/><use href="#p" x="521.5" y="695.5"/><use href="#p" x="526.5" y="708.5"/><use href="#x" x="32.5" y="22.5"/><use href="#p" x="140.5" y="127.5"/><use href="#p" x="271.5" y="93.5"/><use href="#p" x="262.5" y="145.5"/><use href="#p" x="202.5" y="173.5"/><use href="#p" x="207.5" y="172.5"/><use href="#p" x="562.5" y="31.5"/><use href="#n" x="432.5" y="212.5"/><use href="#n" x="439.5" y="214.5"/><use href="#n" x="780.5" y="441.5"/><use href="#n" x="771.5" y="448.5"/><use href="#n" x="792.5" y="452.5"/><use href="#n" x="740.5" y="459.5"/><use href="#n" x="651.5" y="544.5"/><use href="#p" x="101.5" y="673.5"/><use href="#n" x="227.5" y="705.5"/><use href="#n" x="61.5" y="746.5"/><use href="#n" x="512.5" y="646.5"/><use href="#n" x="677.5" y="632.5"/><use href="#n" x="679.5" y="629.5"/><use href="#n" x="543.5" y="673.5"/><use href="#p" x="689.5" y="667.5"/><use href="#n" x="736.5" y="696.5"/><use href="#p" x="689.5" y="738.5"/><use href="#n" x="569.5" y="699.5"/><use href="#n" x="572.5" y="707.5"/><use href="#p" x="574.5" y="708.5"/>
</g>
<g fill="#ffc400" shape-rendering="crispEdges">
<use href="#p" x="413.5" y="113.5"/><use href="#n" x="409.5" y="119.5"/><use href="#n" x="412.5" y="113.5"/><use href="#n" x="415.5" y="111.5"/><use href="#n" x="412.5" y="116.5"/><use href="#n" x="409.5" y="121.5"/><use href="#n" x="402.5" y="115.5"/><use href="#n" x="406.5" y="121.5"/><use href="#n" x="412.5" y="135.5"/><use href="#n" x="407.5" y="121.5"/><use href="#n" x="412.5" y="121.5"/><use href="#p" x="406.5" y="115.5"/><use href="#n" x="410.5" y="104.5"/><use href="#n" x="409.5" y="117.5"/><use href="#p" x="408.5" y="102.5"/><use href="#n" x="367.5" y="105.5"/><use href="#n" x="372.5" y="99.5"/><use href="#n" x="370.5" y="100.5"/><use href="#p" x="376.5" y="95.5"/><use href="#p" x="367.5" y="101.5"/><use href="#n" x="367.5" y="96.5"/><use href="#n" x="366.5" y="105.5"/><use href="#p" x="401.5" y="37.5"/><use href="#n" x="395.5" y="36.5"/><use href="#m" x="401.5" y="30.5"/><use href="#n" x="397.5" y="36.5"/><use href="#n" x="402.5" y="35.5"/><use href="#p" x="235.5" y="219.5"/><use href="#m" x="227.5" y="192.5"/><use href="#n" x="246.5" y="200.5"/><use href="#n" x="249.5" y="203.5"/><use href="#n" x="233.5" y="217.5"/><use href="#n" x="234.5" y="185.5"/><use href="#n" x="223.5" y="211.5"/><use href="#p" x="249.5" y="205.5"/><use href="#n" x="241.5" y="226.5"/><use href="#n" x="251.5" y="193.5"/><use href="#x" x="243.5" y="206.5"/><use href="#n" x="240.5" y="200.5"/><use href="#n" x="252.5" y="219.5"/><use href="#n" x="233.5" y="198.5"/><use href="#n" x="221.5" y="184.5"/><use href="#p" x="233.5" y="218.5"/><use href="#p" x="239.5" y="226.5"/><use href="#n" x="231.5" y="224.5"/><use href="#p" x="236.5" y="205.5"/><use href="#m" x="412.5" y="250.5"/><use href="#n" x="419.5" y="253.5"/><use href="#n" x="421.5" y="255.5"/><use href="#n" x="417.5" y="256.5"/><use href="#n" x="411.5" y="247.5"/><use href="#n" x="411.5" y="243.5"/><use href="#n" x="411.5" y="261.5"/><use href="#n" x="435.5" y="213.5"/><use href="#n" x="434.5" y="237.5"/><use href="#p" x="432.5" y="226.5"/><use href="#n" x="434.5" y="233.5"/><use href="#n" x="437.5" y="216.5"/><use href="#n" x="426.5" y="202.5"/><use href="#p" x="443.5" y="217.5"/><use href="#p" x="401.5" y="289.5"/><use href="#n" x="401.5" y="302.5"/><use href="#n" x="404.5" y="283.5"/><use href="#x" x="401.5" y="282.5"/><use href="#n" x="423.5" y="288.5"/><use href="#n" x="416.5" y="302.5"/><use href="#p" x="416.5" y="293.5"/><use href="#n" x="421.5" y="293.5"/><use href="#n" x="410.5" y="288.5"/><use href="#n" x="412.5" y="274.5"/><use href="#n" x="409.5" y="283.5"/><use href="#p" x="408.5" y="282.5"/><use href="#n" x="409.5" y="280.5"/><use href="#m" x="410.5" y="292.5"/><use href="#n" x="425.5" y="276.5"/><use href="#n" x="404.5" y="298.5"/><use href="#n" x="418.5" y="271.5"/><use href="#p" x="397.5" y="303.5"/><use href="#p" x="402.5" y="291.5"/><use href="#n" x="418.5" y="294.5"/><use href="#n" x="425.5" y="290.5"/><use href="#p" x="419.5" y="295.5"/><use href="#n" x="400.5" y="304.5"/><use href="#n" x="420.5" y="271.5"/><use href="#n" x="399.5" y="323.5"/><use href="#p" x="422.5" y="285.5"/><use href="#p" x="422.5" y="282.5"/><use href="#p" x="428.5" y="263.5"/><use href="#p" x="428.5" y="272.5"/><use href="#n" x="415.5" y="284.5"/><use href="#p" x="406.5" y="293.5"/><use href="#p" x="416.5" y="279.5"/><use href="#p" x="410.5" y="290.5"/><use href="#n" x="404.5" y="296.5"/><use href="#x" x="423.5" y="283.5"/><use href="#n" x="405.5" y="296.5"/><use href="#n" x="401.5" y="306.5"/><use href="#p" x="431.5" y="282.5"/><use href="#n" x="409.5" y="306.5"/><use href="#x" x="422.5" y="283.5"/><use href="#n" x="401.5" y="310.5"/><use href="#x" x="407.5" y="295.5"/><use href="#p" x="407.5" y="302.5"/><use href="#n" x="424.5" y="281.5"/><use href="#n" x="395.5" y="315.5"/><use href="#p" x="410.5" y="299.5"/><use href="#n" x="395.5" y="294.5"/><use href="#n" x="414.5" y="275.5"/><use href="#n" x="425.5" y="273.5"/><use href="#n" x="422.5" y="269.5"/><use href="#n" x="406.5" y="304.5"/><use href="#n" x="414.5" y="273.5"/><use href="#p" x="423.5" y="294.5"/><use href="#n" x="407.5" y="295.5"/><use href="#p" x="408.5" y="278.5"/><use href="#x" x="400.5" y="282.5"/><use href="#p" x="399.5" y="308.5"/><use href="#n" x="394.5" y="296.5"/><use href="#n" x="417.5" y="271.5"/><use href="#m" x="400.5" y="292.5"/><use href="#n" x="418.5" y="288.5"/><use href="#n" x="411.5" y="294.5"/><use href="#p" x="414.5" y="281.5"/><use href="#p" x="424.5" y="293.5"/><use href="#x" x="406.5" y="303.5"/><use href="#n" x="402.5" y="300.5"/><use href="#n" x="399.5" y="293.5"/><use href="#n" x="417.5" y="292.5"/><use href="#n" x="414.5" y="290.5"/><use href="#p" x="427.5" y="287.5"/><use href="#n" x="402.5" y="290.5"/><use href="#n" x="394.5" y="296.5"/><use href="#n" x="413.5" y="305.5"/><use href="#m" x="405.5" y="291.5"/><use href="#n" x="415.5" y="291.5"/><use href="#p" x="401.5" y="310.5"/><use href="#n" x="413.5" y="275.5"/><use href="#n" x="431.5" y="282.5"/><use href="#p" x="387.5" y="310.5"/><use href="#x" x="412.5" y="286.5"/><use href="#p" x="404.5" y="292.5"/><use href="#n" x="417.5" y="280.5"/><use href="#x" x="399.5" y="288.5"/><use href="#n" x="399.5" y="307.5"/><use href="#n" x="414.5" y="292.5"/><use href="#n" x="393.5" y="306.5"/><use href="#p" x="409.5" y="278.5"/><use href="#n" x="420.5" y="277.5"/><use href="#m" x="408.5" y="283.5"/><use href="#n" x="416.5" y="278.5"/><use href="#x" x="417.5" y="284.5"/><use href="#p" x="401.5" y="302.5"/><use href="#n" x="412.5" y="286.5"/><use href="#n" x="401.5" y="312.5"/><use href="#p" x="397.5" y="289.5"/><use href="#p" x="425.5" y="266.5"/><use href="#n" x="419.5" y="281.5"/><use href="#p" x="389.5" y="316.5"/><use href="#p" x="405.5" y="278.5"/><use href="#m" x="404.5" y="280.5"/><use href="#n" x="415.5" y="293.5"/><use href="#n" x="403.5" y="277.5"/><use href="#p" x="425.5" y="291.5"/><use href="#p" x="413.5" y="287.5"/><use href="#n" x="401.5" y="289.5"/><use href="#p" x="394.5" y="299.5"/><use href="#n" x="417.5" y="285.5"/><use href="#n" x="406.5" y="301.5"/><use href="#n" x="416.5" y="283.5"/><use href="#n" x="418.5" y="287.5"/><use href="#n" x="413.5" y="297.5"/><use href="#p" x="405.5" y="285.5"/><use href="#p" x="418.5" y="270.5"/><use href="#p" x="419.5" y="292.5"/><use href="#n" x="423.5" y="290.5"/><use href="#n" x="421.5" y="277.5"/><use href="#n" x="420.5" y="269.5"/><use href="#n" x="394.5" y="298.5"/><use href="#n" x="427.5" y="277.5"/><use href="#n" x="407.5" y="286.5"/><use href="#n" x="413.5" y="293.5"/><use href="#p" x="407.5" y="310.5"/><use href="#n" x="429.5" y="260.5"/><use href="#n" x="413.5" y="304.5"/><use href="#p" x="407.5" y="283.5"/><use href="#p" x="418.5" y="270.5"/><use href="#n" x="419.5" y="276.5"/><use href="#n" x="417.5" y="278.5"/><use href="#p" x="401.5" y="305.5"/><use href="#n" x="412.5" y="274.5"/><use href="#p" x="409.5" y="296.5"/><use href="#n" x="420.5" y="287.5"/><use href="#n" x="414.5" y="287.5"/><use href="#p" x="398.5" y="308.5"/><use href="#n" x="406.5" y="316.5"/><use href="#p" x="397.5" y="311.5"/><use href="#n" x="419.5" y="273.5"/><use href="#n" x="424.5" y="276.5"/><use href="#x" x="413.5" y="304.5"/><use href="#n" x="423.5" y="270.5"/><use href="#n" x="405.5" y="288.5"/><use href="#n" x="398.5" y="294.5"/><use href="#p" x="419.5" y="290.5"/><use href="#n" x="405.5" y="297.5"/><use href="#n" x="421.5" y="284.5"/><use href="#p" x="430.5" y="278.5"/><use href="#n" x="409.5" y="299.5"/><use href="#p" x="401.5" y="295.5"/><use href="#p" x="416.5" y="297.5"/><use href="#n" x="396.5" y="302.5"/><use href="#p" x="404.5" y="307.5"/><use href="#n" x="662.5" y="378.5"/><use href="#n" x="631.5" y="368.5"/><use href="#m" x="639.5" y="368.5"/><use href="#p" x="649.5" y="384.5"/><use href="#x" x="667.5" y="383.5"/><use href="#n" x="644.5" y="394.5"/><use href="#n" x="628.5" y="366.5"/><use href="#n" x="648.5" y="391.5"/><use href="#n" x="674.5" y="387.5"/><use href="#n" x="646.5" y="383.5"/><use href="#p" x="634.5" y="386.5"/><use href="#n" x="662.5" y="390.5"/><use href="#n" x="653.5" y="373.5"/><use href="#p" x="656.5" y="401.5"/><use href="#n" x="637.5" y="362.5"/><use href="#p" x="669.5" y="397.5"/><use href="#p" x="642.5" y="391.5"/><use href="#p" x="653.5" y="380.5"/><use href="#n" x="646.5" y="397.5"/><use href="#p" x="661.5" y="391.5"/><use href="#n" x="646.5" y="377.5"/><use href="#p" x="650.5" y="385.5"/><use href="#m" x="644.5" y="381.5"/><use href="#x" x="660.5" y="373.5"/><use href="#n" x="664.5" y="383.5"/><use href="#n" x="671.5" y="390.5"/><use href="#n" x="667.5" y="370.5"/><use href="#p" x="650.5" y="384.5"/><use href="#p" x="648.5" y="395.5"/><use href="#n" x="649.5" y="408.5"/><use href="#n" x="644.5" y="388.5"/><use href="#m" x="673.5" y="390.5"/><use href="#n" x="647.5" y="386.5"/><use href="#n" x="659.5" y="380.5"/><use href="#p" x="643.5" y="381.5"/><use href="#n" x="648.5" y="389.5"/><use href="#n" x="647.5" y="393.5"/><use href="#n" x="641.5" y="388.5"/><use href="#n" x="665.5" y="382.5"/><use href="#p" x="426.5" y="510.5"/><use href="#n" x="425.5" y="502.5"/><use href="#p" x="432.5" y="511.5"/><use href="#n" x="414.5" y="520.5"/><use href="#p" x="417.5" y="507.5"/><use href="#n" x="420.5" y="527.5"/><use href="#p" x="427.5" y="522.5"/><use href="#n" x="409.5" y="509.5"/><use href="#p" x="424.5" y="529.5"/><use href="#n" x="413.5" y="511.5"/><use href="#n" x="417.5" y="512.5"/><use href="#x" x="430.5" y="513.5"/><use href="#p" x="417.5" y="533.5"/><use href="#n" x="421.5" y="518.5"/><use href="#p" x="420.5" y="507.5"/><use href="#n" x="417.5" y="524.5"/><use href="#p" x="428.5" y="537.5"/><use href="#n" x="433.5" y="523.5"/><use href="#n" x="435.5" y="535.5"/><use href="#n" x="418.5" y="507.5"/><use href="#n" x="429.5" y="501.5"/><use href="#n" x="425.5" y="538.5"/><use href="#p" x="420.5" y="533.5"/><use href="#n" x="426.5" y="520.5"/><use href="#n" x="419.5" y="512.5"/><use href="#n" x="418.5" y="516.5"/><use href="#n" x="407.5" y="521.5"/><use href="#p" x="421.5" y="506.5"/><use href="#n" x="421.5" y="513.5"/><use href="#n" x="424.5" y="516.5"/><use href="#p" x="422.5" y="513.5"/><use href="#n" x="425.5" y="532.5"/><use href="#p" x="412.5" y="512.5"/><use href="#n" x="424.5" y="508.5"/><use href="#n" x="413.5" y="509.5"/><use href="#n" x="436.5" y="528.5"/><use href="#n" x="435.5" y="505.5"/><use href="#n" x="430.5" y="514.5"/><use href="#x" x="409.5" y="505.5"/><use href="#n" x="417.5" y="515.5"/><use href="#n" x="437.5" y="518.5"/><use href="#n" x="423.5" y="506.5"/><use href="#p" x="433.5" y="533.5"/><use href="#n" x="427.5" y="503.5"/><use href="#n" x="429.5" y="506.5"/><use href="#n" x="408.5" y="505.5"/><use href="#n" x="419.5" y="521.5"/><use href="#p" x="417.5" y="521.5"/><use href="#n" x="416.5" y="532.5"/><use href="#n" x="421.5" y="510.5"/><use href="#n" x="416.5" y="508.5"/><use href="#n" x="416.5" y="508.5"/><use href="#p" x="434.5" y="516.5"/><use href="#p" x="430.5" y="524.5"/><use href="#p" x="421.5" y="517.5"/><use href="#m" x="415.5" y="522.5"/><use href="#p" x="417.5" y="508.5"/><use href="#p" x="417.5" y="532.5"/><use href="#n" x="433.5" y="510.5"/><use href="#p" x="424.5" y="534.5"/><use href="#p" x="416.5" y="523.5"/><use href="#n" x="427.5" y="539.5"/><use href="#p" x="417.5" y="503.5"/><use href="#n" x="428.5" y="511.5"/><use href="#n" x="417.5" y="533.5"/><use href="#p" x="434.5" y="529.5"/><use href="#n" x="422.5" y="499.5"/><use href="#n" x="428.5" y="509.5"/><use href="#x" x="413.5" y="519.5"/><use href="#n" x="416.5" y="534.5"/><use href="#n" x="415.5" y="508.5"/><use href="#n" x="432.5" y="526.5"/><use href="#n" x="423.5" y="517.5"/><use href="#n" x="438.5" y="535.5"/><use href="#p" x="424.5" y="515.5"/><use href="#n" x="414.5" y="520.5"/><use href="#n" x="432.5" y="530.5"/><use href="#n" x="434.5" y="518.5"/><use href="#p" x="406.5" y="512.5"/><use href="#n" x="413.5" y="504.5"/><use href="#n" x="418.5" y="508.5"/><use href="#p" x="425.5" y="531.5"/><use href="#n" x="427.5" y="519.5"/><use href="#n" x="414.5" y="492.5"/><use href="#n" x="420.5" y="530.5"/><use href="#n" x="416.5" y="492.5"/><use href="#n" x="426.5" y="542.5"/><use href="#p" x="411.5" y="530.5"/><use href="#n" x="432.5" y="496.5"/><use href="#p" x="430.5" y="530.5"/><use href="#n" x="427.5" y="510.5"/><use href="#n" x="412.5" y="519.5"/><use href="#p" x="421.5" y="515.5"/><use href="#n" x="428.5" y="514.5"/><use href="#n" x="417.5" y="507.5"/><use href="#p" x="426.5" y="545.5"/><use href="#n" x="424.5" y="532.5"/><use href="#x" x="421.5" y="502.5"/><use href="#p" x="429.5" y="521.5"/><use href="#p" x="413.5" y="515.5"/><use href="#p" x="424.5" y="511.5"/><use href="#n" x="433.5" y="515.5"/><use href="#n" x="424.5" y="533.5"/><use href="#n" x="424.5" y="527.5"/><use href="#p" x="419.5" y="505.5"/><use href="#p" x="421.5" y="533.5"/><use href="#n" x="420.5" y="523.5"/><use href="#p" x="413.5" y="531.5"/><use href="#m" x="433.5" y="527.5"/><use href="#p" x="423.5" y="499.5"/><use href="#n" x="419.5" y="510.5"/><use href="#n" x="422.5" y="533.5"/><use href="#n" x="423.5" y="543.5"/><use href="#n" x="422.5" y="515.5"/><use href="#p" x="413.5" y="521.5"/><use href="#p" x="428.5" y="531.5"/><use href="#n" x="419.5" y="532.5"/><use href="#x" x="426.5" y="527.5"/><use href="#p" x="416.5" y="524.5"/><use href="#n" x="424.5" y="506.5"/><use href="#n" x="434.5" y="529.5"/><use href="#n" x="423.5" y="514.5"/><use href="#n" x="423.5" y="576.5"/><use href="#n" x="421.5" y="571.5"/><use href="#n" x="427.5" y="576.5"/><use href="#p" x="432.5" y="568.5"/><use href="#n" x="422.5" y="563.5"/><use href="#n" x="425.5" y="576.5"/><use href="#n" x="428.5" y="564.5"/><use href="#n" x="431.5" y="572.5"/><use href="#n" x="421.5" y="566.5"/><use href="#n" x="506.5" y="724.5"/><use href="#n" x="516.5" y="726.5"/><use href="#n" x="510.5" y="737.5"/><use href="#n" x="495.5" y="740.5"/><use href="#n" x="492.5" y="741.5"/><use href="#m" x="497.5" y="726.5"/><use href="#p" x="506.5" y="729.5"/><use href="#n" x="481.5" y="733.5"/><use href="#p" x="492.5" y="737.5"/><use href="#p" x="498.5" y="716.5"/><use href="#n" x="508.5" y="742.5"/><use href="#p" x="498.5" y="723.5"/><use href="#n" x="508.5" y="725.5"/><use href="#n" x="496.5" y="722.5"/><use href="#m" x="501.5" y="715.5"/><use href="#n" x="519.5" y="723.5"/><use href="#p" x="510.5" y="716.5"/><use href="#n" x="501.5" y="729.5"/><use href="#n" x="490.5" y="725.5"/><use href="#p" x="516.5" y="729.5"/><use href="#n" x="502.5" y="739.5"/><use href="#p" x="496.5" y="730.5"/><use href="#n" x="505.5" y="713.5"/><use href="#x" x="499.5" y="720.5"/><use href="#x" x="516.5" y="732.5"/><use href="#n" x="498.5" y="731.5"/><use href="#p" x="496.5" y="733.5"/><use href="#n" x="499.5" y="729.5"/><use href="#n" x="515.5" y="731.5"/><use href="#p" x="497.5" y="742.5"/><use href="#n" x="509.5" y="736.5"/><use href="#n" x="496.5" y="725.5"/><use href="#n" x="524.5" y="692.5"/><use href="#n" x="523.5" y="706.5"/><use href="#p" x="527.5" y="705.5"/><use href="#p" x="528.5" y="697.5"/><use href="#n" x="531.5" y="708.5"/><use href="#n" x="525.5" y="708.5"/><use href="#p" x="520.5" y="702.5"/><use href="#p" x="530.5" y="702.5"/><use href="#p" x="525.5" y="695.5"/><use href="#n" x="527.5" y="705.5"/><use href="#n" x="227.5" y="26.5"/><use href="#p" x="263.5" y="128.5"/><use href="#n" x="234.5" y="141.5"/><use href="#p" x="251.5" y="153.5"/><use href="#n" x="237.5" y="176.5"/><use href="#n" x="258.5" y="170.5"/><use href="#p" x="272.5" y="167.5"/><use href="#p" x="248.5" y="178.5"/><use href="#n" x="255.5" y="183.5"/><use href="#p" x="231.5" y="184.5"/><use href="#p" x="215.5" y="194.5"/><use href="#n" x="321.5" y="26.5"/><use href="#p" x="272.5" y="167.5"/><use href="#n" x="410.5" y="16.5"/><use href="#p" x="449.5" y="22.5"/><use href="#n" x="417.5" y="70.5"/><use href="#m" x="494.5" y="100.5"/><use href="#n" x="422.5" y="101.5"/><use href="#n" x="439.5" y="108.5"/><use href="#n" x="550.5" y="172.5"/><use href="#p" x="566.5" y="15.5"/><use href="#n" x="553.5" y="35.5"/><use href="#n" x="627.5" y="54.5"/><use href="#n" x="660.5" y="79.5"/><use href="#n" x="551.5" y="172.5"/><use href="#n" x="274.5" y="238.5"/><use href="#n" x="443.5" y="273.5"/><use href="#n" x="427.5" y="323.5"/><use href="#n" x="414.5" y="315.5"/><use href="#n" x="361.5" y="353.5"/><use href="#x" x="378.5" y="359.5"/><use href="#n" x="521.5" y="210.5"/><use href="#n" x="542.5" y="206.5"/><use href="#n" x="542.5" y="206.5"/><use href="#x" x="665.5" y="273.5"/><use href="#n" x="665.5" y="294.5"/><use href="#n" x="728.5" y="257.5"/><use href="#n" x="734.5" y="272.5"/><use href="#n" x="803.5" y="258.5"/><use href="#p" x="36.5" y="585.5"/><use href="#m" x="43.5" y="595.5"/><use href="#x" x="543.5" y="595.5"/><use href="#m" x="401.5" y="595.5"/><use href="#n" x="630.5" y="404.5"/><use href="#n" x="716.5" y="419.5"/><use href="#n" x="747.5" y="423.5"/><use href="#n" x="669.5" y="447.5"/><use href="#n" x="681.5" y="450.5"/><use href="#n" x="734.5" y="504.5"/><use href="#p" x="33.5" y="675.5"/><use href="#n" x="241.5" y="652.5"/><use href="#n" x="221.5" y="669.5"/><use href="#n" x="211.5" y="726.5"/><use href="#n" x="285.5" y="612.5"/><use href="#n" x="355.5" y="664.5"/><use href="#n" x="384.5" y="726.5"/><use href="#n" x="435.5" y="752.5"/><use href="#x" x="418.5" y="756.5"/><use href="#n" x="448.5" y="755.5"/><use href="#n" x="445.5" y="761.5"/><use href="#n" x="449.5" y="765.5"/><use href="#p" x="455.5" y="792.5"/><use href="#n" x="508.5" y="758.5"/><use href="#n" x="508.5" y="747.5"/><use href="#n" x="508.5" y="739.5"/><use href="#m" x="519.5" y="783.5"/><use href="#n" x="411.5" y="602.5"/><use href="#n" x="423.5" y="603.5"/><use href="#n" x="519.5" y="610.5"/><use href="#n" x="525.5" y="605.5"/><use href="#n" x="525.5" y="627.5"/><use href="#n" x="524.5" y="637.5"/><use href="#n" x="531.5" y="643.5"/><use href="#n" x="547.5" y="656.5"/><use href="#n" x="521.5" y="670.5"/><use href="#n" x="542.5" y="691.5"/><use href="#n" x="671.5" y="620.5"/><use href="#n" x="572.5" y="638.5"/><use href="#n" x="548.5" y="656.5"/><use href="#x" x="550.5" y="669.5"/><use href="#n" x="742.5" y="662.5"/><use href="#n" x="747.5" y="646.5"/><use href="#n" x="761.5" y="643.5"/><use href="#p" x="761.5" y="656.5"/><use href="#n" x="776.5" y="724.5"/><use href="#m" x="587.5" y="741.5"/><use href="#n" x="556.5" y="732.5"/><use href="#n" x="583.5" y="727.5"/><use href="#n" x="595.5" y="724.5"/><use href="#p" x="605.5" y="710.5"/><use href="#p" x="639.5" y="704.5"/><use href="#m" x="614.5" y="701.5"/><use href="#n" x="542.5" y="691.5"/><use href="#n" x="547.5" y="693.5"/><use href="#n" x="551.5" y="688.5"/><use href="#n" x="564.5" y="689.5"/><use href="#n" x="565.5" y="693.5"/><use href="#n" x="540.5" y="719.5"/><use href="#p" x="691.5" y="366.5"/><use href="#n" x="682.5" y="364.5"/><use href="#n" x="679.5" y="392.5"/><use href="#p" x="681.5" y="404.5"/><use href="#n" x="681.5" y="412.5"/><use href="#n" x="650.5" y="336.5"/><use href="#n" x="673.5" y="356.5"/>
</g>
<g fill="#ffdc00" shape-rendering="crispEdges">
<use href="#n" x="375.5" y="115.5"/><use href="#x" x="360.5" y="120.5"/><use href="#n" x="396.5" y="116.5"/><use href="#p" x="382.5" y="117.5"/><use href="#p" x="375.5" y="105.5"/><use href="#n" x="370.5" y="117.5"/><use href="#n" x="412.5" y="104.5"/><use href="#n" x="409.5" y="121.5"/><use href="#n" x="407.5" y="105.5"/><use href="#n" x="347.5" y="39.5"/><use href="#n" x="376.5" y="72.5"/><use href="#p" x="383.5" y="70.5"/><use href="#n" x="373.5" y="63.5"/><use href="#n" x="363.5" y="67.5"/><use href="#n" x="358.5" y="72.5"/><use href="#n" x="395.5" y="63.5"/><use href="#n" x="399.5" y="32.5"/><use href="#n" x="404.5" y="34.5"/><use href="#n" x="396.5" y="33.5"/><use href="#n" x="399.5" y="40.5"/><use href="#n" x="254.5" y="271.5"/><use href="#n" x="253.5" y="270.5"/><use href="#n" x="259.5" y="264.5"/><use href="#n" x="267.5" y="292.5"/><use href="#n" x="265.5" y="292.5"/><use href="#n" x="246.5" y="253.5"/><use href="#p" x="260.5" y="277.5"/><use href="#n" x="403.5" y="295.5"/><use href="#n" x="410.5" y="278.5"/><use href="#x" x="412.5" y="295.5"/><use href="#n" x="399.5" y="298.5"/><use href="#n" x="411.5" y="291.5"/><use href="#n" x="394.5" y="309.5"/><use href="#n" x="427.5" y="265.5"/><use href="#n" x="401.5" y="290.5"/><use href="#n" x="412.5" y="272.5"/><use href="#n" x="407.5" y="305.5"/><use href="#p" x="421.5" y="277.5"/><use href="#n" x="404.5" y="295.5"/><use href="#p" x="418.5" y="289.5"/><use href="#p" x="400.5" y="310.5"/><use href="#n" x="404.5" y="291.5"/><use href="#p" x="405.5" y="304.5"/><use href="#n" x="407.5" y="294.5"/><use href="#p" x="406.5" y="296.5"/><use href="#x" x="413.5" y="286.5"/><use href="#p" x="421.5" y="293.5"/><use href="#n" x="418.5" y="291.5"/><use href="#p" x="403.5" y="290.5"/><use href="#n" x="406.5" y="297.5"/><use href="#n" x="407.5" y="297.5"/><use href="#p" x="404.5" y="290.5"/><use href="#n" x="415.5" y="291.5"/><use href="#n" x="417.5" y="273.5"/><use href="#n" x="403.5" y="287.5"/><use href="#n" x="410.5" y="306.5"/><use href="#n" x="414.5" y="281.5"/><use href="#p" x="419.5" y="270.5"/><use href="#n" x="423.5" y="270.5"/><use href="#p" x="406.5" y="309.5"/><use href="#n" x="407.5" y="281.5"/><use href="#n" x="414.5" y="298.5"/><use href="#n" x="415.5" y="288.5"/><use href="#p" x="413.5" y="292.5"/><use href="#n" x="405.5" y="291.5"/><use href="#n" x="423.5" y="286.5"/><use href="#n" x="414.5" y="287.5"/><use href="#n" x="406.5" y="289.5"/><use href="#x" x="425.5" y="285.5"/><use href="#n" x="412.5" y="285.5"/><use href="#p" x="413.5" y="273.5"/><use href="#n" x="414.5" y="285.5"/><use href="#p" x="412.5" y="282.5"/><use href="#p" x="405.5" y="293.5"/><use href="#m" x="403.5" y="284.5"/><use href="#p" x="393.5" y="303.5"/><use href="#p" x="406.5" y="283.5"/><use href="#p" x="411.5" y="296.5"/><use href="#n" x="427.5" y="269.5"/><use href="#n" x="417.5" y="280.5"/><use href="#p" x="419.5" y="284.5"/><use href="#p" x="410.5" y="287.5"/><use href="#n" x="413.5" y="273.5"/><use href="#x" x="409.5" y="285.5"/><use href="#n" x="421.5" y="283.5"/><use href="#n" x="405.5" y="282.5"/><use href="#p" x="427.5" y="282.5"/><use href="#n" x="401.5" y="302.5"/><use href="#n" x="401.5" y="311.5"/><use href="#n" x="398.5" y="300.5"/><use href="#n" x="651.5" y="348.5"/><use href="#n" x="645.5" y="347.5"/><use href="#p" x="627.5" y="367.5"/><use href="#n" x="645.5" y="359.5"/><use href="#n" x="645.5" y="361.5"/><use href="#n" x="646.5" y="345.5"/><use href="#n" x="649.5" y="355.5"/><use href="#n" x="644.5" y="366.5"/><use href="#p" x="644.5" y="356.5"/><use href="#n" x="650.5" y="364.5"/><use href="#n" x="631.5" y="359.5"/><use href="#p" x="637.5" y="379.5"/><use href="#p" x="640.5" y="384.5"/><use href="#p" x="643.5" y="350.5"/><use href="#n" x="635.5" y="354.5"/><use href="#n" x="638.5" y="369.5"/><use href="#n" x="628.5" y="364.5"/><use href="#n" x="644.5" y="372.5"/><use href="#x" x="634.5" y="364.5"/><use href="#p" x="648.5" y="363.5"/><use href="#p" x="628.5" y="362.5"/><use href="#n" x="657.5" y="341.5"/><use href="#p" x="647.5" y="359.5"/><use href="#n" x="418.5" y="546.5"/><use href="#p" x="431.5" y="529.5"/><use href="#n" x="425.5" y="545.5"/><use href="#n" x="415.5" y="539.5"/><use href="#p" x="418.5" y="541.5"/><use href="#n" x="416.5" y="542.5"/><use href="#p" x="416.5" y="539.5"/><use href="#p" x="412.5" y="536.5"/><use href="#n" x="410.5" y="540.5"/><use href="#n" x="429.5" y="534.5"/><use href="#n" x="415.5" y="538.5"/><use href="#n" x="428.5" y="535.5"/><use href="#x" x="419.5" y="538.5"/><use href="#n" x="429.5" y="539.5"/><use href="#n" x="418.5" y="538.5"/><use href="#n" x="415.5" y="540.5"/><use href="#p" x="425.5" y="524.5"/><use href="#n" x="419.5" y="549.5"/><use href="#n" x="415.5" y="548.5"/><use href="#m" x="427.5" y="537.5"/><use href="#p" x="429.5" y="542.5"/><use href="#p" x="418.5" y="539.5"/><use href="#n" x="431.5" y="533.5"/><use href="#n" x="425.5" y="538.5"/><use href="#n" x="421.5" y="546.5"/><use href="#n" x="413.5" y="550.5"/><use href="#m" x="420.5" y="537.5"/><use href="#p" x="428.5" y="545.5"/><use href="#n" x="403.5" y="537.5"/><use href="#p" x="422.5" y="540.5"/><use href="#p" x="419.5" y="544.5"/><use href="#n" x="421.5" y="545.5"/><use href="#p" x="422.5" y="540.5"/><use href="#n" x="423.5" y="550.5"/><use href="#n" x="409.5" y="536.5"/><use href="#p" x="411.5" y="564.5"/><use href="#n" x="401.5" y="562.5"/><use href="#n" x="399.5" y="552.5"/><use href="#n" x="420.5" y="558.5"/><use href="#n" x="405.5" y="565.5"/><use href="#n" x="411.5" y="559.5"/><use href="#n" x="409.5" y="556.5"/><use href="#n" x="412.5" y="564.5"/><use href="#n" x="414.5" y="575.5"/><use href="#p" x="427.5" y="563.5"/><use href="#n" x="419.5" y="578.5"/><use href="#n" x="422.5" y="570.5"/><use href="#n" x="428.5" y="577.5"/><use href="#n" x="423.5" y="569.5"/><use href="#n" x="431.5" y="571.5"/><use href="#n" x="417.5" y="574.5"/><use href="#p" x="435.5" y="573.5"/><use href="#p" x="425.5" y="568.5"/><use href="#p" x="422.5" y="572.5"/><use href="#n" x="422.5" y="580.5"/><use href="#p" x="422.5" y="563.5"/><use href="#n" x="437.5" y="568.5"/><use href="#p" x="426.5" y="568.5"/><use href="#m" x="419.5" y="580.5"/><use href="#n" x="495.5" y="673.5"/><use href="#n" x="497.5" y="660.5"/><use href="#n" x="472.5" y="662.5"/><use href="#p" x="498.5" y="660.5"/><use href="#p" x="517.5" y="670.5"/><use href="#p" x="469.5" y="692.5"/><use href="#x" x="503.5" y="727.5"/><use href="#p" x="497.5" y="711.5"/><use href="#p" x="510.5" y="715.5"/><use href="#n" x="500.5" y="738.5"/><use href="#n" x="505.5" y="730.5"/><use href="#n" x="506.5" y="725.5"/><use href="#n" x="505.5" y="729.5"/><use href="#n" x="502.5" y="735.5"/><use href="#n" x="494.5" y="723.5"/><use href="#p" x="513.5" y="743.5"/><use href="#p" x="520.5" y="726.5"/><use href="#n" x="516.5" y="727.5"/><use href="#x" x="505.5" y="717.5"/><use href="#p" x="511.5" y="737.5"/><use href="#m" x="490.5" y="725.5"/><use href="#n" x="479.5" y="543.5"/><use href="#n" x="276.5" y="737.5"/><use href="#n" x="556.5" y="690.5"/><use href="#p" x="558.5" y="691.5"/>
</g>
<g fill="#ffff00" shape-rendering="crispEdges">
<use href="#x" x="397.5" y="120.5"/><use href="#n" x="379.5" y="112.5"/><use href="#n" x="371.5" y="123.5"/><use href="#n" x="388.5" y="99.5"/><use href="#n" x="377.5" y="115.5"/><use href="#n" x="390.5" y="119.5"/><use href="#p" x="392.5" y="99.5"/><use href="#n" x="389.5" y="123.5"/><use href="#n" x="394.5" y="128.5"/><use href="#n" x="371.5" y="104.5"/><use href="#n" x="397.5" y="106.5"/><use href="#p" x="372.5" y="117.5"/><use href="#p" x="392.5" y="117.5"/><use href="#p" x="384.5" y="106.5"/><use href="#n" x="374.5" y="124.5"/><use href="#n" x="391.5" y="131.5"/><use href="#n" x="402.5" y="116.5"/><use href="#n" x="372.5" y="112.5"/><use href="#n" x="376.5" y="112.5"/><use href="#p" x="373.5" y="108.5"/><use href="#p" x="389.5" y="117.5"/><use href="#n" x="374.5" y="121.5"/><use href="#p" x="386.5" y="121.5"/><use href="#n" x="399.5" y="124.5"/><use href="#n" x="405.5" y="131.5"/><use href="#p" x="377.5" y="107.5"/><use href="#n" x="389.5" y="118.5"/><use href="#n" x="407.5" y="109.5"/><use href="#p" x="392.5" y="119.5"/><use href="#n" x="408.5" y="134.5"/><use href="#p" x="386.5" y="121.5"/><use href="#n" x="392.5" y="119.5"/><use href="#p" x="350.5" y="115.5"/><use href="#n" x="396.5" y="104.5"/><use href="#n" x="394.5" y="142.5"/><use href="#n" x="367.5" y="125.5"/><use href="#n" x="380.5" y="111.5"/><use href="#n" x="392.5" y="118.5"/><use href="#x" x="402.5" y="111.5"/><use href="#n" x="380.5" y="101.5"/><use href="#n" x="385.5" y="131.5"/><use href="#n" x="394.5" y="130.5"/><use href="#n" x="414.5" y="124.5"/><use href="#n" x="407.5" y="109.5"/><use href="#n" x="393.5" y="120.5"/><use href="#p" x="387.5" y="128.5"/><use href="#n" x="406.5" y="126.5"/><use href="#x" x="393.5" y="118.5"/><use href="#p" x="379.5" y="121.5"/><use href="#n" x="392.5" y="124.5"/><use href="#n" x="393.5" y="117.5"/><use href="#n" x="377.5" y="124.5"/><use href="#n" x="399.5" y="103.5"/><use href="#m" x="377.5" y="114.5"/><use href="#n" x="388.5" y="122.5"/><use href="#p" x="387.5" y="113.5"/><use href="#n" x="386.5" y="106.5"/><use href="#p" x="373.5" y="114.5"/><use href="#p" x="390.5" y="112.5"/><use href="#m" x="364.5" y="100.5"/><use href="#n" x="375.5" y="116.5"/><use href="#n" x="386.5" y="105.5"/><use href="#n" x="393.5" y="120.5"/><use href="#p" x="387.5" y="107.5"/><use href="#n" x="384.5" y="110.5"/><use href="#n" x="365.5" y="111.5"/><use href="#m" x="376.5" y="113.5"/><use href="#n" x="389.5" y="133.5"/><use href="#n" x="391.5" y="135.5"/><use href="#m" x="391.5" y="118.5"/><use href="#p" x="392.5" y="108.5"/><use href="#n" x="382.5" y="132.5"/><use href="#n" x="371.5" y="128.5"/><use href="#p" x="382.5" y="128.5"/><use href="#n" x="393.5" y="118.5"/><use href="#n" x="392.5" y="106.5"/><use href="#n" x="370.5" y="125.5"/><use href="#n" x="385.5" y="105.5"/><use href="#m" x="375.5" y="121.5"/><use href="#m" x="393.5" y="130.5"/><use href="#p" x="393.5" y="108.5"/><use href="#n" x="398.5" y="122.5"/><use href="#p" x="394.5" y="154.5"/><use href="#n" x="398.5" y="134.5"/><use href="#n" x="391.5" y="146.5"/><use href="#p" x="375.5" y="150.5"/><use href="#n" x="414.5" y="158.5"/><use href="#n" x="390.5" y="148.5"/><use href="#n" x="411.5" y="140.5"/><use href="#n" x="396.5" y="148.5"/><use href="#n" x="394.5" y="142.5"/><use href="#p" x="397.5" y="144.5"/><use href="#n" x="400.5" y="150.5"/><use href="#p" x="379.5" y="145.5"/><use href="#n" x="389.5" y="151.5"/><use href="#p" x="405.5" y="148.5"/><use href="#n" x="409.5" y="146.5"/><use href="#n" x="378.5" y="150.5"/><use href="#n" x="391.5" y="147.5"/><use href="#n" x="405.5" y="149.5"/><use href="#p" x="396.5" y="150.5"/><use href="#p" x="388.5" y="157.5"/><use href="#n" x="389.5" y="144.5"/><use href="#p" x="394.5" y="148.5"/><use href="#n" x="407.5" y="145.5"/><use href="#n" x="396.5" y="150.5"/><use href="#n" x="387.5" y="143.5"/><use href="#p" x="395.5" y="142.5"/><use href="#n" x="386.5" y="141.5"/><use href="#p" x="390.5" y="151.5"/><use href="#n" x="401.5" y="155.5"/><use href="#n" x="405.5" y="140.5"/><use href="#p" x="410.5" y="149.5"/><use href="#p" x="397.5" y="149.5"/><use href="#p" x="373.5" y="183.5"/><use href="#p" x="385.5" y="182.5"/><use href="#n" x="383.5" y="192.5"/><use href="#n" x="378.5" y="179.5"/><use href="#m" x="391.5" y="179.5"/><use href="#n" x="398.5" y="164.5"/><use href="#n" x="374.5" y="181.5"/><use href="#p" x="385.5" y="174.5"/><use href="#p" x="365.5" y="174.5"/><use href="#m" x="399.5" y="192.5"/><use href="#n" x="381.5" y="184.5"/><use href="#n" x="396.5" y="174.5"/><use href="#n" x="382.5" y="187.5"/><use href="#p" x="387.5" y="182.5"/><use href="#n" x="385.5" y="185.5"/><use href="#n" x="387.5" y="179.5"/><use href="#n" x="360.5" y="183.5"/><use href="#n" x="380.5" y="168.5"/><use href="#n" x="388.5" y="182.5"/><use href="#p" x="386.5" y="177.5"/><use href="#n" x="386.5" y="152.5"/><use href="#n" x="385.5" y="179.5"/><use href="#p" x="375.5" y="171.5"/><use href="#p" x="409.5" y="181.5"/><use href="#n" x="384.5" y="188.5"/><use href="#n" x="377.5" y="179.5"/><use href="#p" x="367.5" y="170.5"/><use href="#x" x="369.5" y="186.5"/><use href="#n" x="375.5" y="179.5"/><use href="#n" x="396.5" y="187.5"/><use href="#p" x="395.5" y="179.5"/><use href="#n" x="389.5" y="168.5"/><use href="#n" x="387.5" y="173.5"/><use href="#x" x="365.5" y="180.5"/><use href="#x" x="399.5" y="168.5"/><use href="#n" x="352.5" y="180.5"/><use href="#n" x="370.5" y="183.5"/><use href="#n" x="401.5" y="175.5"/><use href="#n" x="378.5" y="170.5"/><use href="#n" x="381.5" y="164.5"/><use href="#n" x="385.5" y="182.5"/><use href="#n" x="369.5" y="182.5"/><use href="#p" x="386.5" y="169.5"/><use href="#n" x="397.5" y="180.5"/><use href="#n" x="366.5" y="185.5"/><use href="#n" x="397.5" y="173.5"/><use href="#n" x="408.5" y="178.5"/><use href="#n" x="406.5" y="169.5"/><use href="#n" x="411.5" y="170.5"/><use href="#n" x="401.5" y="172.5"/><use href="#n" x="409.5" y="173.5"/><use href="#n" x="401.5" y="167.5"/><use href="#n" x="408.5" y="179.5"/><use href="#n" x="405.5" y="176.5"/><use href="#n" x="403.5" y="173.5"/><use href="#n" x="409.5" y="172.5"/><use href="#n" x="402.5" y="179.5"/><use href="#p" x="402.5" y="177.5"/><use href="#n" x="400.5" y="177.5"/><use href="#m" x="403.5" y="175.5"/><use href="#n" x="406.5" y="175.5"/><use href="#n" x="410.5" y="173.5"/><use href="#n" x="403.5" y="179.5"/><use href="#n" x="406.5" y="171.5"/><use href="#p" x="369.5" y="66.5"/><use href="#p" x="383.5" y="86.5"/><use href="#n" x="398.5" y="96.5"/><use href="#n" x="407.5" y="67.5"/><use href="#n" x="413.5" y="86.5"/><use href="#p" x="373.5" y="45.5"/><use href="#p" x="404.5" y="72.5"/><use href="#n" x="386.5" y="64.5"/><use href="#n" x="369.5" y="65.5"/><use href="#x" x="397.5" y="69.5"/><use href="#p" x="364.5" y="82.5"/><use href="#n" x="366.5" y="60.5"/><use href="#n" x="378.5" y="68.5"/><use href="#n" x="361.5" y="71.5"/><use href="#n" x="386.5" y="56.5"/><use href="#n" x="372.5" y="70.5"/><use href="#p" x="349.5" y="70.5"/><use href="#x" x="369.5" y="88.5"/><use href="#n" x="371.5" y="62.5"/><use href="#p" x="392.5" y="54.5"/><use href="#p" x="366.5" y="55.5"/><use href="#x" x="347.5" y="59.5"/><use href="#p" x="409.5" y="65.5"/><use href="#n" x="401.5" y="61.5"/><use href="#n" x="369.5" y="68.5"/><use href="#p" x="351.5" y="60.5"/><use href="#p" x="373.5" y="80.5"/><use href="#n" x="362.5" y="66.5"/><use href="#p" x="372.5" y="66.5"/><use href="#x" x="364.5" y="68.5"/><use href="#n" x="360.5" y="82.5"/><use href="#p" x="360.5" y="60.5"/><use href="#n" x="379.5" y="49.5"/><use href="#n" x="351.5" y="67.5"/><use href="#n" x="403.5" y="36.5"/><use href="#p" x="368.5" y="73.5"/><use href="#n" x="406.5" y="57.5"/><use href="#n" x="412.5" y="64.5"/><use href="#p" x="388.5" y="62.5"/><use href="#n" x="375.5" y="51.5"/><use href="#p" x="348.5" y="68.5"/><use href="#n" x="380.5" y="81.5"/><use href="#n" x="340.5" y="79.5"/><use href="#n" x="364.5" y="66.5"/><use href="#p" x="400.5" y="79.5"/><use href="#p" x="375.5" y="58.5"/><use href="#n" x="351.5" y="58.5"/><use href="#n" x="255.5" y="270.5"/><use href="#p" x="261.5" y="270.5"/><use href="#p" x="267.5" y="287.5"/><use href="#n" x="242.5" y="274.5"/><use href="#n" x="242.5" y="251.5"/><use href="#n" x="253.5" y="302.5"/><use href="#n" x="248.5" y="297.5"/><use href="#n" x="238.5" y="260.5"/><use href="#n" x="247.5" y="264.5"/><use href="#p" x="235.5" y="276.5"/><use href="#p" x="263.5" y="270.5"/><use href="#n" x="246.5" y="249.5"/><use href="#n" x="247.5" y="276.5"/><use href="#n" x="261.5" y="275.5"/><use href="#n" x="232.5" y="253.5"/><use href="#p" x="249.5" y="280.5"/><use href="#n" x="264.5" y="280.5"/><use href="#n" x="252.5" y="295.5"/><use href="#p" x="237.5" y="267.5"/><use href="#n" x="240.5" y="260.5"/><use href="#p" x="253.5" y="266.5"/><use href="#n" x="246.5" y="276.5"/><use href="#n" x="248.5" y="270.5"/><use href="#n" x="438.5" y="220.5"/><use href="#n" x="633.5" y="368.5"/><use href="#n" x="647.5" y="361.5"/><use href="#n" x="644.5" y="357.5"/><use href="#p" x="639.5" y="348.5"/><use href="#p" x="622.5" y="373.5"/><use href="#n" x="650.5" y="353.5"/><use href="#n" x="640.5" y="363.5"/><use href="#n" x="646.5" y="370.5"/><use href="#n" x="646.5" y="353.5"/><use href="#x" x="631.5" y="371.5"/><use href="#n" x="647.5" y="351.5"/><use href="#m" x="632.5" y="352.5"/><use href="#n" x="637.5" y="371.5"/><use href="#p" x="424.5" y="546.5"/><use href="#p" x="425.5" y="542.5"/><use href="#n" x="424.5" y="544.5"/><use href="#n" x="425.5" y="534.5"/><use href="#n" x="414.5" y="538.5"/><use href="#n" x="417.5" y="547.5"/><use href="#p" x="428.5" y="534.5"/><use href="#x" x="420.5" y="539.5"/><use href="#n" x="421.5" y="536.5"/><use href="#n" x="424.5" y="535.5"/><use href="#p" x="422.5" y="536.5"/><use href="#n" x="422.5" y="539.5"/><use href="#p" x="423.5" y="540.5"/><use href="#p" x="417.5" y="530.5"/><use href="#n" x="426.5" y="540.5"/><use href="#p" x="413.5" y="537.5"/><use href="#p" x="430.5" y="543.5"/><use href="#n" x="427.5" y="535.5"/><use href="#n" x="414.5" y="540.5"/><use href="#n" x="418.5" y="524.5"/><use href="#n" x="426.5" y="527.5"/><use href="#p" x="419.5" y="539.5"/><use href="#n" x="419.5" y="543.5"/><use href="#x" x="419.5" y="534.5"/><use href="#n" x="424.5" y="545.5"/><use href="#n" x="416.5" y="540.5"/><use href="#m" x="414.5" y="534.5"/><use href="#p" x="416.5" y="540.5"/><use href="#n" x="416.5" y="542.5"/><use href="#p" x="417.5" y="534.5"/><use href="#x" x="427.5" y="542.5"/><use href="#p" x="422.5" y="540.5"/><use href="#n" x="420.5" y="531.5"/><use href="#n" x="401.5" y="552.5"/><use href="#n" x="395.5" y="554.5"/><use href="#p" x="400.5" y="553.5"/><use href="#x" x="407.5" y="564.5"/><use href="#p" x="405.5" y="556.5"/><use href="#n" x="403.5" y="543.5"/><use href="#p" x="408.5" y="565.5"/><use href="#n" x="424.5" y="569.5"/><use href="#p" x="425.5" y="573.5"/><use href="#n" x="425.5" y="563.5"/><use href="#n" x="425.5" y="575.5"/><use href="#n" x="426.5" y="568.5"/><use href="#n" x="435.5" y="562.5"/><use href="#n" x="435.5" y="576.5"/><use href="#n" x="419.5" y="577.5"/><use href="#n" x="429.5" y="573.5"/><use href="#n" x="486.5" y="661.5"/><use href="#n" x="484.5" y="656.5"/><use href="#p" x="484.5" y="658.5"/><use href="#p" x="480.5" y="664.5"/><use href="#n" x="471.5" y="666.5"/><use href="#m" x="500.5" y="667.5"/><use href="#n" x="481.5" y="659.5"/><use href="#n" x="505.5" y="665.5"/><use href="#p" x="481.5" y="668.5"/><use href="#n" x="510.5" y="669.5"/><use href="#n" x="478.5" y="660.5"/><use href="#p" x="506.5" y="655.5"/><use href="#p" x="503.5" y="659.5"/><use href="#n" x="498.5" y="664.5"/><use href="#n" x="499.5" y="659.5"/><use href="#n" x="509.5" y="662.5"/><use href="#n" x="505.5" y="656.5"/><use href="#n" x="497.5" y="663.5"/><use href="#p" x="482.5" y="670.5"/><use href="#n" x="513.5" y="674.5"/><use href="#n" x="498.5" y="658.5"/><use href="#n" x="508.5" y="666.5"/><use href="#n" x="493.5" y="654.5"/><use href="#n" x="503.5" y="654.5"/><use href="#n" x="482.5" y="669.5"/><use href="#p" x="504.5" y="665.5"/><use href="#n" x="499.5" y="662.5"/><use href="#n" x="494.5" y="654.5"/><use href="#n" x="494.5" y="669.5"/><use href="#p" x="490.5" y="664.5"/><use href="#p" x="468.5" y="663.5"/><use href="#m" x="506.5" y="659.5"/><use href="#n" x="487.5" y="659.5"/><use href="#x" x="502.5" y="658.5"/><use href="#p" x="505.5" y="671.5"/><use href="#n" x="492.5" y="646.5"/><use href="#n" x="487.5" y="661.5"/><use href="#p" x="472.5" y="649.5"/><use href="#n" x="496.5" y="664.5"/><use href="#p" x="477.5" y="695.5"/><use href="#n" x="469.5" y="676.5"/><use href="#p" x="471.5" y="696.5"/><use href="#n" x="471.5" y="695.5"/><use href="#n" x="482.5" y="693.5"/><use href="#p" x="483.5" y="675.5"/><use href="#p" x="483.5" y="680.5"/><use href="#n" x="473.5" y="686.5"/><use href="#n" x="488.5" y="703.5"/><use href="#p" x="461.5" y="689.5"/><use href="#x" x="474.5" y="698.5"/><use href="#n" x="479.5" y="693.5"/><use href="#p" x="476.5" y="682.5"/><use href="#n" x="479.5" y="675.5"/><use href="#n" x="481.5" y="689.5"/><use href="#n" x="463.5" y="698.5"/><use href="#n" x="479.5" y="685.5"/><use href="#n" x="472.5" y="678.5"/><use href="#n" x="486.5" y="695.5"/><use href="#n" x="473.5" y="685.5"/><use href="#n" x="474.5" y="689.5"/><use href="#p" x="473.5" y="693.5"/><use href="#p" x="468.5" y="703.5"/><use href="#n" x="480.5" y="673.5"/><use href="#p" x="482.5" y="703.5"/><use href="#n" x="483.5" y="681.5"/><use href="#n" x="456.5" y="697.5"/><use href="#n" x="483.5" y="688.5"/><use href="#p" x="472.5" y="686.5"/><use href="#n" x="475.5" y="673.5"/><use href="#n" x="486.5" y="682.5"/><use href="#m" x="466.5" y="684.5"/><use href="#n" x="471.5" y="694.5"/><use href="#p" x="470.5" y="692.5"/><use href="#n" x="460.5" y="683.5"/><use href="#m" x="485.5" y="686.5"/><use href="#n" x="476.5" y="687.5"/><use href="#m" x="468.5" y="693.5"/><use href="#x" x="483.5" y="679.5"/><use href="#n" x="468.5" y="706.5"/><use href="#p" x="464.5" y="682.5"/><use href="#n" x="472.5" y="691.5"/><use href="#p" x="464.5" y="699.5"/><use href="#n" x="470.5" y="676.5"/><use href="#n" x="477.5" y="674.5"/><use href="#n" x="479.5" y="683.5"/><use href="#n" x="484.5" y="680.5"/><use href="#n" x="493.5" y="709.5"/><use href="#n" x="482.5" y="686.5"/><use href="#n" x="465.5" y="699.5"/><use href="#n" x="456.5" y="682.5"/><use href="#p" x="471.5" y="673.5"/><use href="#n" x="473.5" y="671.5"/><use href="#n" x="475.5" y="704.5"/><use href="#n" x="460.5" y="692.5"/><use href="#n" x="31.5" y="158.5"/><use href="#n" x="160.5" y="194.5"/><use href="#n" x="358.5" y="38.5"/><use href="#p" x="351.5" y="51.5"/><use href="#p" x="325.5" y="67.5"/><use href="#n" x="336.5" y="67.5"/><use href="#p" x="348.5" y="77.5"/><use href="#n" x="328.5" y="93.5"/><use href="#n" x="314.5" y="115.5"/><use href="#p" x="424.5" y="47.5"/><use href="#p" x="530.5" y="45.5"/><use href="#p" x="413.5" y="94.5"/><use href="#n" x="514.5" y="113.5"/><use href="#n" x="449.5" y="124.5"/><use href="#p" x="509.5" y="128.5"/><use href="#n" x="448.5" y="140.5"/><use href="#n" x="457.5" y="139.5"/><use href="#n" x="437.5" y="142.5"/><use href="#n" x="437.5" y="147.5"/><use href="#n" x="455.5" y="153.5"/><use href="#n" x="417.5" y="147.5"/><use href="#n" x="443.5" y="164.5"/><use href="#n" x="470.5" y="169.5"/><use href="#p" x="442.5" y="183.5"/><use href="#n" x="474.5" y="183.5"/><use href="#n" x="463.5" y="191.5"/><use href="#n" x="447.5" y="194.5"/><use href="#x" x="412.5" y="181.5"/><use href="#n" x="567.5" y="46.5"/><use href="#n" x="667.5" y="68.5"/><use href="#n" x="585.5" y="108.5"/><use href="#p" x="271.5" y="282.5"/><use href="#n" x="274.5" y="294.5"/><use href="#n" x="272.5" y="301.5"/><use href="#p" x="465.5" y="231.5"/><use href="#p" x="441.5" y="234.5"/><use href="#n" x="428.5" y="268.5"/><use href="#n" x="733.5" y="307.5"/><use href="#n" x="630.5" y="327.5"/><use href="#p" x="634.5" y="334.5"/><use href="#n" x="493.5" y="419.5"/><use href="#n" x="736.5" y="441.5"/><use href="#p" x="637.5" y="464.5"/><use href="#n" x="625.5" y="555.5"/><use href="#n" x="672.5" y="559.5"/><use href="#n" x="624.5" y="580.5"/><use href="#n" x="702.5" y="590.5"/><use href="#p" x="117.5" y="646.5"/><use href="#n" x="66.5" y="677.5"/><use href="#n" x="190.5" y="742.5"/><use href="#n" x="414.5" y="709.5"/><use href="#n" x="416.5" y="717.5"/><use href="#p" x="494.5" y="755.5"/><use href="#n" x="511.5" y="790.5"/><use href="#n" x="543.5" y="779.5"/><use href="#n" x="608.5" y="606.5"/><use href="#m" x="665.5" y="602.5"/><use href="#p" x="663.5" y="632.5"/><use href="#n" x="654.5" y="663.5"/><use href="#n" x="647.5" y="672.5"/><use href="#n" x="745.5" y="694.5"/><use href="#p" x="705.5" y="776.5"/><use href="#p" x="697.5" y="785.5"/><use href="#n" x="666.5" y="778.5"/><use href="#n" x="639.5" y="797.5"/><use href="#n" x="598.5" y="798.5"/><use href="#n" x="543.5" y="779.5"/><use href="#n" x="586.5" y="754.5"/><use href="#n" x="653.5" y="730.5"/><use href="#p" x="674.5" y="347.5"/>
</g>
<g fill="#00e8e8" shape-rendering="crispEdges">
<use href="#x" x="282.5" y="281.5"/><use href="#n" x="659.5" y="334.5"/><use href="#n" x="704.5" y="525.5"/><use href="#n" x="612.5" y="542.5"/><use href="#n" x="378.5" y="156.5"/><use href="#p" x="390.5" y="159.5"/><use href="#n" x="395.5" y="166.5"/><use href="#n" x="403.5" y="167.5"/><use href="#p" x="390.5" y="173.5"/><use href="#p" x="389.5" y="182.5"/><use href="#n" x="389.5" y="188.5"/><use href="#n" x="374.5" y="182.5"/><use href="#p" x="376.5" y="192.5"/><use href="#x" x="384.5" y="173.5"/><use href="#n" x="392.5" y="178.5"/><use href="#n" x="453.5" y="657.5"/><use href="#n" x="460.5" y="679.5"/><use href="#n" x="473.5" y="685.5"/><use href="#n" x="407.5" y="550.5"/><use href="#n" x="425.5" y="546.5"/>
</g>
</svg>
<span class="t" style='left:304.50px;top:95.27px;font:10.5px/13px "DejaVu Sans","Liberation Sans",sans-serif;color:#f4f4f4;text-shadow:0 0 1px #000;letter-spacing:0.5px;'>P-2594</span><span class="t" style='left:344.11px;top:95.27px;font:10.5px/13px "DejaVu Sans","Liberation Sans",sans-serif;color:#00e0e0;text-shadow:0 0 1px #000;letter-spacing:0.5px;'>-</span><span class="t" style='left:348.40px;top:95.27px;font:10.5px/13px "DejaVu Sans","Liberation Sans",sans-serif;color:#f4f4f4;text-shadow:0 0 1px #000;letter-spacing:0.5px;'>18</span>
<span class="t" style='left:177.80px;top:203.37px;font:10.5px/13px "DejaVu Sans","Liberation Sans",sans-serif;color:#f4f4f4;text-shadow:0 0 1px #000;letter-spacing:0.5px;'>E-6289</span><span class="t" style='left:217.95px;top:203.37px;font:10.5px/13px "DejaVu Sans","Liberation Sans",sans-serif;color:#00e0e0;text-shadow:0 0 1px #000;letter-spacing:0.5px;'>-</span><span class="t" style='left:222.23px;top:203.37px;font:10.5px/13px "DejaVu Sans","Liberation Sans",sans-serif;color:#f4f4f4;text-shadow:0 0 1px #000;letter-spacing:0.5px;'>4</span>
<span class="t" style='left:593.70px;top:277.27px;font:10.5px/13px "DejaVu Sans","Liberation Sans",sans-serif;color:#f4f4f4;text-shadow:0 0 1px #000;letter-spacing:0.5px;'>B-4573</span><span class="t" style='left:634.41px;top:277.27px;font:10.5px/13px "DejaVu Sans","Liberation Sans",sans-serif;color:#00e0e0;text-shadow:0 0 1px #000;letter-spacing:0.5px;'>-</span><span class="t" style='left:638.70px;top:277.27px;font:10.5px/13px "DejaVu Sans","Liberation Sans",sans-serif;color:#f4f4f4;text-shadow:0 0 1px #000;letter-spacing:0.5px;'>2</span><span class="t" style='left:645.88px;top:277.27px;font:10.5px/13px "DejaVu Sans","Liberation Sans",sans-serif;color:#ffe000;text-shadow:0 0 1px #000;letter-spacing:0.5px;'>–</span>
<span class="t" style='left:350.00px;top:496.47px;font:10.5px/13px "DejaVu Sans","Liberation Sans",sans-serif;color:#f4f4f4;text-shadow:0 0 1px #000;letter-spacing:0.5px;'>I-1203</span><span class="t" style='left:386.61px;top:496.47px;font:10.5px/13px "DejaVu Sans","Liberation Sans",sans-serif;color:#00e0e0;text-shadow:0 0 1px #000;letter-spacing:0.5px;'>-</span><span class="t" style='left:390.90px;top:496.47px;font:10.5px/13px "DejaVu Sans","Liberation Sans",sans-serif;color:#f4f4f4;text-shadow:0 0 1px #000;letter-spacing:0.5px;'>7</span><span class="t" style='left:398.08px;top:496.47px;font:10.5px/13px "DejaVu Sans","Liberation Sans",sans-serif;color:#ffff00;text-shadow:0 0 1px #000;letter-spacing:0.5px;'>^</span>
<span class="t" style='left:417.00px;top:617.67px;font:10.5px/13px "DejaVu Sans","Liberation Sans",sans-serif;color:#f4f4f4;text-shadow:0 0 1px #000;letter-spacing:0.5px;'>D-492</span><span class="t" style='left:451.42px;top:617.67px;font:10.5px/13px "DejaVu Sans","Liberation Sans",sans-serif;color:#00e0e0;text-shadow:0 0 1px #000;letter-spacing:0.5px;'>-</span><span class="t" style='left:455.70px;top:617.67px;font:10.5px/13px "DejaVu Sans","Liberation Sans",sans-serif;color:#f4f4f4;text-shadow:0 0 1px #000;letter-spacing:0.5px;'>3</span><span class="t" style='left:462.88px;top:617.67px;font:10.5px/13px "DejaVu Sans","Liberation Sans",sans-serif;color:#ee8400;text-shadow:0 0 1px #000;letter-spacing:0.5px;'>–</span>
<div style="position:absolute;left:6px;top:6px;width:800px;height:30px;overflow:hidden"><span class="t" style='left:389.50px;top:-5.13px;font:10.5px/13px "DejaVu Sans","Liberation Sans",sans-serif;color:#e8e8e8;letter-spacing:-0.180px;'>313</span></div>
<span class="t" style='left:395.50px;top:121.17px;font:10.5px/13px "DejaVu Sans","Liberation Sans",sans-serif;color:#e8e8e8;letter-spacing:-0.180px;'>219</span>
<span class="t" style='left:395.50px;top:241.07px;font:10.5px/13px "DejaVu Sans","Liberation Sans",sans-serif;color:#e8e8e8;letter-spacing:-0.180px;'>125</span>
<span class="t" style='left:399.00px;top:361.87px;font:10.5px/13px "DejaVu Sans","Liberation Sans",sans-serif;color:#e8e8e8;letter-spacing:-0.430px;'>31</span>
<div style="position:absolute;left:9px;top:759px;width:242px;height:43px;border:1px solid #8c8c8c;background:#000;box-sizing:content-box"></div>
<span class="t" style='left:13.50px;top:761.88px;font:9.3px/12px "Liberation Sans","DejaVu Sans",sans-serif;color:#e4e4e4;letter-spacing:-0.094px;'>Symbols</span>
<span class="t" style='left:53.00px;top:761.88px;font:9.3px/12px "Liberation Sans","DejaVu Sans",sans-serif;color:#e4e4e4;letter-spacing:0.051px;'>-CG</span>
<span class="t" style='left:78.30px;top:761.88px;font:9.3px/12px "Liberation Sans","DejaVu Sans",sans-serif;color:#e4e4e4;letter-spacing:0.534px;'>-IC</span>
<span class="t" style='left:99.00px;top:761.88px;font:9.3px/12px "Liberation Sans","DejaVu Sans",sans-serif;color:#e4e4e4;letter-spacing:0.340px;'>+CG</span>
<span class="t" style='left:124.40px;top:761.88px;font:9.3px/12px "Liberation Sans","DejaVu Sans",sans-serif;color:#e4e4e4;letter-spacing:0.656px;'>+IC</span>
<span class="t" style='left:153.20px;top:761.88px;font:9.3px/12px "Liberation Sans","DejaVu Sans",sans-serif;color:#e4e4e4;letter-spacing:-0.101px;'>Strike age color codes</span>
<span class="t" style='left:13.50px;top:774.98px;font:9.3px/12px "Liberation Sans","DejaVu Sans",sans-serif;color:#e4e4e4;letter-spacing:-0.394px;'>Recent</span>
<span class="t" style='left:13.50px;top:787.78px;font:9.3px/12px "Liberation Sans","DejaVu Sans",sans-serif;color:#e4e4e4;letter-spacing:-0.291px;'>Old</span>
<span class="t" style='left:153.90px;top:774.98px;font:9.3px/12px "Liberation Sans","DejaVu Sans",sans-serif;color:#f0d000;letter-spacing:0.075px;'>15+</span>
<span class="t" style='left:188.40px;top:774.98px;font:9.3px/12px "Liberation Sans","DejaVu Sans",sans-serif;color:#f0a800;letter-spacing:0.075px;'>30+</span>
<span class="t" style='left:222.80px;top:774.98px;font:9.3px/12px "Liberation Sans","DejaVu Sans",sans-serif;color:#f09400;letter-spacing:0.075px;'>45+</span>
<span class="t" style='left:153.90px;top:787.78px;font:9.3px/12px "Liberation Sans","DejaVu Sans",sans-serif;color:#e88000;letter-spacing:0.075px;'>60+</span>
<span class="t" style='left:188.40px;top:787.78px;font:9.3px/12px "Liberation Sans","DejaVu Sans",sans-serif;color:#e86400;letter-spacing:0.075px;'>75+</span>
<span class="t" style='left:222.80px;top:787.78px;font:9.3px/12px "Liberation Sans","DejaVu Sans",sans-serif;color:#e84000;letter-spacing:0.075px;'>90+</span>
<svg width="100" height="30" viewBox="50 773 100 30" style="left:50px;top:773px"><g shape-rendering="crispEdges"><g fill="#00e8e8"><use href="#n" x="60.5" y="780.5"/><use href="#m" x="85.5" y="780.5"/><use href="#p" x="110.500" y="780.5"/><use href="#x" x="134.500" y="780.5"/></g><g fill="#ffff00"><use href="#n" x="60.5" y="793.5"/><use href="#m" x="85.5" y="793.5"/><use href="#p" x="110.500" y="793.5"/><use href="#x" x="134.500" y="793.5"/></g></g></svg>
<div style="position:absolute;left:685px;top:792px;width:121px;height:14px;background:#000"></div>
<span class="t" style='left:687.50px;top:793.36px;font:9.35px/12px "Liberation Sans","DejaVu Sans",sans-serif;color:#f0f0f0;letter-spacing:0.109px;'>©2005 Astrogenic Systems</span>
<div class="box" style="left:812px;top:8px;width:319px;height:318px"></div>
<div class="box" style="left:812px;top:333px;width:319px;height:113px"></div>
<div class="box" style="left:812px;top:453px;width:318px;height:347px"></div>
<div class="btn" style="left:819px;top:16px;width:57px;height:16px;background:#5c0000"></div>
<span class="t" style='left:824.50px;top:17.85px;font:bold 12px/15px "DejaVu Sans","Liberation Sans",sans-serif;color:#e8e8e8;letter-spacing:-0.172px;'>STRIKE</span>
<div class="btn" style="left:883px;top:16px;width:57px;height:16px;background:#333"></div>
<span class="t" style='left:890.50px;top:17.85px;font:bold 12px/15px "DejaVu Sans","Liberation Sans",sans-serif;color:#b8c0c8;letter-spacing:0.290px;'>NOISE</span>
<div class="btn" style="left:994px;top:16px;width:127px;height:16px;background:#2c2c2c"></div>
<span class="t" style='left:998.50px;top:17.18px;font:bold 12.5px/16px "DejaVu Sans","Liberation Sans",sans-serif;color:#ffffff;letter-spacing:-0.259px;'>Bng 123°</span>
<span class="t" style='left:1076.50px;top:17.18px;font:bold 12.5px/16px "DejaVu Sans","Liberation Sans",sans-serif;color:#00e400;letter-spacing:-0.380px;'>193mi</span>
<div class="btn" style="left:821px;top:64px;width:81px;height:15px;background:#555"></div>
<span class="t" style='left:829.50px;top:64.65px;font:12px/15px "DejaVu Sans","Liberation Sans",sans-serif;color:#ffffff;letter-spacing:-0.220px;'>Strikes/min</span>
<div class="btn" style="left:931px;top:64px;width:81px;height:15px;background:#555"></div>
<span class="t" style='left:943.50px;top:64.65px;font:12px/15px "DejaVu Sans","Liberation Sans",sans-serif;color:#ffffff;letter-spacing:-0.207px;'>Close/min</span>
<div class="btn" style="left:1041px;top:64px;width:81px;height:15px;background:#555"></div>
<span class="t" style='left:1050.00px;top:64.65px;font:12px/15px "DejaVu Sans","Liberation Sans",sans-serif;color:#ffffff;letter-spacing:-0.371px;'>Noises/min</span>
<span class="t" style='left:864.00px;top:84.96px;font:bold 27px/34px "DejaVu Sans","Liberation Sans",sans-serif;color:#ffffff;letter-spacing:0.363px;'>30</span>
<span class="t" style='left:993.41px;top:84.96px;font:bold 27px/34px "DejaVu Sans","Liberation Sans",sans-serif;color:#ffffff;'>0</span>
<span class="t" style='left:1103.71px;top:84.96px;font:bold 27px/34px "DejaVu Sans","Liberation Sans",sans-serif;color:#bdbdbd;'>1</span>
<span class="t" style='left:826.60px;top:131.55px;font:12px/15px "DejaVu Sans","Liberation Sans",sans-serif;color:#ffffff;letter-spacing:0.263px;'>Total Strikes</span>
<span class="t" style='left:871.60px;top:149.25px;font:12px/15px "DejaVu Sans","Liberation Sans",sans-serif;color:#ffffff;letter-spacing:0.115px;'>3303</span>
<span class="t" style='left:944.30px;top:131.55px;font:12px/15px "DejaVu Sans","Liberation Sans",sans-serif;color:#ffffff;letter-spacing:0.361px;'>Total Close</span>
<span class="t" style='left:1004.87px;top:149.25px;font:12px/15px "DejaVu Sans","Liberation Sans",sans-serif;color:#ffffff;'>1</span>
<span class="t" style='left:1047.60px;top:131.55px;font:12px/15px "DejaVu Sans","Liberation Sans",sans-serif;color:#c8c8c8;letter-spacing:0.302px;'>Total Noises</span>
<span class="t" style='left:1099.60px;top:149.25px;font:12px/15px "DejaVu Sans","Liberation Sans",sans-serif;color:#c8c8c8;letter-spacing:0.032px;'>203</span>
<span class="t" style='left:821.30px;top:203.35px;font:12px/15px "DejaVu Sans","Liberation Sans",sans-serif;color:#b4b4b4;letter-spacing:0.188px;'>Lightning type distribution</span>
<div class="hl" style="left:821px;top:217px;width:303px"></div>
<span class="t" style='left:821.30px;top:225.55px;font:bold 12px/15px "DejaVu Sans","Liberation Sans",sans-serif;color:#ffffff;letter-spacing:-0.642px;'>Cloud-ground</span>
<span class="t" style='left:912.50px;top:225.55px;font:12px/15px "DejaVu Sans","Liberation Sans",sans-serif;color:#d0d0d0;'>+</span>
<div class="bar" style="left:925px;top:227px"><i style="width:15px;background:#ff0000"></i></div>
<span class="t" style='left:979.70px;top:225.55px;font:bold 12px/15px "DejaVu Sans","Liberation Sans",sans-serif;color:#ffffff;letter-spacing:-0.074px;'>30%</span>
<span class="t" style='left:1015.50px;top:225.55px;font:bold 12px/15px "DejaVu Sans","Liberation Sans",sans-serif;color:#ffffff;'>−</span>
<div class="bar" style="left:1028px;top:227px"><i style="width:31px;background:#99d4ff"></i></div>
<span class="t" style='left:1082.40px;top:225.55px;font:bold 12px/15px "DejaVu Sans","Liberation Sans",sans-serif;color:#ffffff;letter-spacing:0.192px;'>61%</span>
<span class="t" style='left:821.30px;top:249.35px;font:12px/15px "DejaVu Sans","Liberation Sans",sans-serif;color:#b0b0b0;letter-spacing:0.413px;'>Count</span>
<span class="t" style='left:925.20px;top:249.35px;font:bold 12px/15px "DejaVu Sans","Liberation Sans",sans-serif;color:#ffffff;letter-spacing:-0.350px;'>994</span>
<span class="t" style='left:1028.40px;top:249.35px;font:bold 12px/15px "DejaVu Sans","Liberation Sans",sans-serif;color:#ffffff;letter-spacing:-0.525px;'>2014</span>
<span class="t" style='left:821.30px;top:279.45px;font:bold 12px/15px "DejaVu Sans","Liberation Sans",sans-serif;color:#ffffff;letter-spacing:-0.606px;'>Intracloud</span>
<span class="t" style='left:912.50px;top:279.45px;font:12px/15px "DejaVu Sans","Liberation Sans",sans-serif;color:#d0d0d0;'>+</span>
<div class="bar" style="left:925px;top:281px"><i style="width:3px;background:#ff69b4"></i></div>
<span class="t" style='left:979.70px;top:279.45px;font:bold 12px/15px "DejaVu Sans","Liberation Sans",sans-serif;color:#ffffff;letter-spacing:0.114px;'>5%</span>
<span class="t" style='left:1015.50px;top:279.45px;font:bold 12px/15px "DejaVu Sans","Liberation Sans",sans-serif;color:#ffffff;'>−</span>
<div class="bar" style="left:1028px;top:281px"><i style="width:2px;background:#00e400"></i></div>
<span class="t" style='left:1082.40px;top:279.45px;font:bold 12px/15px "DejaVu Sans","Liberation Sans",sans-serif;color:#ffffff;letter-spacing:0.213px;'>4%</span>
<span class="t" style='left:821.30px;top:303.55px;font:12px/15px "DejaVu Sans","Liberation Sans",sans-serif;color:#b0b0b0;letter-spacing:0.413px;'>Count</span>
<span class="t" style='left:925.20px;top:303.55px;font:bold 12px/15px "DejaVu Sans","Liberation Sans",sans-serif;color:#ffffff;letter-spacing:-0.350px;'>150</span>
<span class="t" style='left:1028.40px;top:303.55px;font:bold 12px/15px "DejaVu Sans","Liberation Sans",sans-serif;color:#ffffff;letter-spacing:-0.616px;'>145</span>
<span class="t" style='left:821.30px;top:338.14px;font:bold 15.5px/19px "DejaVu Sans","Liberation Sans",sans-serif;color:#00e400;letter-spacing:0.609px;'>3/6/2026 3:15:19 PM</span>
<div class="hl" style="left:821px;top:358px;width:302px"></div>
<span class="t" style='left:821.30px;top:376.65px;font:12px/15px "DejaVu Sans","Liberation Sans",sans-serif;color:#ffffff;letter-spacing:0.063px;'>Squelch</span>
<span class="t" style='left:909.50px;top:376.65px;font:12px/15px "DejaVu Sans","Liberation Sans",sans-serif;color:#ffffff;'>0</span>
<span class="t" style='left:981.40px;top:376.65px;font:12px/15px "DejaVu Sans","Liberation Sans",sans-serif;color:#ffffff;letter-spacing:0.259px;'>Upload</span>
<span class="t" style='left:1061.20px;top:376.65px;font:12px/15px "DejaVu Sans","Liberation Sans",sans-serif;color:#c8c8c8;letter-spacing:0.184px;'>Disabled</span>
<span class="t" style='left:821.30px;top:396.75px;font:12px/15px "DejaVu Sans","Liberation Sans",sans-serif;color:#ffffff;letter-spacing:0.351px;'>Persistence</span>
<span class="t" style='left:909.50px;top:396.75px;font:12px/15px "DejaVu Sans","Liberation Sans",sans-serif;color:#ffffff;letter-spacing:-0.086px;'>90 min</span>
<span class="t" style='left:981.40px;top:396.75px;font:12px/15px "DejaVu Sans","Liberation Sans",sans-serif;color:#ffffff;letter-spacing:0.398px;'>Capture</span>
<span class="t" style='left:1061.20px;top:396.75px;font:12px/15px "DejaVu Sans","Liberation Sans",sans-serif;color:#00e400;letter-spacing:-0.153px;'>Active</span>
<span class="t" style='left:821.30px;top:416.45px;font:12px/15px "DejaVu Sans","Liberation Sans",sans-serif;color:#ffffff;letter-spacing:0.293px;'>Range</span>
<span class="t" style='left:909.50px;top:416.45px;font:12px/15px "DejaVu Sans","Liberation Sans",sans-serif;color:#ffffff;letter-spacing:-0.090px;'>313 mi</span>
<span class="t" style='left:981.40px;top:416.45px;font:12px/15px "DejaVu Sans","Liberation Sans",sans-serif;color:#ffffff;'>Receiver</span>
<span class="t" style='left:1061.20px;top:416.45px;font:12px/15px "DejaVu Sans","Liberation Sans",sans-serif;color:#00e400;letter-spacing:0.244px;'>Enabled</span>
<span class="t" style='left:821.30px;top:463.95px;font:12px/15px "DejaVu Sans","Liberation Sans",sans-serif;color:#b8b8b8;letter-spacing:-0.035px;'>Uptime</span>
<span class="t" style='left:910.00px;top:463.95px;font:12px/15px "DejaVu Sans","Liberation Sans",sans-serif;color:#ffffff;letter-spacing:0.264px;'>1275:00</span>
<span class="t" style='left:981.40px;top:463.95px;font:12px/15px "DejaVu Sans","Liberation Sans",sans-serif;color:#b8b8b8;letter-spacing:0.164px;'>Peak time</span>
<span class="t" style='left:1061.20px;top:463.95px;font:12px/15px "DejaVu Sans","Liberation Sans",sans-serif;color:#b8b8b8;letter-spacing:0.296px;'>Plot</span>
<span class="t" style='left:821.30px;top:487.15px;font:12px/15px "DejaVu Sans","Liberation Sans",sans-serif;color:#b8b8b8;letter-spacing:0.413px;'>Peak rate</span>
<span class="t" style='left:910.00px;top:487.15px;font:12px/15px "DejaVu Sans","Liberation Sans",sans-serif;color:#ffffff;letter-spacing:-0.057px;'>39/min</span>
<span class="t" style='left:981.40px;top:487.15px;font:12px/15px "DejaVu Sans","Liberation Sans",sans-serif;color:#ffffff;letter-spacing:0.307px;'>3:08 PM</span>
<span class="t" style='left:1061.20px;top:487.15px;font:12px/15px "DejaVu Sans","Liberation Sans",sans-serif;color:#ffffff;letter-spacing:0.151px;'>Strike</span>
<span class="t" style='left:822.50px;top:516.65px;font:12px/15px "DejaVu Sans","Liberation Sans",sans-serif;color:#b8b8b8;letter-spacing:0.383px;'>Trend graph</span>
<span class="t" style='left:908.30px;top:516.65px;font:12px/15px "DejaVu Sans","Liberation Sans",sans-serif;color:#ffffff;letter-spacing:-0.036px;'>60 min</span>
<svg width="326" height="282" viewBox="812 530 326 282" style="left:812px;top:530px">
<polyline points="822.5,767.8 823.9,749.7 825.5,758.7 827.1,745.1 828.4,740.6 829.8,754.2 831.2,763.3 832.5,772.3 834.3,758.7 836.1,745.1 838.0,736.1 839.5,736.1 841.1,754.2 842.5,763.3 844.1,758.7 845.7,745.1 847.0,731.5 848.6,738.3 850.2,749.7 852.0,763.3 853.8,745.1 855.4,717.9 857.0,713.4 858.4,706.6 860.2,690.7 862.4,678.2 864.0,690.7 865.6,711.1 867.4,706.6 869.2,708.8 871.1,702.0 872.9,681.6 874.7,699.8 876.5,697.5 878.3,713.4 880.4,717.9 882.4,706.6 884.2,693.0 886.0,708.8 887.8,727.0 889.4,744.0 891.0,744.0 892.8,727.0 895.1,713.4 897.4,703.2 899.2,713.4 901.0,727.0 902.4,736.1 903.7,749.7 905.1,731.5 906.4,686.2 907.8,690.7 909.6,697.5 911.4,695.2 914.8,697.5 916.6,702.0 918.0,717.9 919.3,738.3 920.7,746.3 922.5,727.0 924.3,721.3 926.1,729.3 928.0,711.1 929.8,686.2 931.6,679.4 933.4,668.0 934.8,679.4 936.1,681.6 937.5,708.8 939.3,727.0 941.1,736.1 942.9,736.1 944.3,745.1 945.6,751.9 947.5,736.1 949.3,731.5 951.1,725.9 952.9,731.5 954.7,733.8 956.5,736.1 958.3,717.9 960.2,699.8 962.4,697.5 964.7,695.2 967.0,690.7 968.8,677.1 970.1,672.6 971.5,690.7 972.9,717.9 974.2,736.1 975.6,727.0 976.9,724.7 978.7,736.1 980.1,742.9 981.9,727.0 983.7,699.8 985.6,668.0 987.4,659.0 988.7,677.1 990.1,708.8 991.4,727.0 992.8,749.7 994.2,727.0 995.5,708.8 996.9,717.9 998.7,727.0 1000.5,730.4 1002.3,708.8 1004.3,697.5 1005.7,699.8 1007.1,717.9 1008.4,740.6 1009.8,756.5 1011.2,763.3 1012.5,756.5 1013.9,727.0 1015.2,695.2 1016.6,683.9 1018.0,677.1 1019.3,670.3 1020.7,655.6 1022.0,654.4 1023.4,672.6 1024.8,699.8 1026.1,731.5 1027.5,713.4 1029.3,699.8 1030.7,688.4 1032.0,706.6 1033.8,699.8 1035.6,688.4 1037.0,708.8 1038.8,717.9 1040.2,724.7 1042.0,715.6 1043.8,706.6 1045.6,720.2 1047.9,717.9 1050.2,708.8 1052.0,702.0 1053.3,722.4 1054.7,699.8 1056.5,674.8 1058.3,660.1 1060.1,660.1 1061.5,679.4 1062.9,702.0 1064.2,733.8 1066.0,727.0 1067.8,699.8 1069.7,679.4 1071.5,678.2 1073.3,690.7 1074.6,702.0 1076.5,690.7 1078.3,681.6 1079.6,678.2 1081.4,690.7 1083.3,699.8 1085.1,703.2 1086.9,706.6 1088.5,711.1" fill="none" stroke="#9bd3ff" stroke-width="1" shape-rendering="crispEdges"/>
<polyline points="822.5,723.6 825.5,711.1 827.1,720.2 828.4,716.8 829.8,727.0 831.2,745.1 832.5,767.8 833.9,745.1 835.7,729.3 837.3,721.8 838.9,730.4 840.7,745.1 842.5,758.7 844.1,749.7 845.7,722.4 847.5,697.5 849.3,706.6 851.1,722.4 852.0,727.0 853.8,711.1 855.4,706.6 857.0,702.0 858.8,690.7 860.2,663.5 862.4,645.4 864.0,656.7 865.2,674.8 866.8,672.6 868.3,679.4 869.7,672.6 871.5,677.1 873.3,655.6 874.7,665.8 876.0,672.6 877.4,683.9 879.2,688.4 881.0,683.9 882.4,674.8 883.8,659.4 885.1,674.8 886.5,697.5 887.8,713.4 889.2,730.4 891.0,730.4 892.8,708.8 894.6,686.2 896.5,664.6 898.3,670.3 900.1,683.9 901.4,690.7 903.0,674.8 904.6,665.8 906.4,645.4 907.8,663.5 909.2,655.6 910.5,668.0 911.9,677.1 914.8,670.3 917.1,677.1 918.9,699.8 920.2,715.6 922.1,702.0 924.3,683.9 926.1,690.7 928.0,683.9 929.8,677.1 930.7,640.8 932.0,647.6 933.4,636.3 934.8,643.1 936.1,659.0 937.5,674.8 938.8,690.7 940.2,699.8 941.6,715.6 943.1,704.3 944.7,720.2 946.5,706.6 948.4,697.5 950.2,691.8 951.5,699.8 953.4,713.4 954.7,704.3 956.5,695.2 958.3,686.2 959.7,663.5 960.6,645.4 962.0,659.0 963.3,654.4 964.7,668.0 966.0,659.0 967.4,645.4 969.2,626.1 970.6,640.8 971.9,674.8 973.3,699.8 975.1,706.6 976.9,702.0 978.3,711.1 980.1,702.0 981.9,697.5 983.7,679.4 985.6,647.6 987.4,617.0 988.7,645.4 990.1,686.2 991.4,708.8 992.8,731.5 994.2,713.4 996.0,670.3 997.3,681.6 998.7,688.4 1000.5,677.1 1002.3,645.4 1003.9,668.0 1005.7,683.9 1007.5,693.0 1009.3,706.6 1010.7,720.2 1012.5,711.1 1014.3,677.1 1015.2,640.8 1016.6,652.2 1018.0,640.8 1019.3,654.4 1020.2,636.3 1021.6,626.1 1022.9,636.3 1024.8,643.1 1026.1,668.0 1027.5,665.8 1028.8,654.4 1030.2,668.0 1032.0,683.9 1033.8,679.4 1035.6,681.6 1037.0,672.6 1038.8,679.4 1040.2,674.8 1042.0,659.0 1043.8,649.9 1045.6,663.5 1047.0,690.7 1048.3,679.4 1050.2,659.0 1052.0,636.3 1053.3,654.4 1054.7,668.0 1056.0,652.2 1057.4,629.5 1058.8,607.9 1060.6,607.9 1061.5,636.3 1062.9,677.1 1064.2,706.6 1065.6,695.2 1066.9,672.6 1068.3,645.4 1070.1,622.7 1071.9,636.3 1073.7,668.0 1076.0,669.2 1077.4,656.7 1079.2,642.0 1081.0,645.4 1082.8,659.0 1084.2,668.0 1085.5,656.7 1086.9,661.2 1088.5,664.6" fill="none" stroke="#ffffff" stroke-width="1" shape-rendering="crispEdges"/>
<polyline points="822.5,749.7 824.3,749.7 825.7,758.7 827.1,763.3 829.3,763.3 831.6,772.3 833.9,774.6 836.1,770.1 838.4,768.9 840.7,768.9 842.9,768.9 845.2,763.3 847.5,750.8 849.7,758.7 852.0,758.7 854.3,758.7 856.5,766.7 858.8,763.3 861.5,745.1 863.4,754.2 865.6,767.8 867.9,756.5 869.7,747.4 871.5,758.7 873.3,768.9 875.1,754.2 877.4,745.1 879.2,756.5 881.5,749.7 883.8,758.7 886.0,763.3 890.6,762.1 892.8,756.5 896.0,740.6 897.8,751.9 899.6,763.3 901.9,758.7 904.2,749.7 906.4,745.1 908.7,754.2 911.0,763.3 914.8,763.3 917.1,756.5 919.3,748.5 921.6,747.4 923.0,745.1 924.8,750.8 927.0,754.2 929.8,751.9 931.6,756.5 933.4,758.7 936.1,751.9 938.4,745.1 939.7,739.5 941.6,763.3 943.4,749.7 944.7,754.2 947.0,739.5 948.8,749.7 950.6,745.1 952.4,758.7 953.8,763.3 955.6,747.4 957.0,738.3 958.3,745.1 960.2,739.5 962.0,749.7 963.8,745.1 965.6,751.9 967.4,754.2 969.2,745.1 971.5,735.4 973.8,754.2 976.0,762.1 978.3,749.7 980.6,740.6 982.8,745.1 985.1,756.5 987.4,758.7 989.6,762.1 991.9,756.5 994.2,749.7 996.4,758.7 998.2,749.7 1000.1,763.3 1001.9,754.2 1004.8,767.8 1007.1,758.7 1008.9,745.1 1010.7,739.5 1012.5,739.5 1014.3,727.0 1015.7,729.3 1017.5,736.1 1019.8,754.2 1022.0,749.7 1024.3,739.5 1026.1,742.9 1028.4,745.1 1030.7,751.9 1032.9,758.7 1035.2,763.3 1037.5,758.7 1039.7,745.1 1041.5,729.3 1043.4,724.7 1045.2,724.7 1046.5,745.1 1047.9,749.7 1049.7,736.1 1052.0,721.3 1053.3,736.1 1055.1,749.7 1057.0,758.7 1058.8,740.6 1060.1,736.1 1061.9,754.2 1063.8,765.5 1065.6,754.2 1067.4,745.1 1069.7,739.5 1071.9,742.9 1074.2,754.2 1076.5,758.7 1078.7,751.9 1080.5,745.1 1082.4,739.5 1084.2,745.1 1086.0,749.7 1087.3,747.4 1088.5,754.2" fill="none" stroke="#ff0000" stroke-width="1" shape-rendering="crispEdges"/>
<polyline points="822.5,774.6 823.9,776.4 825.7,773.5 827.1,776.4 829.3,772.3 830.7,776.4 832.5,773.5 834.3,776.4 837.0,772.3 838.9,776.4 842.9,776.4 844.8,773.5 846.6,776.4 849.7,776.4 852.0,768.9 853.8,776.4 857.0,776.4 858.8,772.3 861.1,776.4 863.4,776.4 865.6,763.3 867.4,773.5 869.2,776.4 872.4,776.4 874.7,772.3 876.5,776.4 879.7,776.4 881.5,768.9 883.8,768.9 885.6,776.4 895.1,776.4 897.8,772.3 900.5,768.9 902.4,763.3 904.2,758.7 906.9,758.7 908.7,763.3 911.0,763.7 913.4,768.9 914.8,772.3 917.1,776.5 921.6,776.5 923.9,768.9 926.1,772.3 928.4,768.9 930.2,776.5 937.5,776.5 939.7,772.3 942.0,776.5 948.8,776.5 951.1,772.3 953.4,772.3 955.2,776.5 960.2,776.5 962.4,772.3 964.7,776.5 967.4,772.3 969.2,768.9 973.8,768.9 975.6,776.5 985.1,776.5 987.4,772.3 989.6,772.3 991.4,776.5 996.4,776.5 998.7,767.8 1001.0,754.2 1002.3,758.7 1003.9,772.3 1005.3,776.5 1007.1,773.5 1009.3,776.5 1020.7,776.5 1022.9,772.3 1026.6,763.3 1028.8,768.9 1032.0,774.6 1034.3,776.5 1041.1,776.5 1043.4,774.6 1045.6,776.5 1048.8,776.5 1050.6,774.6 1054.7,770.1 1058.3,763.3 1061.5,767.8 1063.8,770.1 1066.0,767.8 1069.7,763.3 1071.9,768.9 1075.1,772.3 1079.6,768.9 1084.2,767.8 1086.4,772.3 1088.5,773.5" fill="none" stroke="#ff69b4" stroke-width="1" shape-rendering="crispEdges"/>
<polyline points="822.5,774.6 825.3,768.9 828.2,763.3 829.8,768.9 831.6,772.3 834.3,772.3 837.3,768.9 839.3,772.3 840.7,776.5 846.3,776.5 848.6,773.5 852.0,768.9 853.8,773.5 855.4,776.5 861.1,776.5 863.4,773.5 864.7,772.3 866.8,776.5 892.8,776.5 896.2,773.5 899.6,770.1 901.9,768.9 905.3,772.3 907.6,775.7 909.6,776.5 911.0,775.7 913.4,772.3 917.1,772.3 918.4,776.5 923.9,776.5 926.1,772.3 929.8,768.9 931.1,763.3 934.8,763.3 936.1,768.9 937.9,774.6 939.7,776.5 942.0,773.5 946.5,773.5 947.9,776.5 955.6,776.5 957.4,772.3 959.2,768.9 961.5,773.5 967.0,773.5 968.3,776.5 976.0,776.5 978.3,773.5 982.8,773.5 986.5,768.9 987.8,774.6 989.6,776.5 995.1,776.5 996.4,768.9 998.7,768.9 1001.0,767.8 1002.3,768.9 1003.4,768.9 1004.8,768.9 1008.0,763.3 1009.8,768.9 1011.6,772.3 1014.3,776.5 1018.4,775.7 1022.9,773.5 1025.2,776.5 1034.3,774.6 1037.0,768.9 1039.3,763.3 1041.1,768.9 1043.4,773.5 1045.6,776.5 1049.2,772.3 1051.5,767.8 1053.3,773.5 1056.0,776.5 1062.4,776.5 1064.2,773.5 1075.1,773.5 1076.9,776.5 1084.2,776.5 1086.4,767.8 1088.5,763.3" fill="none" stroke="#00e400" stroke-width="1" shape-rendering="crispEdges"/>
<g stroke="#c8c8c8" stroke-width="1" shape-rendering="crispEdges" fill="none">
<path d="M1088.5 542.5V777.5M821.5 777.5H1088.5"/>
<path d="M1085 730.5H1089"/>
<path d="M1085 683.5H1089"/>
<path d="M1085 636.5H1089"/>
<path d="M1085 590.5H1089"/>
<path d="M1085 543.5H1089"/>
<path d="M1088.5 777V781"/>
<path d="M1044.5 777V781"/>
<path d="M1000.5 777V781"/>
<path d="M955.5 777V781"/>
<path d="M911.5 777V781"/>
<path d="M866.5 777V781"/>
<path d="M822.5 777V781"/>
</g></svg>
<span class="t" style='left:1092.40px;top:535.55px;font:12px/15px "DejaVu Sans","Liberation Sans",sans-serif;color:#c4c4c4;letter-spacing:-0.835px;'>50</span>
<span class="t" style='left:1092.40px;top:582.45px;font:12px/15px "DejaVu Sans","Liberation Sans",sans-serif;color:#c4c4c4;letter-spacing:-0.835px;'>40</span>
<span class="t" style='left:1092.40px;top:629.35px;font:12px/15px "DejaVu Sans","Liberation Sans",sans-serif;color:#c4c4c4;letter-spacing:-0.835px;'>30</span>
<span class="t" style='left:1092.40px;top:675.85px;font:12px/15px "DejaVu Sans","Liberation Sans",sans-serif;color:#c4c4c4;letter-spacing:-0.835px;'>20</span>
<span class="t" style='left:819.80px;top:781.35px;font:12px/15px "DejaVu Sans","Liberation Sans",sans-serif;color:#c4c4c4;letter-spacing:-0.435px;'>60</span>
<span class="t" style='left:863.80px;top:781.35px;font:12px/15px "DejaVu Sans","Liberation Sans",sans-serif;color:#c4c4c4;letter-spacing:-0.435px;'>50</span>
<span class="t" style='left:907.60px;top:781.35px;font:12px/15px "DejaVu Sans","Liberation Sans",sans-serif;color:#c4c4c4;letter-spacing:-0.435px;'>40</span>
<span class="t" style='left:952.00px;top:781.35px;font:12px/15px "DejaVu Sans","Liberation Sans",sans-serif;color:#c4c4c4;letter-spacing:-0.435px;'>30</span>
<span class="t" style='left:996.10px;top:781.35px;font:12px/15px "DejaVu Sans","Liberation Sans",sans-serif;color:#c4c4c4;letter-spacing:-0.435px;'>20</span>
<span class="t" style='left:1040.60px;top:781.35px;font:12px/15px "DejaVu Sans","Liberation Sans",sans-serif;color:#c4c4c4;letter-spacing:-0.435px;'>10</span>
<span class="t" style='left:1087.00px;top:781.35px;font:12px/15px "DejaVu Sans","Liberation Sans",sans-serif;color:#c4c4c4;'>0</span>
<span class="t" style='left:1100.20px;top:781.35px;font:12px/15px "DejaVu Sans","Liberation Sans",sans-serif;color:#c4c4c4;letter-spacing:-1.376px;'>min</span>
</body></html>
